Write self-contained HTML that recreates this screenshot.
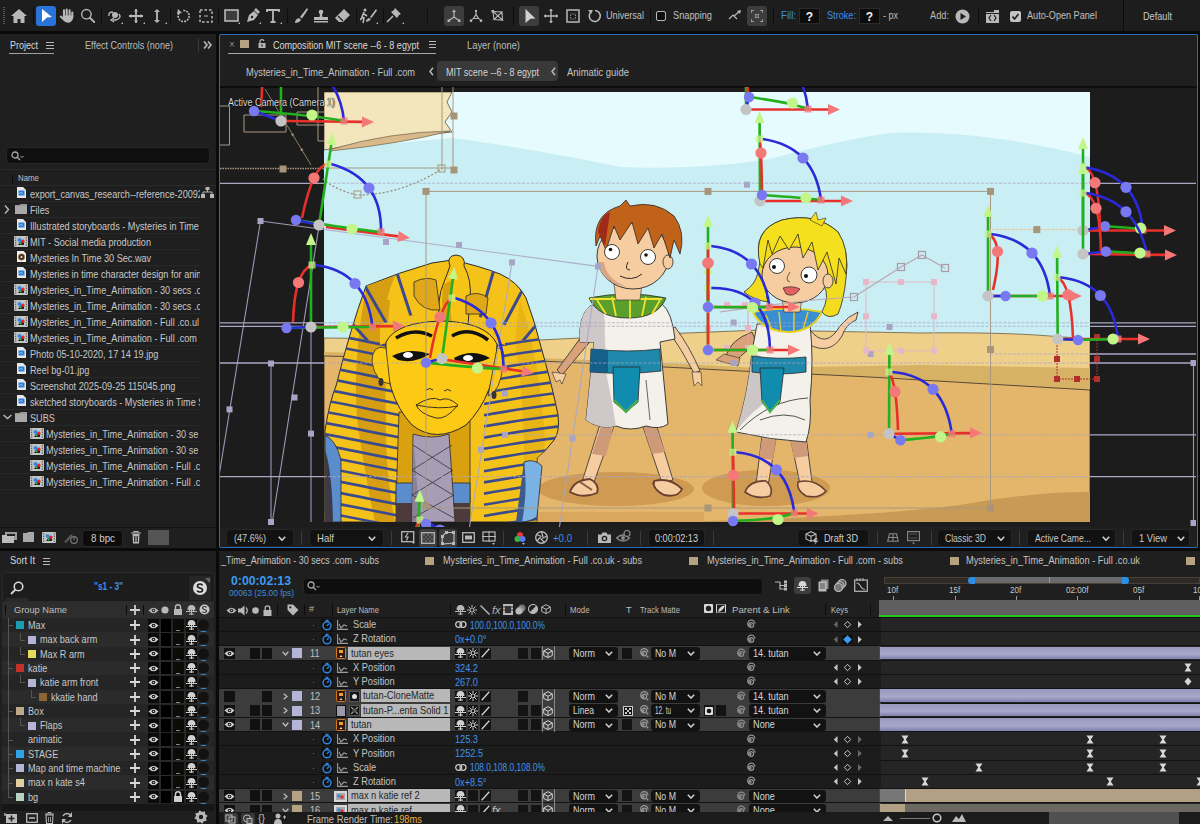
<!DOCTYPE html>
<html><head><meta charset="utf-8"><style>
html,body{margin:0;padding:0;width:1200px;height:824px;overflow:hidden;background:#0a0a0a;position:relative;font-family:"Liberation Sans",sans-serif;}
body div,body span,body svg{position:absolute;}
span{white-space:pre;display:block;}
</style></head><body>
<div style="left:0px;top:0px;width:1200px;height:31px;background:#1d1d1d;"></div>
<svg style="left:2px;top:7px;" width="4" height="17" viewBox="0 0 4 17"><rect x="1" y="0" width="2" height="1" fill="#555"/><rect x="1" y="2" width="2" height="1" fill="#555"/><rect x="1" y="4" width="2" height="1" fill="#555"/><rect x="1" y="6" width="2" height="1" fill="#555"/><rect x="1" y="8" width="2" height="1" fill="#555"/><rect x="1" y="10" width="2" height="1" fill="#555"/><rect x="1" y="12" width="2" height="1" fill="#555"/><rect x="1" y="14" width="2" height="1" fill="#555"/><rect x="1" y="16" width="2" height="1" fill="#555"/></svg>
<svg style="left:11px;top:9px;" width="16" height="14" viewBox="0 0 16 14"><path d="M8 0 L16 7 H13.5 V14 H9.5 V10 H6.5 V14 H2.5 V7 H0 Z" fill="#b8b8b8"/></svg>
<div style="left:33px;top:7px;width:1px;height:17px;background:#0e0e0e;"></div>
<div style="left:101px;top:7px;width:1px;height:17px;background:#0e0e0e;"></div>
<div style="left:170px;top:7px;width:1px;height:17px;background:#0e0e0e;"></div>
<div style="left:218px;top:7px;width:1px;height:17px;background:#0e0e0e;"></div>
<div style="left:287px;top:7px;width:1px;height:17px;background:#0e0e0e;"></div>
<div style="left:356px;top:7px;width:1px;height:17px;background:#0e0e0e;"></div>
<div style="left:383px;top:7px;width:1px;height:17px;background:#0e0e0e;"></div>
<div style="left:427px;top:7px;width:1px;height:17px;background:#0e0e0e;"></div>
<div style="left:513px;top:7px;width:1px;height:17px;background:#0e0e0e;"></div>
<div style="left:650px;top:7px;width:1px;height:17px;background:#0e0e0e;"></div>
<div style="left:773px;top:7px;width:1px;height:17px;background:#0e0e0e;"></div>
<div style="left:978px;top:7px;width:1px;height:17px;background:#0e0e0e;"></div>
<div style="left:36px;top:6px;width:20px;height:20px;background:#2a73d9;border-radius:3px;"></div>
<svg style="left:41px;top:9px;" width="12" height="14" viewBox="0 0 12 14"><path d="M1 0 L11 8 L6 8.5 L1 13 Z" fill="#fff"/></svg>
<svg style="left:58px;top:7px;" width="17" height="17" viewBox="0 0 17 17"><g stroke="#b8b8b8" stroke-width="2.1" stroke-linecap="round"><path d="M6 9 V3.2 M8.7 9 V2.5 M11.6 9 V3.4 M14.3 10 V5.6 M6.5 13 L2.8 9.6"/></g><path d="M4.8 8.5 H15.3 L15 11.5 Q13.5 15.8 10 15.8 Q6.8 15.8 5.2 13 Z" fill="#b8b8b8"/></svg>
<svg style="left:80px;top:7px;" width="17" height="17" viewBox="0 0 17 17"><circle cx="6.4" cy="7.2" r="4.7" stroke="#b8b8b8" stroke-width="1.4" fill="none"/><path d="M9.8 10.6 L14.2 15" stroke="#b8b8b8" stroke-width="1.8" stroke-linecap="round"/></svg>
<svg style="left:107px;top:9px;" width="17" height="15" viewBox="0 0 17 15"><circle cx="8" cy="6" r="3" fill="#b8b8b8"/><path d="M2 7 Q1 3 6 3 M12 5 Q15 9 9 11 L6 11" stroke="#b8b8b8" stroke-width="1.4" fill="none"/><path d="M7 9 L4 11 L7 13" stroke="#b8b8b8" stroke-width="1.4" fill="none"/><path d="M16 13 L16 15 L14 15 Z" fill="#b8b8b8"/></svg>
<svg style="left:129px;top:9px;" width="17" height="15" viewBox="0 0 17 15"><path d="M7 0 L7 14 M0 7 L14 7" stroke="#b8b8b8" stroke-width="1.8"/><path d="M7 0 L5 2.5 H9 Z M7 14 L5 11.5 H9 Z M0 7 L2.5 5 V9 Z M14 7 L11.5 5 V9 Z" fill="#b8b8b8"/><path d="M16 13 L16 15 L14 15 Z" fill="#b8b8b8"/></svg>
<svg style="left:151px;top:9px;" width="17" height="15" viewBox="0 0 17 15"><path d="M6 1 L6 13" stroke="#b8b8b8" stroke-width="1.8"/><path d="M6 0 L3 3 H9 Z M6 14 L3 11 H9 Z" fill="#b8b8b8"/><path d="M16 13 L16 15 L14 15 Z" fill="#b8b8b8"/></svg>
<svg style="left:176px;top:9px;" width="15" height="14" viewBox="0 0 15 14"><path d="M3 4 A5.5 5.5 0 1 0 7 1.5" stroke="#b8b8b8" stroke-width="1.6" fill="none" stroke-dasharray="2 1"/><path d="M2 0 L6 4 L1 5 Z" fill="#b8b8b8"/></svg>
<svg style="left:199px;top:9px;" width="14" height="14" viewBox="0 0 14 14"><rect x="1" y="1" width="12" height="12" stroke="#b8b8b8" stroke-width="1.5" fill="none" stroke-dasharray="2.5 2"/><path d="M5 7 H9" stroke="#b8b8b8"/></svg>
<svg style="left:224px;top:9px;" width="17" height="15" viewBox="0 0 17 15"><rect x="1" y="1" width="13" height="11" stroke="#b8b8b8" stroke-width="1.6" fill="#3c3c3c"/><path d="M16 13 L16 15 L14 15 Z" fill="#b8b8b8"/></svg>
<svg style="left:245px;top:8px;" width="17" height="16" viewBox="0 0 17 16"><path d="M2 14 L4 7 L9 3 L13 7 L9 12 Z" fill="#b8b8b8"/><path d="M9 2 L11 0 L15 4 L13 6 Z" fill="#b8b8b8"/><circle cx="7" cy="9" r="1.2" fill="#1d1d1d"/><path d="M16 14 L16 16 L14 16 Z" fill="#b8b8b8"/></svg>
<svg style="left:266px;top:9px;" width="17" height="15" viewBox="0 0 17 15"><path d="M1 3 V1 H13 V3 M7 1 V13 M4.5 13 H9.5" stroke="#b8b8b8" stroke-width="1.8" fill="none"/><path d="M16 13 L16 15 L14 15 Z" fill="#b8b8b8"/></svg>
<svg style="left:294px;top:8px;" width="14" height="16" viewBox="0 0 14 16"><path d="M13 0 L6 9 L8 10.5 L14 1.5 Z" fill="#b8b8b8"/><path d="M5 10 Q1 11 1 15 Q5 15 7 12 Z" fill="#b8b8b8"/></svg>
<svg style="left:313px;top:9px;" width="16" height="14" viewBox="0 0 16 14"><circle cx="8" cy="3" r="2.3" fill="#b8b8b8"/><path d="M7 5 H9 L9.5 8 H15 V11 H1 V8 H6.5 Z" fill="#b8b8b8"/><rect x="1" y="12" width="14" height="1.5" fill="#b8b8b8"/></svg>
<svg style="left:334px;top:9px;" width="17" height="14" viewBox="0 0 17 14"><path d="M10 0 L16 6 L9 13 L5 13 L1 9 Z" fill="#b8b8b8"/><path d="M4 7 L9 12" stroke="#1d1d1d" stroke-width="1.2"/></svg>
<svg style="left:360px;top:8px;" width="19" height="16" viewBox="0 0 19 16"><circle cx="5" cy="2" r="1.5" fill="#b8b8b8"/><path d="M4 4 L2 9 L4 10 L3 15 M4 6 L7 8 M3 9 L0 12" stroke="#b8b8b8" stroke-width="1.6" fill="none"/><path d="M16 1 L10 9 L11.5 10 L17 2.5 Z M9 10 Q6 11 6 14 Q9 14 11 11 Z" fill="#b8b8b8"/><path d="M18 14 L18 16 L16 16 Z" fill="#b8b8b8"/></svg>
<svg style="left:386px;top:8px;" width="19" height="16" viewBox="0 0 19 16"><path d="M9 0 L15 6 L13 7 L11 10 L5 4 L8 2 Z" fill="#b8b8b8"/><path d="M7 8 L1 14" stroke="#b8b8b8" stroke-width="1.6"/><path d="M18 14 L18 16 L16 16 Z" fill="#b8b8b8"/></svg>
<div style="left:444px;top:6px;width:20px;height:20px;background:#3d3d3d;border-radius:3px;"></div>
<svg style="left:446px;top:8px;" width="16" height="16" viewBox="0 0 16 16"><path d="M8 9 V3.5 M8 9 L3 12.5 M8 9 L13 12.5" stroke="#b8b8b8" stroke-width="1.2"/><path d="M8 1.5 L6 4 H10 Z" fill="#b8b8b8"/><rect x="1.5" y="11.5" width="2.5" height="2.5" fill="#b8b8b8"/><rect x="12" y="11.5" width="2.5" height="2.5" fill="#b8b8b8"/></svg>
<svg style="left:468px;top:8px;" width="16" height="16" viewBox="0 0 16 16"><path d="M8 6.5 L5.5 10.5 H10.5 Z" stroke="#b8b8b8" stroke-width="1.2" fill="none"/><path d="M8 3 V6.5 M5.5 10.5 L3 12.5 M10.5 10.5 L13 12.5" stroke="#b8b8b8" stroke-width="1"/><circle cx="8" cy="3" r="1.2" fill="#b8b8b8"/><rect x="1.8" y="11.5" width="2.4" height="2.4" fill="#b8b8b8"/><rect x="11.8" y="11.5" width="2.4" height="2.4" fill="#b8b8b8"/></svg>
<svg style="left:490px;top:8px;" width="15" height="14" viewBox="0 0 15 14"><path d="M3 3.5 L12 4 L4 11.5 L12.5 12 Z M3 3.5 L4 11.5 M12 4 L12.5 12" stroke="#b8b8b8" stroke-width="1.1" fill="none"/><rect x="1.5" y="2" width="2.5" height="2.5" fill="#b8b8b8"/></svg>
<div style="left:519px;top:6px;width:20px;height:20px;background:#3d3d3d;border-radius:3px;"></div>
<svg style="left:524px;top:8px;" width="13" height="16" viewBox="0 0 13 16"><path d="M1.5 1 L11.5 10.5 L6.5 10.8 L1.5 15 Z" fill="#d0d0d0"/></svg>
<svg style="left:544px;top:9px;" width="14" height="14" viewBox="0 0 14 14"><path d="M7 0 V14 M0 7 H14" stroke="#b8b8b8" stroke-width="1.3"/><path d="M7 0 L5 2 H9 Z M7 14 L5 12 H9 Z M0 7 L2 5 V9 Z M14 7 L12 5 V9 Z" fill="#b8b8b8"/></svg>
<svg style="left:566px;top:9px;" width="14" height="14" viewBox="0 0 14 14"><rect x="1" y="1" width="12" height="12" stroke="#b8b8b8" stroke-width="1.5" fill="none"/><rect x="4.5" y="5" width="5" height="5" stroke="#b8b8b8" stroke-width="0.8" stroke-dasharray="1 1" fill="none"/></svg>
<svg style="left:587px;top:9px;" width="15" height="14" viewBox="0 0 15 14"><path d="M4 3 A5.5 5.5 0 1 0 8 1.5" stroke="#b8b8b8" stroke-width="1.6" fill="none"/><path d="M1 1 L6 1 L4 5 Z" fill="#b8b8b8"/></svg>
<span style="left:606.00px;top:11.20px;font-size:10.4px;line-height:10.4px;color:#c0c0c0;transform:scaleX(0.8766);transform-origin:0 0;">Universal</span>
<div style="left:656px;top:11px;width:10px;height:10px;background:#0f0f0f;border:1.5px solid #b8b8b8;border-radius:2px;box-sizing:border-box;"></div>
<span style="left:673.00px;top:11.20px;font-size:10.4px;line-height:10.4px;color:#c0c0c0;transform:scaleX(0.8873);transform-origin:0 0;">Snapping</span>
<svg style="left:728px;top:10px;" width="14" height="12" viewBox="0 0 14 12"><path d="M1 9 L5 5 L9 9 M6 6 L12 1" stroke="#b8b8b8" stroke-width="1.2" fill="none"/><path d="M13 0 L9 1 L12 4 Z" fill="#b8b8b8"/></svg>
<div style="left:747px;top:6px;width:20px;height:20px;background:#3d3d3d;border-radius:3px;"></div>
<svg style="left:751px;top:10px;" width="12" height="12" viewBox="0 0 12 12"><path d="M0 3 V0 H3 M9 0 H12 V3 M12 9 V12 H9 M3 12 H0 V9" stroke="#b8b8b8" stroke-width="1.3" fill="none"/><rect x="4" y="4" width="1.5" height="1.5" fill="#b8b8b8"/><rect x="6.5" y="4" width="1.5" height="1.5" fill="#b8b8b8"/><rect x="4" y="6.5" width="1.5" height="1.5" fill="#b8b8b8"/><rect x="6.5" y="6.5" width="1.5" height="1.5" fill="#b8b8b8"/></svg>
<span style="left:781.00px;top:11.20px;font-size:10.4px;line-height:10.4px;color:#3b8ee8;transform:scaleX(0.9274);transform-origin:0 0;">Fill:</span>
<div style="left:799px;top:8px;width:21px;height:16px;background:#0c0c0c;border:1px solid #2a2a2a;box-sizing:border-box;"></div>
<span style="left:805.83px;top:10.84px;font-size:12px;line-height:12px;color:#f0f0f0;font-weight:bold;">?</span>
<span style="left:827.00px;top:11.20px;font-size:10.4px;line-height:10.4px;color:#3b8ee8;transform:scaleX(0.8802);transform-origin:0 0;">Stroke:</span>
<div style="left:859px;top:8px;width:21px;height:16px;background:#0c0c0c;border:1px solid #2a2a2a;box-sizing:border-box;"></div>
<span style="left:865.83px;top:10.84px;font-size:12px;line-height:12px;color:#f0f0f0;font-weight:bold;">?</span>
<span style="left:883.00px;top:11.20px;font-size:10.4px;line-height:10.4px;color:#b8b8b8;transform:scaleX(0.8652);transform-origin:0 0;">- px</span>
<span style="left:930.00px;top:11.20px;font-size:10.4px;line-height:10.4px;color:#b8b8b8;transform:scaleX(0.8881);transform-origin:0 0;">Add:</span>
<svg style="left:955px;top:9px;" width="15" height="15" viewBox="0 0 15 15"><circle cx="7.5" cy="7.5" r="7" fill="#b8b8b8"/><path d="M5.5 4 L11 7.5 L5.5 11 Z" fill="#1d1d1d"/></svg>
<svg style="left:986px;top:10px;" width="13" height="13" viewBox="0 0 13 13"><rect x="0" y="2" width="13" height="11" fill="#b8b8b8"/><rect x="8" y="0" width="5" height="3" fill="#b8b8b8"/><path d="M5 5 L3 8 L5 11 M8 5 L10 8 L8 11" stroke="#1d1d1d" stroke-width="1.2" fill="none"/><rect x="0" y="3" width="13" height="1" fill="#1d1d1d"/></svg>
<div style="left:1010px;top:11px;width:11px;height:11px;background:#c4c4c4;border-radius:2px;"></div>
<svg style="left:1010px;top:11px;" width="11" height="11" viewBox="0 0 11 11"><path d="M2.5 5.5 L4.5 8 L8.5 3" stroke="#1d1d1d" stroke-width="1.6" fill="none"/></svg>
<span style="left:1027.00px;top:11.20px;font-size:10.4px;line-height:10.4px;color:#c0c0c0;transform:scaleX(0.8773);transform-origin:0 0;">Auto-Open Panel</span>
<div style="left:1123px;top:0px;width:1px;height:31px;background:#0c0c0c;"></div>
<span style="left:1143.00px;top:11.70px;font-size:10.4px;line-height:10.4px;color:#c8c8c8;transform:scaleX(0.8801);transform-origin:0 0;">Default</span>
<div style="left:0px;top:34px;width:216px;height:514px;background:#1f1f1f;"></div>
<span style="left:10.00px;top:39.86px;font-size:10.8px;line-height:10.8px;color:#d8d8d8;transform:scaleX(0.8330);transform-origin:0 0;">Project</span>
<div style="left:9px;top:52.5px;width:45px;height:1.5px;background:#a0a0a0;"></div>
<svg style="left:46px;top:42px;" width="9" height="7" viewBox="0 0 9 7"><path d="M0 0.5 H8 M0 3.5 H8 M0 6.5 H8" stroke="#b8b8b8" stroke-width="1"/></svg>
<span style="left:85.00px;top:39.86px;font-size:10.8px;line-height:10.8px;color:#bdbdbd;transform:scaleX(0.8393);transform-origin:0 0;">Effect Controls (none)</span>
<div style="left:198px;top:38px;width:1px;height:14px;background:#3a3a3a;"></div>
<svg style="left:203px;top:41px;" width="10" height="8" viewBox="0 0 10 8"><path d="M1 0.5 L4 4 L1 7.5 M5 0.5 L8 4 L5 7.5" stroke="#b8b8b8" stroke-width="1.6" fill="none"/></svg>
<div style="left:6px;top:147px;width:204px;height:17px;background:#0f0f0f;border:1px solid #262626;border-radius:4px;box-sizing:border-box;"></div>
<svg style="left:11px;top:151px;" width="15" height="10" viewBox="0 0 15 10"><circle cx="4" cy="4" r="3" stroke="#a8a8a8" stroke-width="1.3" fill="none"/><path d="M6.3 6.3 L9 9" stroke="#a8a8a8" stroke-width="1.3"/><path d="M9.5 5 L11 6.5 L12.5 5" stroke="#a8a8a8" stroke-width="1" fill="none"/></svg>
<div style="left:0px;top:169px;width:216px;height:1px;background:#2a2a2a;"></div>
<div style="left:12px;top:175px;width:1px;height:9px;background:#0a0a0a;"></div>
<span style="left:18.00px;top:173.46px;font-size:9.5px;line-height:9.5px;color:#c0c0c0;transform:scaleX(0.8287);transform-origin:0 0;">Name</span>
<div style="left:0px;top:185px;width:216px;height:1px;background:#2a2a2a;"></div>
<div style="left:0px;top:201px;width:200px;height:1px;background:#292929;"></div>
<svg style="left:17px;top:187px;" width="9" height="11" viewBox="0 0 9 11"><path d="M0 0 H6 L9 3 V11 H0 Z" fill="#e8e8e8"/><rect x="1.5" y="3.5" width="6" height="5" fill="#2f7fd8"/><path d="M2 7 L4 5 L6 7" stroke="#9cc8f5" stroke-width="0.8" fill="none"/></svg>
<div style="left:30px;top:185px;width:170px;height:16px;overflow:hidden">
<span style="left:0;top:3.86px;font-size:10.8px;line-height:10.8px;color:#c8c8c8;transform:scaleX(0.845);transform-origin:0 0">export_canvas_research--reference-20092</span></div>
<div style="left:0px;top:217px;width:200px;height:1px;background:#292929;"></div>
<svg style="left:15px;top:204px;" width="12" height="10" viewBox="0 0 12 10"><path d="M0 1 H4.5 L5.5 0 H12 V10 H0 Z" fill="#9a9a9a"/><rect x="0" y="2" width="12" height="8" fill="#a8a8a8"/></svg>
<div style="left:30px;top:201px;width:170px;height:16px;overflow:hidden">
<span style="left:0;top:3.86px;font-size:10.8px;line-height:10.8px;color:#c8c8c8;transform:scaleX(0.845);transform-origin:0 0">Files</span></div>
<svg style="left:4px;top:205px;" width="6" height="9" viewBox="0 0 6 9"><path d="M1 0.5 L4.5 4.5 L1 8.5" stroke="#b8b8b8" stroke-width="1.4" fill="none"/></svg>
<div style="left:0px;top:233px;width:200px;height:1px;background:#292929;"></div>
<svg style="left:17px;top:219px;" width="9" height="11" viewBox="0 0 9 11"><path d="M0 0 H6 L9 3 V11 H0 Z" fill="#e8e8e8"/><rect x="1.5" y="3.5" width="6" height="5" fill="#2f7fd8"/><path d="M2 7 L4 5 L6 7" stroke="#9cc8f5" stroke-width="0.8" fill="none"/></svg>
<div style="left:30px;top:217px;width:170px;height:16px;overflow:hidden">
<span style="left:0;top:3.86px;font-size:10.8px;line-height:10.8px;color:#c8c8c8;transform:scaleX(0.845);transform-origin:0 0">Illustrated storyboards - Mysteries in Time</span></div>
<div style="left:0px;top:249px;width:200px;height:1px;background:#292929;"></div>
<svg style="left:14px;top:235.5px;" width="14" height="11" viewBox="0 0 14 11"><rect x="0" y="0" width="14" height="11" rx="1" fill="#c4c4c4"/><rect x="1" y="1.3" width="1.2" height="1.2" fill="#555"/><rect x="11.8" y="1.3" width="1.2" height="1.2" fill="#555"/><rect x="1" y="3.7" width="1.2" height="1.2" fill="#555"/><rect x="11.8" y="3.7" width="1.2" height="1.2" fill="#555"/><rect x="1" y="6.1" width="1.2" height="1.2" fill="#555"/><rect x="11.8" y="6.1" width="1.2" height="1.2" fill="#555"/><rect x="1" y="8.5" width="1.2" height="1.2" fill="#555"/><rect x="11.8" y="8.5" width="1.2" height="1.2" fill="#555"/><path d="M4 9 L10 9 L10 4 L6 6 Z" fill="#222"/><circle cx="5.5" cy="4" r="2" fill="#2a8ee0"/><circle cx="8.8" cy="5.2" r="1.8" fill="#e02828"/><circle cx="6.6" cy="7.4" r="1.1" fill="#30b060"/></svg>
<div style="left:30px;top:233px;width:170px;height:16px;overflow:hidden">
<span style="left:0;top:3.86px;font-size:10.8px;line-height:10.8px;color:#c8c8c8;transform:scaleX(0.845);transform-origin:0 0">MIT - Social media production</span></div>
<div style="left:0px;top:265px;width:200px;height:1px;background:#292929;"></div>
<svg style="left:17px;top:251px;" width="9" height="11" viewBox="0 0 9 11"><path d="M0 0 H6.5 L9 2.5 V11 H0 Z" fill="#f0f0f0"/><circle cx="4.5" cy="6" r="3.2" fill="#2a2a2a" stroke="#d08030" stroke-width="0.7"/><path d="M3.6 4.4 L6.2 6 L3.6 7.6 Z" fill="#e8e8e8"/></svg>
<div style="left:30px;top:249px;width:170px;height:16px;overflow:hidden">
<span style="left:0;top:3.86px;font-size:10.8px;line-height:10.8px;color:#c8c8c8;transform:scaleX(0.845);transform-origin:0 0">Mysteries In Time 30 Sec.wav</span></div>
<div style="left:0px;top:281px;width:200px;height:1px;background:#292929;"></div>
<svg style="left:17px;top:267px;" width="9" height="11" viewBox="0 0 9 11"><path d="M0 0 H6 L9 3 V11 H0 Z" fill="#e8e8e8"/><rect x="1.5" y="3.5" width="6" height="5" fill="#2f7fd8"/><path d="M2 7 L4 5 L6 7" stroke="#9cc8f5" stroke-width="0.8" fill="none"/></svg>
<div style="left:30px;top:265px;width:170px;height:16px;overflow:hidden">
<span style="left:0;top:3.86px;font-size:10.8px;line-height:10.8px;color:#c8c8c8;transform:scaleX(0.845);transform-origin:0 0">Mysteries in time character design for anin</span></div>
<div style="left:0px;top:297px;width:200px;height:1px;background:#292929;"></div>
<svg style="left:14px;top:283.5px;" width="14" height="11" viewBox="0 0 14 11"><rect x="0" y="0" width="14" height="11" rx="1" fill="#c4c4c4"/><rect x="1" y="1.3" width="1.2" height="1.2" fill="#555"/><rect x="11.8" y="1.3" width="1.2" height="1.2" fill="#555"/><rect x="1" y="3.7" width="1.2" height="1.2" fill="#555"/><rect x="11.8" y="3.7" width="1.2" height="1.2" fill="#555"/><rect x="1" y="6.1" width="1.2" height="1.2" fill="#555"/><rect x="11.8" y="6.1" width="1.2" height="1.2" fill="#555"/><rect x="1" y="8.5" width="1.2" height="1.2" fill="#555"/><rect x="11.8" y="8.5" width="1.2" height="1.2" fill="#555"/><path d="M4 9 L10 9 L10 4 L6 6 Z" fill="#222"/><circle cx="5.5" cy="4" r="2" fill="#2a8ee0"/><circle cx="8.8" cy="5.2" r="1.8" fill="#e02828"/><circle cx="6.6" cy="7.4" r="1.1" fill="#30b060"/></svg>
<div style="left:30px;top:281px;width:170px;height:16px;overflow:hidden">
<span style="left:0;top:3.86px;font-size:10.8px;line-height:10.8px;color:#c8c8c8;transform:scaleX(0.845);transform-origin:0 0">Mysteries_in_Time_Animation - 30 secs .c</span></div>
<div style="left:0px;top:313px;width:200px;height:1px;background:#292929;"></div>
<svg style="left:14px;top:299.5px;" width="14" height="11" viewBox="0 0 14 11"><rect x="0" y="0" width="14" height="11" rx="1" fill="#c4c4c4"/><rect x="1" y="1.3" width="1.2" height="1.2" fill="#555"/><rect x="11.8" y="1.3" width="1.2" height="1.2" fill="#555"/><rect x="1" y="3.7" width="1.2" height="1.2" fill="#555"/><rect x="11.8" y="3.7" width="1.2" height="1.2" fill="#555"/><rect x="1" y="6.1" width="1.2" height="1.2" fill="#555"/><rect x="11.8" y="6.1" width="1.2" height="1.2" fill="#555"/><rect x="1" y="8.5" width="1.2" height="1.2" fill="#555"/><rect x="11.8" y="8.5" width="1.2" height="1.2" fill="#555"/><path d="M4 9 L10 9 L10 4 L6 6 Z" fill="#222"/><circle cx="5.5" cy="4" r="2" fill="#2a8ee0"/><circle cx="8.8" cy="5.2" r="1.8" fill="#e02828"/><circle cx="6.6" cy="7.4" r="1.1" fill="#30b060"/></svg>
<div style="left:30px;top:297px;width:170px;height:16px;overflow:hidden">
<span style="left:0;top:3.86px;font-size:10.8px;line-height:10.8px;color:#c8c8c8;transform:scaleX(0.845);transform-origin:0 0">Mysteries_in_Time_Animation - 30 secs .c</span></div>
<div style="left:0px;top:329px;width:200px;height:1px;background:#292929;"></div>
<svg style="left:14px;top:315.5px;" width="14" height="11" viewBox="0 0 14 11"><rect x="0" y="0" width="14" height="11" rx="1" fill="#c4c4c4"/><rect x="1" y="1.3" width="1.2" height="1.2" fill="#555"/><rect x="11.8" y="1.3" width="1.2" height="1.2" fill="#555"/><rect x="1" y="3.7" width="1.2" height="1.2" fill="#555"/><rect x="11.8" y="3.7" width="1.2" height="1.2" fill="#555"/><rect x="1" y="6.1" width="1.2" height="1.2" fill="#555"/><rect x="11.8" y="6.1" width="1.2" height="1.2" fill="#555"/><rect x="1" y="8.5" width="1.2" height="1.2" fill="#555"/><rect x="11.8" y="8.5" width="1.2" height="1.2" fill="#555"/><path d="M4 9 L10 9 L10 4 L6 6 Z" fill="#222"/><circle cx="5.5" cy="4" r="2" fill="#2a8ee0"/><circle cx="8.8" cy="5.2" r="1.8" fill="#e02828"/><circle cx="6.6" cy="7.4" r="1.1" fill="#30b060"/></svg>
<div style="left:30px;top:313px;width:170px;height:16px;overflow:hidden">
<span style="left:0;top:3.86px;font-size:10.8px;line-height:10.8px;color:#c8c8c8;transform:scaleX(0.845);transform-origin:0 0">Mysteries_in_Time_Animation - Full .co.ul</span></div>
<div style="left:0px;top:345px;width:200px;height:1px;background:#292929;"></div>
<svg style="left:14px;top:331.5px;" width="14" height="11" viewBox="0 0 14 11"><rect x="0" y="0" width="14" height="11" rx="1" fill="#c4c4c4"/><rect x="1" y="1.3" width="1.2" height="1.2" fill="#555"/><rect x="11.8" y="1.3" width="1.2" height="1.2" fill="#555"/><rect x="1" y="3.7" width="1.2" height="1.2" fill="#555"/><rect x="11.8" y="3.7" width="1.2" height="1.2" fill="#555"/><rect x="1" y="6.1" width="1.2" height="1.2" fill="#555"/><rect x="11.8" y="6.1" width="1.2" height="1.2" fill="#555"/><rect x="1" y="8.5" width="1.2" height="1.2" fill="#555"/><rect x="11.8" y="8.5" width="1.2" height="1.2" fill="#555"/><path d="M4 9 L10 9 L10 4 L6 6 Z" fill="#222"/><circle cx="5.5" cy="4" r="2" fill="#2a8ee0"/><circle cx="8.8" cy="5.2" r="1.8" fill="#e02828"/><circle cx="6.6" cy="7.4" r="1.1" fill="#30b060"/></svg>
<div style="left:30px;top:329px;width:170px;height:16px;overflow:hidden">
<span style="left:0;top:3.86px;font-size:10.8px;line-height:10.8px;color:#c8c8c8;transform:scaleX(0.845);transform-origin:0 0">Mysteries_in_Time_Animation - Full .com</span></div>
<div style="left:0px;top:361px;width:200px;height:1px;background:#292929;"></div>
<svg style="left:17px;top:347px;" width="9" height="11" viewBox="0 0 9 11"><path d="M0 0 H6 L9 3 V11 H0 Z" fill="#e8e8e8"/><rect x="1.5" y="3.5" width="6" height="5" fill="#2f7fd8"/><path d="M2 7 L4 5 L6 7" stroke="#9cc8f5" stroke-width="0.8" fill="none"/></svg>
<div style="left:30px;top:345px;width:170px;height:16px;overflow:hidden">
<span style="left:0;top:3.86px;font-size:10.8px;line-height:10.8px;color:#c8c8c8;transform:scaleX(0.845);transform-origin:0 0">Photo 05-10-2020, 17 14 19.jpg</span></div>
<div style="left:0px;top:377px;width:200px;height:1px;background:#292929;"></div>
<svg style="left:17px;top:363px;" width="9" height="11" viewBox="0 0 9 11"><path d="M0 0 H6 L9 3 V11 H0 Z" fill="#e8e8e8"/><rect x="1.5" y="3.5" width="6" height="5" fill="#2f7fd8"/><path d="M2 7 L4 5 L6 7" stroke="#9cc8f5" stroke-width="0.8" fill="none"/></svg>
<div style="left:30px;top:361px;width:170px;height:16px;overflow:hidden">
<span style="left:0;top:3.86px;font-size:10.8px;line-height:10.8px;color:#c8c8c8;transform:scaleX(0.845);transform-origin:0 0">Reel bg-01.jpg</span></div>
<div style="left:0px;top:393px;width:200px;height:1px;background:#292929;"></div>
<svg style="left:17px;top:379px;" width="9" height="11" viewBox="0 0 9 11"><path d="M0 0 H6 L9 3 V11 H0 Z" fill="#e8e8e8"/><rect x="1.5" y="3.5" width="6" height="5" fill="#2f7fd8"/><path d="M2 7 L4 5 L6 7" stroke="#9cc8f5" stroke-width="0.8" fill="none"/></svg>
<div style="left:30px;top:377px;width:170px;height:16px;overflow:hidden">
<span style="left:0;top:3.86px;font-size:10.8px;line-height:10.8px;color:#c8c8c8;transform:scaleX(0.845);transform-origin:0 0">Screenshot 2025-09-25 115045.png</span></div>
<div style="left:0px;top:409px;width:200px;height:1px;background:#292929;"></div>
<svg style="left:17px;top:395px;" width="9" height="11" viewBox="0 0 9 11"><path d="M0 0 H6 L9 3 V11 H0 Z" fill="#e8e8e8"/><rect x="1.5" y="3.5" width="6" height="5" fill="#2f7fd8"/><path d="M2 7 L4 5 L6 7" stroke="#9cc8f5" stroke-width="0.8" fill="none"/></svg>
<div style="left:30px;top:393px;width:170px;height:16px;overflow:hidden">
<span style="left:0;top:3.86px;font-size:10.8px;line-height:10.8px;color:#c8c8c8;transform:scaleX(0.845);transform-origin:0 0">sketched storyboards - Mysteries in Time S</span></div>
<div style="left:0px;top:425px;width:200px;height:1px;background:#292929;"></div>
<svg style="left:15px;top:412px;" width="12" height="10" viewBox="0 0 12 10"><path d="M0 1 H4.5 L5.5 0 H12 V10 H0 Z" fill="#9a9a9a"/><rect x="0" y="2" width="12" height="8" fill="#a8a8a8"/></svg>
<div style="left:30px;top:409px;width:170px;height:16px;overflow:hidden">
<span style="left:0;top:3.86px;font-size:10.8px;line-height:10.8px;color:#c8c8c8;transform:scaleX(0.845);transform-origin:0 0">SUBS</span></div>
<svg style="left:3px;top:414px;" width="9" height="6" viewBox="0 0 9 6"><path d="M0.5 1 L4.5 4.5 L8.5 1" stroke="#b8b8b8" stroke-width="1.4" fill="none"/></svg>
<div style="left:0px;top:441px;width:200px;height:1px;background:#292929;"></div>
<svg style="left:30px;top:427.5px;" width="14" height="11" viewBox="0 0 14 11"><rect x="0" y="0" width="14" height="11" rx="1" fill="#c4c4c4"/><rect x="1" y="1.3" width="1.2" height="1.2" fill="#555"/><rect x="11.8" y="1.3" width="1.2" height="1.2" fill="#555"/><rect x="1" y="3.7" width="1.2" height="1.2" fill="#555"/><rect x="11.8" y="3.7" width="1.2" height="1.2" fill="#555"/><rect x="1" y="6.1" width="1.2" height="1.2" fill="#555"/><rect x="11.8" y="6.1" width="1.2" height="1.2" fill="#555"/><rect x="1" y="8.5" width="1.2" height="1.2" fill="#555"/><rect x="11.8" y="8.5" width="1.2" height="1.2" fill="#555"/><path d="M4 9 L10 9 L10 4 L6 6 Z" fill="#222"/><circle cx="5.5" cy="4" r="2" fill="#2a8ee0"/><circle cx="8.8" cy="5.2" r="1.8" fill="#e02828"/><circle cx="6.6" cy="7.4" r="1.1" fill="#30b060"/></svg>
<div style="left:46px;top:425px;width:154px;height:16px;overflow:hidden">
<span style="left:0;top:3.86px;font-size:10.8px;line-height:10.8px;color:#c8c8c8;transform:scaleX(0.845);transform-origin:0 0">Mysteries_in_Time_Animation - 30 se</span></div>
<div style="left:0px;top:457px;width:200px;height:1px;background:#292929;"></div>
<svg style="left:30px;top:443.5px;" width="14" height="11" viewBox="0 0 14 11"><rect x="0" y="0" width="14" height="11" rx="1" fill="#c4c4c4"/><rect x="1" y="1.3" width="1.2" height="1.2" fill="#555"/><rect x="11.8" y="1.3" width="1.2" height="1.2" fill="#555"/><rect x="1" y="3.7" width="1.2" height="1.2" fill="#555"/><rect x="11.8" y="3.7" width="1.2" height="1.2" fill="#555"/><rect x="1" y="6.1" width="1.2" height="1.2" fill="#555"/><rect x="11.8" y="6.1" width="1.2" height="1.2" fill="#555"/><rect x="1" y="8.5" width="1.2" height="1.2" fill="#555"/><rect x="11.8" y="8.5" width="1.2" height="1.2" fill="#555"/><path d="M4 9 L10 9 L10 4 L6 6 Z" fill="#222"/><circle cx="5.5" cy="4" r="2" fill="#2a8ee0"/><circle cx="8.8" cy="5.2" r="1.8" fill="#e02828"/><circle cx="6.6" cy="7.4" r="1.1" fill="#30b060"/></svg>
<div style="left:46px;top:441px;width:154px;height:16px;overflow:hidden">
<span style="left:0;top:3.86px;font-size:10.8px;line-height:10.8px;color:#c8c8c8;transform:scaleX(0.845);transform-origin:0 0">Mysteries_in_Time_Animation - 30 se</span></div>
<div style="left:0px;top:473px;width:200px;height:1px;background:#292929;"></div>
<svg style="left:30px;top:459.5px;" width="14" height="11" viewBox="0 0 14 11"><rect x="0" y="0" width="14" height="11" rx="1" fill="#c4c4c4"/><rect x="1" y="1.3" width="1.2" height="1.2" fill="#555"/><rect x="11.8" y="1.3" width="1.2" height="1.2" fill="#555"/><rect x="1" y="3.7" width="1.2" height="1.2" fill="#555"/><rect x="11.8" y="3.7" width="1.2" height="1.2" fill="#555"/><rect x="1" y="6.1" width="1.2" height="1.2" fill="#555"/><rect x="11.8" y="6.1" width="1.2" height="1.2" fill="#555"/><rect x="1" y="8.5" width="1.2" height="1.2" fill="#555"/><rect x="11.8" y="8.5" width="1.2" height="1.2" fill="#555"/><path d="M4 9 L10 9 L10 4 L6 6 Z" fill="#222"/><circle cx="5.5" cy="4" r="2" fill="#2a8ee0"/><circle cx="8.8" cy="5.2" r="1.8" fill="#e02828"/><circle cx="6.6" cy="7.4" r="1.1" fill="#30b060"/></svg>
<div style="left:46px;top:457px;width:154px;height:16px;overflow:hidden">
<span style="left:0;top:3.86px;font-size:10.8px;line-height:10.8px;color:#c8c8c8;transform:scaleX(0.845);transform-origin:0 0">Mysteries_in_Time_Animation - Full .c</span></div>
<div style="left:0px;top:489px;width:200px;height:1px;background:#292929;"></div>
<svg style="left:30px;top:475.5px;" width="14" height="11" viewBox="0 0 14 11"><rect x="0" y="0" width="14" height="11" rx="1" fill="#c4c4c4"/><rect x="1" y="1.3" width="1.2" height="1.2" fill="#555"/><rect x="11.8" y="1.3" width="1.2" height="1.2" fill="#555"/><rect x="1" y="3.7" width="1.2" height="1.2" fill="#555"/><rect x="11.8" y="3.7" width="1.2" height="1.2" fill="#555"/><rect x="1" y="6.1" width="1.2" height="1.2" fill="#555"/><rect x="11.8" y="6.1" width="1.2" height="1.2" fill="#555"/><rect x="1" y="8.5" width="1.2" height="1.2" fill="#555"/><rect x="11.8" y="8.5" width="1.2" height="1.2" fill="#555"/><path d="M4 9 L10 9 L10 4 L6 6 Z" fill="#222"/><circle cx="5.5" cy="4" r="2" fill="#2a8ee0"/><circle cx="8.8" cy="5.2" r="1.8" fill="#e02828"/><circle cx="6.6" cy="7.4" r="1.1" fill="#30b060"/></svg>
<div style="left:46px;top:473px;width:154px;height:16px;overflow:hidden">
<span style="left:0;top:3.86px;font-size:10.8px;line-height:10.8px;color:#c8c8c8;transform:scaleX(0.845);transform-origin:0 0">Mysteries_in_Time_Animation - Full .c</span></div>
<svg style="left:201px;top:187px;" width="13" height="11" viewBox="0 0 13 11"><rect x="4.5" y="0" width="4" height="3" fill="#b8b8b8"/><rect x="0" y="7" width="4" height="4" fill="#b8b8b8"/><rect x="9" y="7" width="4" height="4" fill="#b8b8b8"/><path d="M6.5 3 V5 M2 7 V5 H11 V7" stroke="#b8b8b8" fill="none"/></svg>
<div style="left:0px;top:527px;width:216px;height:1px;background:#131313;"></div>
<svg style="left:2px;top:532px;" width="15" height="12" viewBox="0 0 15 12"><rect x="3" y="0" width="12" height="8" fill="#9a9a9a"/><rect x="0" y="3" width="12" height="8" fill="#bcbcbc"/><rect x="5" y="2" width="8" height="2" fill="#1f1f1f"/></svg>
<svg style="left:23px;top:532px;" width="11" height="10" viewBox="0 0 11 10"><path d="M0 1 H4 L5 0 H11 V10 H0 Z" fill="#a8a8a8"/></svg>
<svg style="left:42px;top:532px;" width="14" height="11" viewBox="0 0 14 11"><rect x="0" y="0" width="14" height="11" rx="1" fill="#c4c4c4"/><rect x="1" y="1.3" width="1.2" height="1.2" fill="#555"/><rect x="11.8" y="1.3" width="1.2" height="1.2" fill="#555"/><rect x="1" y="3.7" width="1.2" height="1.2" fill="#555"/><rect x="11.8" y="3.7" width="1.2" height="1.2" fill="#555"/><rect x="1" y="6.1" width="1.2" height="1.2" fill="#555"/><rect x="11.8" y="6.1" width="1.2" height="1.2" fill="#555"/><rect x="1" y="8.5" width="1.2" height="1.2" fill="#555"/><rect x="11.8" y="8.5" width="1.2" height="1.2" fill="#555"/><path d="M4 9 L10 9 L10 4 L6 6 Z" fill="#222"/><circle cx="5.5" cy="4" r="2" fill="#2a8ee0"/><circle cx="8.8" cy="5.2" r="1.8" fill="#e02828"/><circle cx="6.6" cy="7.4" r="1.1" fill="#30b060"/></svg>
<svg style="left:63px;top:532px;" width="15" height="12" viewBox="0 0 15 12"><path d="M1 10 L8 2 L10 4 L3 11 Z" fill="#555"/><circle cx="11" cy="8" r="3.3" stroke="#777" stroke-width="1.2" fill="none"/><path d="M11 4 V8" stroke="#777" stroke-width="1.2"/></svg>
<div style="left:82px;top:530px;width:41px;height:17px;background:#0c0c0c;border:1px solid #262626;border-radius:4px;box-sizing:border-box;"></div>
<span style="left:90.50px;top:532.86px;font-size:10.8px;line-height:10.8px;color:#d0d0d0;transform:scaleX(0.9084);transform-origin:0 0;">8 bpc</span>
<svg style="left:131px;top:531px;" width="10" height="13" viewBox="0 0 10 13"><path d="M0 2 H10 M3 2 V0.5 H7 V2" stroke="#b8b8b8" stroke-width="1.2" fill="none"/><path d="M1.5 3 H8.5 L8 12.5 H2 Z" fill="#b8b8b8"/><path d="M3.5 5 V11 M5 5 V11 M6.5 5 V11" stroke="#1f1f1f" stroke-width="0.8"/></svg>
<div style="left:148px;top:530px;width:21px;height:15px;background:#555555;"></div>
<div style="left:0px;top:551px;width:216px;height:273px;background:#1f1f1f;"></div>
<span style="left:10.00px;top:555.36px;font-size:10.8px;line-height:10.8px;color:#d8d8d8;transform:scaleX(0.8678);transform-origin:0 0;">Sort It</span>
<svg style="left:43px;top:558px;" width="8" height="7" viewBox="0 0 8 7"><path d="M0 0.5 H7 M0 3.5 H7 M0 6.5 H7" stroke="#b8b8b8" stroke-width="1"/></svg>
<div style="left:2px;top:572px;width:213px;height:30px;background:#1c1c1c;border:1px solid #2a2a2a;border-radius:4px;box-sizing:border-box;"></div>
<div style="left:6px;top:598px;width:22px;height:3px;background:#2a2a2a;"></div>
<svg style="left:10px;top:581px;" width="14" height="14" viewBox="0 0 14 14"><circle cx="8.5" cy="5.5" r="4.3" stroke="#d8d8d8" stroke-width="1.6" fill="none"/><path d="M5.5 8.5 L1 13" stroke="#d8d8d8" stroke-width="1.8"/></svg>
<span style="left:93.50px;top:581.36px;font-size:10.8px;line-height:10.8px;color:#3d8ff0;font-weight:bold;transform:scaleX(0.7660);transform-origin:0 0;">"s1 - 3"</span>
<div style="left:189px;top:576px;width:22px;height:24px;background:#262626;"></div>
<svg style="left:193px;top:581px;" width="14" height="14" viewBox="0 0 14 14"><circle cx="7" cy="7" r="7" fill="#dcdcdc"/><path d="M9.5 4.5 Q9 3 7 3 Q4.5 3 4.5 5 Q4.5 6.5 7 7 Q9.5 7.5 9.5 9 Q9.5 11 7 11 Q4.5 11 4.3 9.5" stroke="#1a1a1a" stroke-width="1.6" fill="none"/></svg>
<svg style="left:205px;top:578px;" width="5" height="5" viewBox="0 0 5 5"><path d="M0 0 H5 V5 Z" fill="#666"/></svg>
<div style="left:2px;top:602px;width:212px;height:16px;background:#2d2d2d;"></div>
<div style="left:5px;top:605px;width:1px;height:10px;background:#0c0c0c;"></div>
<span style="left:14.00px;top:605.20px;font-size:9.8px;line-height:9.8px;color:#bdbdbd;transform:scaleX(0.9447);transform-origin:0 0;">Group Name</span>
<div style="left:126px;top:605px;width:1px;height:10px;background:#0c0c0c;"></div>
<div style="left:143px;top:605px;width:1px;height:10px;background:#0c0c0c;"></div>
<svg style="left:130px;top:605px;" width="10" height="10" viewBox="0 0 10 10"><path d="M5 0 V10 M0 5 H10" stroke="#d0d0d0" stroke-width="1.8"/></svg>
<svg style="left:148px;top:606.5px;" width="11" height="7" viewBox="0 0 11 7"><path d="M0.5 3.5 Q5.5 -2 10.5 3.5 Q5.5 9 0.5 3.5 Z" fill="#b8b8b8"/><circle cx="5.5" cy="3.5" r="1.8" fill="#2d2d2d"/><circle cx="5.5" cy="3.5" r="0.8" fill="#b8b8b8"/></svg>
<svg style="left:161px;top:606px;" width="8" height="8" viewBox="0 0 8 8"><circle cx="4" cy="4" r="3.6" fill="#b8b8b8"/></svg>
<svg style="left:173px;top:604px;" width="10" height="11" viewBox="0 0 10 11"><path d="M2.5 5 V3 Q2.5 0.8 5 0.8 Q7.5 0.8 7.5 3 V5" stroke="#b8b8b8" stroke-width="1.4" fill="none"/><rect x="1" y="5" width="8" height="6" fill="#b8b8b8"/></svg>
<svg style="left:185.5px;top:605px;" width="11" height="10" viewBox="0 0 11 10"><path d="M1.5 5 Q1.5 0 5.5 0 Q9.5 0 9.5 5 Z" fill="#b8b8b8"/><path d="M0 6.5 H11 M5.5 3 V10 M3 9 H8" stroke="#b8b8b8" stroke-width="1.2"/><path d="M3.5 5 V7 M7.5 5 V7" stroke="#b8b8b8"/></svg>
<svg style="left:199px;top:604px;" width="11" height="11" viewBox="0 0 11 11"><circle cx="5.5" cy="5.5" r="5" fill="#c8c8c8"/><path d="M7.5 3.5 Q7 2.5 5.5 2.5 Q3.5 2.5 3.5 4 Q3.5 5 5.5 5.5 Q7.5 6 7.5 7 Q7.5 8.5 5.5 8.5 Q3.5 8.5 3.3 7.5" stroke="#2d2d2d" stroke-width="1.2" fill="none"/></svg>
<div style="left:2px;top:617.5px;width:212px;height:1px;background:#111;"></div>
<div style="left:2px;top:618.0px;width:212px;height:14.5px;background:#252525;"></div>
<div style="left:8.0px;top:625.2px;width:5px;height:1px;background:#555;"></div>
<div style="left:16.0px;top:621.4px;width:8px;height:8px;background:#1d9bb2;"></div>
<span style="left:28.00px;top:620.06px;font-size:10.8px;line-height:10.8px;color:#c8c8c8;transform:scaleX(0.8450);transform-origin:0 0;">Max</span>
<svg style="left:130px;top:620.2px;" width="10" height="10" viewBox="0 0 10 10"><path d="M5 0 V10 M0 5 H10" stroke="#d8d8d8" stroke-width="1.8"/></svg>
<div style="left:148px;top:619.0px;width:10.5px;height:12.5px;background:#0b0b0b;"></div>
<svg style="left:148px;top:621.7px;" width="11" height="7" viewBox="0 0 11 7"><path d="M0.5 3.5 Q5.5 -2 10.5 3.5 Q5.5 9 0.5 3.5 Z" fill="#d0d0d0"/><circle cx="5.5" cy="3.5" r="1.8" fill="#0b0b0b"/><circle cx="5.5" cy="3.5" r="0.8" fill="#d0d0d0"/></svg>
<div style="left:160.5px;top:619.0px;width:10.5px;height:12.5px;background:#000;"></div>
<div style="left:172.5px;top:619.0px;width:11px;height:12.5px;background:#0d0b07;"></div>
<div style="left:176px;top:630.0px;width:4px;height:1px;background:#888;"></div>
<div style="left:185.5px;top:619.0px;width:11px;height:12.5px;background:#0d0d0d;"></div>
<svg style="left:185.5px;top:620.2px;" width="11" height="10" viewBox="0 0 11 10"><path d="M1.5 5 Q1.5 0 5.5 0 Q9.5 0 9.5 5 Z" fill="#d0d0d0"/><path d="M0 6.5 H11 M5.5 3 V10 M3 9 H8" stroke="#d0d0d0" stroke-width="1.2"/><path d="M3.5 5 V7 M7.5 5 V7" stroke="#d0d0d0"/></svg>
<svg style="left:197px;top:618.0px;" width="14" height="15" viewBox="0 0 14 15"><circle cx="6.5" cy="7" r="5.5" fill="#121212"/><path d="M3 14 Q6.5 11.5 10 14 Z" fill="#2a8ad8"/></svg>
<div style="left:2px;top:632.3px;width:212px;height:14.5px;background:#2b2b2b;"></div>
<div style="left:19.5px;top:632.5px;width:1px;height:7.5px;background:#555;"></div>
<div style="left:19.5px;top:639.5px;width:5px;height:1px;background:#555;"></div>
<div style="left:27.5px;top:635.7px;width:8px;height:8px;background:#b4b4d6;"></div>
<span style="left:39.50px;top:634.36px;font-size:10.8px;line-height:10.8px;color:#c8c8c8;transform:scaleX(0.8450);transform-origin:0 0;">max back arm</span>
<svg style="left:130px;top:634.5px;" width="10" height="10" viewBox="0 0 10 10"><path d="M5 0 V10 M0 5 H10" stroke="#d8d8d8" stroke-width="1.8"/></svg>
<div style="left:148px;top:633.3px;width:10.5px;height:12.5px;background:#0b0b0b;"></div>
<svg style="left:148px;top:636.0px;" width="11" height="7" viewBox="0 0 11 7"><path d="M0.5 3.5 Q5.5 -2 10.5 3.5 Q5.5 9 0.5 3.5 Z" fill="#d0d0d0"/><circle cx="5.5" cy="3.5" r="1.8" fill="#0b0b0b"/><circle cx="5.5" cy="3.5" r="0.8" fill="#d0d0d0"/></svg>
<div style="left:160.5px;top:633.3px;width:10.5px;height:12.5px;background:#000;"></div>
<div style="left:172.5px;top:633.3px;width:11px;height:12.5px;background:#0d0b07;"></div>
<div style="left:176px;top:644.3px;width:4px;height:1px;background:#888;"></div>
<div style="left:185.5px;top:633.3px;width:11px;height:12.5px;background:#0d0d0d;"></div>
<svg style="left:185.5px;top:634.5px;" width="11" height="10" viewBox="0 0 11 10"><path d="M1.5 5 Q1.5 0 5.5 0 Q9.5 0 9.5 5 Z" fill="#d0d0d0"/><path d="M0 6.5 H11 M5.5 3 V10 M3 9 H8" stroke="#d0d0d0" stroke-width="1.2"/><path d="M3.5 5 V7 M7.5 5 V7" stroke="#d0d0d0"/></svg>
<svg style="left:197px;top:632.3px;" width="14" height="15" viewBox="0 0 14 15"><circle cx="6.5" cy="7" r="5.5" fill="#121212"/><path d="M3 14 Q6.5 11.5 10 14 Z" fill="#2a8ad8"/></svg>
<div style="left:2px;top:646.6px;width:212px;height:14.5px;background:#252525;"></div>
<div style="left:19.5px;top:646.8px;width:1px;height:7.5px;background:#555;"></div>
<div style="left:19.5px;top:653.8px;width:5px;height:1px;background:#555;"></div>
<div style="left:27.5px;top:650.0px;width:8px;height:8px;background:#e2dd5a;"></div>
<span style="left:39.50px;top:648.66px;font-size:10.8px;line-height:10.8px;color:#c8c8c8;transform:scaleX(0.8450);transform-origin:0 0;">Max R arm</span>
<svg style="left:130px;top:648.8px;" width="10" height="10" viewBox="0 0 10 10"><path d="M5 0 V10 M0 5 H10" stroke="#d8d8d8" stroke-width="1.8"/></svg>
<div style="left:148px;top:647.6px;width:10.5px;height:12.5px;background:#0b0b0b;"></div>
<svg style="left:148px;top:650.3px;" width="11" height="7" viewBox="0 0 11 7"><path d="M0.5 3.5 Q5.5 -2 10.5 3.5 Q5.5 9 0.5 3.5 Z" fill="#d0d0d0"/><circle cx="5.5" cy="3.5" r="1.8" fill="#0b0b0b"/><circle cx="5.5" cy="3.5" r="0.8" fill="#d0d0d0"/></svg>
<div style="left:160.5px;top:647.6px;width:10.5px;height:12.5px;background:#000;"></div>
<div style="left:172.5px;top:647.6px;width:11px;height:12.5px;background:#0d0b07;"></div>
<div style="left:176px;top:658.6px;width:4px;height:1px;background:#888;"></div>
<div style="left:185.5px;top:647.6px;width:11px;height:12.5px;background:#0d0d0d;"></div>
<svg style="left:185.5px;top:648.8px;" width="11" height="10" viewBox="0 0 11 10"><path d="M1.5 5 Q1.5 0 5.5 0 Q9.5 0 9.5 5 Z" fill="#d0d0d0"/><path d="M0 6.5 H11 M5.5 3 V10 M3 9 H8" stroke="#d0d0d0" stroke-width="1.2"/><path d="M3.5 5 V7 M7.5 5 V7" stroke="#d0d0d0"/></svg>
<svg style="left:197px;top:646.6px;" width="14" height="15" viewBox="0 0 14 15"><circle cx="6.5" cy="7" r="5.5" fill="#121212"/><path d="M3 14 Q6.5 11.5 10 14 Z" fill="#2a8ad8"/></svg>
<div style="left:2px;top:660.9px;width:212px;height:14.5px;background:#2b2b2b;"></div>
<div style="left:8.0px;top:668.1px;width:5px;height:1px;background:#555;"></div>
<div style="left:16.0px;top:664.3px;width:8px;height:8px;background:#c1322c;"></div>
<span style="left:28.00px;top:662.96px;font-size:10.8px;line-height:10.8px;color:#c8c8c8;transform:scaleX(0.8450);transform-origin:0 0;">katie</span>
<svg style="left:130px;top:663.1px;" width="10" height="10" viewBox="0 0 10 10"><path d="M5 0 V10 M0 5 H10" stroke="#d8d8d8" stroke-width="1.8"/></svg>
<div style="left:148px;top:661.9px;width:10.5px;height:12.5px;background:#0b0b0b;"></div>
<svg style="left:148px;top:664.6px;" width="11" height="7" viewBox="0 0 11 7"><path d="M0.5 3.5 Q5.5 -2 10.5 3.5 Q5.5 9 0.5 3.5 Z" fill="#d0d0d0"/><circle cx="5.5" cy="3.5" r="1.8" fill="#0b0b0b"/><circle cx="5.5" cy="3.5" r="0.8" fill="#d0d0d0"/></svg>
<div style="left:160.5px;top:661.9px;width:10.5px;height:12.5px;background:#000;"></div>
<div style="left:172.5px;top:661.9px;width:11px;height:12.5px;background:#0d0b07;"></div>
<div style="left:176px;top:672.9px;width:4px;height:1px;background:#888;"></div>
<div style="left:185.5px;top:661.9px;width:11px;height:12.5px;background:#0d0d0d;"></div>
<svg style="left:185.5px;top:663.1px;" width="11" height="10" viewBox="0 0 11 10"><path d="M1.5 5 Q1.5 0 5.5 0 Q9.5 0 9.5 5 Z" fill="#d0d0d0"/><path d="M0 6.5 H11 M5.5 3 V10 M3 9 H8" stroke="#d0d0d0" stroke-width="1.2"/><path d="M3.5 5 V7 M7.5 5 V7" stroke="#d0d0d0"/></svg>
<svg style="left:197px;top:660.9px;" width="14" height="15" viewBox="0 0 14 15"><circle cx="6.5" cy="7" r="5.5" fill="#121212"/><path d="M3 14 Q6.5 11.5 10 14 Z" fill="#2a8ad8"/></svg>
<div style="left:2px;top:675.2px;width:212px;height:14.5px;background:#252525;"></div>
<div style="left:19.5px;top:675.4px;width:1px;height:7.5px;background:#555;"></div>
<div style="left:19.5px;top:682.4px;width:5px;height:1px;background:#555;"></div>
<div style="left:27.5px;top:678.6px;width:8px;height:8px;background:#b4b4d6;"></div>
<span style="left:39.50px;top:677.26px;font-size:10.8px;line-height:10.8px;color:#c8c8c8;transform:scaleX(0.8450);transform-origin:0 0;">katie arm front</span>
<svg style="left:130px;top:677.4px;" width="10" height="10" viewBox="0 0 10 10"><path d="M5 0 V10 M0 5 H10" stroke="#d8d8d8" stroke-width="1.8"/></svg>
<div style="left:148px;top:676.2px;width:10.5px;height:12.5px;background:#0b0b0b;"></div>
<svg style="left:148px;top:678.9px;" width="11" height="7" viewBox="0 0 11 7"><path d="M0.5 3.5 Q5.5 -2 10.5 3.5 Q5.5 9 0.5 3.5 Z" fill="#d0d0d0"/><circle cx="5.5" cy="3.5" r="1.8" fill="#0b0b0b"/><circle cx="5.5" cy="3.5" r="0.8" fill="#d0d0d0"/></svg>
<div style="left:160.5px;top:676.2px;width:10.5px;height:12.5px;background:#000;"></div>
<div style="left:172.5px;top:676.2px;width:11px;height:12.5px;background:#0d0b07;"></div>
<div style="left:176px;top:687.2px;width:4px;height:1px;background:#888;"></div>
<div style="left:185.5px;top:676.2px;width:11px;height:12.5px;background:#0d0d0d;"></div>
<svg style="left:185.5px;top:677.4px;" width="11" height="10" viewBox="0 0 11 10"><path d="M1.5 5 Q1.5 0 5.5 0 Q9.5 0 9.5 5 Z" fill="#d0d0d0"/><path d="M0 6.5 H11 M5.5 3 V10 M3 9 H8" stroke="#d0d0d0" stroke-width="1.2"/><path d="M3.5 5 V7 M7.5 5 V7" stroke="#d0d0d0"/></svg>
<svg style="left:197px;top:675.2px;" width="14" height="15" viewBox="0 0 14 15"><circle cx="6.5" cy="7" r="5.5" fill="#121212"/><path d="M3 14 Q6.5 11.5 10 14 Z" fill="#2a8ad8"/></svg>
<div style="left:2px;top:689.5px;width:212px;height:14.5px;background:#2b2b2b;"></div>
<div style="left:31.0px;top:689.7px;width:1px;height:7.5px;background:#555;"></div>
<div style="left:31.0px;top:696.7px;width:5px;height:1px;background:#555;"></div>
<div style="left:39.0px;top:692.9px;width:8px;height:8px;background:#8c6536;"></div>
<span style="left:51.00px;top:691.56px;font-size:10.8px;line-height:10.8px;color:#c8c8c8;transform:scaleX(0.8450);transform-origin:0 0;">kkatie hand</span>
<svg style="left:130px;top:691.7px;" width="10" height="10" viewBox="0 0 10 10"><path d="M5 0 V10 M0 5 H10" stroke="#d8d8d8" stroke-width="1.8"/></svg>
<div style="left:148px;top:690.5px;width:10.5px;height:12.5px;background:#0b0b0b;"></div>
<svg style="left:148px;top:693.2px;" width="11" height="7" viewBox="0 0 11 7"><path d="M0.5 3.5 Q5.5 -2 10.5 3.5 Q5.5 9 0.5 3.5 Z" fill="#d0d0d0"/><circle cx="5.5" cy="3.5" r="1.8" fill="#0b0b0b"/><circle cx="5.5" cy="3.5" r="0.8" fill="#d0d0d0"/></svg>
<div style="left:160.5px;top:690.5px;width:10.5px;height:12.5px;background:#000;"></div>
<div style="left:172.5px;top:690.5px;width:11px;height:12.5px;background:#0d0b07;"></div>
<div style="left:176px;top:701.5px;width:4px;height:1px;background:#888;"></div>
<div style="left:185.5px;top:690.5px;width:11px;height:12.5px;background:#0d0d0d;"></div>
<svg style="left:185.5px;top:691.7px;" width="11" height="10" viewBox="0 0 11 10"><path d="M1.5 5 Q1.5 0 5.5 0 Q9.5 0 9.5 5 Z" fill="#d0d0d0"/><path d="M0 6.5 H11 M5.5 3 V10 M3 9 H8" stroke="#d0d0d0" stroke-width="1.2"/><path d="M3.5 5 V7 M7.5 5 V7" stroke="#d0d0d0"/></svg>
<svg style="left:197px;top:689.5px;" width="14" height="15" viewBox="0 0 14 15"><circle cx="6.5" cy="7" r="5.5" fill="#121212"/><path d="M3 14 Q6.5 11.5 10 14 Z" fill="#2a8ad8"/></svg>
<div style="left:2px;top:703.8px;width:212px;height:14.5px;background:#252525;"></div>
<div style="left:8.0px;top:711.0px;width:5px;height:1px;background:#555;"></div>
<div style="left:16.0px;top:707.2px;width:8px;height:8px;background:#bba98a;"></div>
<span style="left:28.00px;top:705.86px;font-size:10.8px;line-height:10.8px;color:#c8c8c8;transform:scaleX(0.8450);transform-origin:0 0;">Box</span>
<svg style="left:130px;top:706.0px;" width="10" height="10" viewBox="0 0 10 10"><path d="M5 0 V10 M0 5 H10" stroke="#d8d8d8" stroke-width="1.8"/></svg>
<div style="left:148px;top:704.8px;width:10.5px;height:12.5px;background:#0b0b0b;"></div>
<svg style="left:148px;top:707.5px;" width="11" height="7" viewBox="0 0 11 7"><path d="M0.5 3.5 Q5.5 -2 10.5 3.5 Q5.5 9 0.5 3.5 Z" fill="#d0d0d0"/><circle cx="5.5" cy="3.5" r="1.8" fill="#0b0b0b"/><circle cx="5.5" cy="3.5" r="0.8" fill="#d0d0d0"/></svg>
<div style="left:160.5px;top:704.8px;width:10.5px;height:12.5px;background:#000;"></div>
<div style="left:172.5px;top:704.8px;width:11px;height:12.5px;background:#0d0b07;"></div>
<div style="left:176px;top:715.8px;width:4px;height:1px;background:#888;"></div>
<div style="left:185.5px;top:704.8px;width:11px;height:12.5px;background:#0d0d0d;"></div>
<svg style="left:185.5px;top:706.0px;" width="11" height="10" viewBox="0 0 11 10"><path d="M1.5 5 Q1.5 0 5.5 0 Q9.5 0 9.5 5 Z" fill="#d0d0d0"/><path d="M0 6.5 H11 M5.5 3 V10 M3 9 H8" stroke="#d0d0d0" stroke-width="1.2"/><path d="M3.5 5 V7 M7.5 5 V7" stroke="#d0d0d0"/></svg>
<svg style="left:197px;top:703.8px;" width="14" height="15" viewBox="0 0 14 15"><circle cx="6.5" cy="7" r="5.5" fill="#121212"/><path d="M3 14 Q6.5 11.5 10 14 Z" fill="#2a8ad8"/></svg>
<div style="left:2px;top:718.1px;width:212px;height:14.5px;background:#2b2b2b;"></div>
<div style="left:19.5px;top:718.3px;width:1px;height:7.5px;background:#555;"></div>
<div style="left:19.5px;top:725.3px;width:5px;height:1px;background:#555;"></div>
<div style="left:27.5px;top:721.5px;width:8px;height:8px;background:#b4b4d6;"></div>
<span style="left:39.50px;top:720.16px;font-size:10.8px;line-height:10.8px;color:#c8c8c8;transform:scaleX(0.8450);transform-origin:0 0;">Flaps</span>
<svg style="left:130px;top:720.3px;" width="10" height="10" viewBox="0 0 10 10"><path d="M5 0 V10 M0 5 H10" stroke="#d8d8d8" stroke-width="1.8"/></svg>
<div style="left:148px;top:719.1px;width:10.5px;height:12.5px;background:#0b0b0b;"></div>
<svg style="left:148px;top:721.8px;" width="11" height="7" viewBox="0 0 11 7"><path d="M0.5 3.5 Q5.5 -2 10.5 3.5 Q5.5 9 0.5 3.5 Z" fill="#d0d0d0"/><circle cx="5.5" cy="3.5" r="1.8" fill="#0b0b0b"/><circle cx="5.5" cy="3.5" r="0.8" fill="#d0d0d0"/></svg>
<div style="left:160.5px;top:719.1px;width:10.5px;height:12.5px;background:#000;"></div>
<div style="left:172.5px;top:719.1px;width:11px;height:12.5px;background:#0d0b07;"></div>
<div style="left:176px;top:730.1px;width:4px;height:1px;background:#888;"></div>
<div style="left:185.5px;top:719.1px;width:11px;height:12.5px;background:#0d0d0d;"></div>
<svg style="left:185.5px;top:720.3px;" width="11" height="10" viewBox="0 0 11 10"><path d="M1.5 5 Q1.5 0 5.5 0 Q9.5 0 9.5 5 Z" fill="#d0d0d0"/><path d="M0 6.5 H11 M5.5 3 V10 M3 9 H8" stroke="#d0d0d0" stroke-width="1.2"/><path d="M3.5 5 V7 M7.5 5 V7" stroke="#d0d0d0"/></svg>
<svg style="left:197px;top:718.1px;" width="14" height="15" viewBox="0 0 14 15"><circle cx="6.5" cy="7" r="5.5" fill="#121212"/><path d="M3 14 Q6.5 11.5 10 14 Z" fill="#2a8ad8"/></svg>
<div style="left:2px;top:732.4px;width:212px;height:14.5px;background:#252525;"></div>
<div style="left:8.0px;top:739.6px;width:5px;height:1px;background:#555;"></div>
<span style="left:28.00px;top:734.46px;font-size:10.8px;line-height:10.8px;color:#c8c8c8;transform:scaleX(0.8450);transform-origin:0 0;">animatic</span>
<svg style="left:130px;top:734.6px;" width="10" height="10" viewBox="0 0 10 10"><path d="M5 0 V10 M0 5 H10" stroke="#d8d8d8" stroke-width="1.8"/></svg>
<div style="left:148px;top:733.4px;width:10.5px;height:12.5px;background:#0b0b0b;"></div>
<svg style="left:148px;top:736.1px;" width="11" height="7" viewBox="0 0 11 7"><path d="M0.5 3.5 Q5.5 -2 10.5 3.5 Q5.5 9 0.5 3.5 Z" fill="#d0d0d0"/><circle cx="5.5" cy="3.5" r="1.8" fill="#0b0b0b"/><circle cx="5.5" cy="3.5" r="0.8" fill="#d0d0d0"/></svg>
<div style="left:160.5px;top:733.4px;width:10.5px;height:12.5px;background:#000;"></div>
<div style="left:172.5px;top:733.4px;width:11px;height:12.5px;background:#0d0b07;"></div>
<div style="left:176px;top:744.4px;width:4px;height:1px;background:#888;"></div>
<div style="left:185.5px;top:733.4px;width:11px;height:12.5px;background:#0d0d0d;"></div>
<svg style="left:185.5px;top:734.6px;" width="11" height="10" viewBox="0 0 11 10"><path d="M1.5 5 Q1.5 0 5.5 0 Q9.5 0 9.5 5 Z" fill="#d0d0d0"/><path d="M0 6.5 H11 M5.5 3 V10 M3 9 H8" stroke="#d0d0d0" stroke-width="1.2"/><path d="M3.5 5 V7 M7.5 5 V7" stroke="#d0d0d0"/></svg>
<svg style="left:197px;top:732.4px;" width="14" height="15" viewBox="0 0 14 15"><circle cx="6.5" cy="7" r="5.5" fill="#121212"/><path d="M3 14 Q6.5 11.5 10 14 Z" fill="#2a8ad8"/></svg>
<div style="left:2px;top:746.7px;width:212px;height:14.5px;background:#2b2b2b;"></div>
<div style="left:8.0px;top:753.9px;width:5px;height:1px;background:#555;"></div>
<div style="left:16.0px;top:750.1px;width:8px;height:8px;background:#30a3e8;"></div>
<span style="left:28.00px;top:748.76px;font-size:10.8px;line-height:10.8px;color:#c8c8c8;transform:scaleX(0.8450);transform-origin:0 0;">STAGE</span>
<svg style="left:130px;top:748.9px;" width="10" height="10" viewBox="0 0 10 10"><path d="M5 0 V10 M0 5 H10" stroke="#d8d8d8" stroke-width="1.8"/></svg>
<div style="left:148px;top:747.7px;width:10.5px;height:12.5px;background:#0b0b0b;"></div>
<svg style="left:148px;top:750.4px;" width="11" height="7" viewBox="0 0 11 7"><path d="M0.5 3.5 Q5.5 -2 10.5 3.5 Q5.5 9 0.5 3.5 Z" fill="#d0d0d0"/><circle cx="5.5" cy="3.5" r="1.8" fill="#0b0b0b"/><circle cx="5.5" cy="3.5" r="0.8" fill="#d0d0d0"/></svg>
<div style="left:160.5px;top:747.7px;width:10.5px;height:12.5px;background:#000;"></div>
<div style="left:172.5px;top:747.7px;width:11px;height:12.5px;background:#0d0b07;"></div>
<div style="left:176px;top:758.7px;width:4px;height:1px;background:#888;"></div>
<div style="left:185.5px;top:747.7px;width:11px;height:12.5px;background:#0d0d0d;"></div>
<svg style="left:185.5px;top:748.9px;" width="11" height="10" viewBox="0 0 11 10"><path d="M1.5 5 Q1.5 0 5.5 0 Q9.5 0 9.5 5 Z" fill="#d0d0d0"/><path d="M0 6.5 H11 M5.5 3 V10 M3 9 H8" stroke="#d0d0d0" stroke-width="1.2"/><path d="M3.5 5 V7 M7.5 5 V7" stroke="#d0d0d0"/></svg>
<svg style="left:197px;top:746.7px;" width="14" height="15" viewBox="0 0 14 15"><circle cx="6.5" cy="7" r="5.5" fill="#121212"/><path d="M3 14 Q6.5 11.5 10 14 Z" fill="#2a8ad8"/></svg>
<div style="left:2px;top:761.0px;width:212px;height:14.5px;background:#252525;"></div>
<div style="left:8.0px;top:768.2px;width:5px;height:1px;background:#555;"></div>
<div style="left:16.0px;top:764.4px;width:8px;height:8px;background:#b4b4d6;"></div>
<span style="left:28.00px;top:763.06px;font-size:10.8px;line-height:10.8px;color:#c8c8c8;transform:scaleX(0.8450);transform-origin:0 0;">Map and time machine</span>
<svg style="left:130px;top:763.2px;" width="10" height="10" viewBox="0 0 10 10"><path d="M5 0 V10 M0 5 H10" stroke="#d8d8d8" stroke-width="1.8"/></svg>
<div style="left:148px;top:762.0px;width:10.5px;height:12.5px;background:#0b0b0b;"></div>
<svg style="left:148px;top:764.7px;" width="11" height="7" viewBox="0 0 11 7"><path d="M0.5 3.5 Q5.5 -2 10.5 3.5 Q5.5 9 0.5 3.5 Z" fill="#d0d0d0"/><circle cx="5.5" cy="3.5" r="1.8" fill="#0b0b0b"/><circle cx="5.5" cy="3.5" r="0.8" fill="#d0d0d0"/></svg>
<div style="left:160.5px;top:762.0px;width:10.5px;height:12.5px;background:#000;"></div>
<div style="left:172.5px;top:762.0px;width:11px;height:12.5px;background:#0d0b07;"></div>
<div style="left:176px;top:773.0px;width:4px;height:1px;background:#888;"></div>
<div style="left:185.5px;top:762.0px;width:11px;height:12.5px;background:#0d0d0d;"></div>
<svg style="left:185.5px;top:763.2px;" width="11" height="10" viewBox="0 0 11 10"><path d="M1.5 5 Q1.5 0 5.5 0 Q9.5 0 9.5 5 Z" fill="#d0d0d0"/><path d="M0 6.5 H11 M5.5 3 V10 M3 9 H8" stroke="#d0d0d0" stroke-width="1.2"/><path d="M3.5 5 V7 M7.5 5 V7" stroke="#d0d0d0"/></svg>
<svg style="left:197px;top:761.0px;" width="14" height="15" viewBox="0 0 14 15"><circle cx="6.5" cy="7" r="5.5" fill="#121212"/><path d="M3 14 Q6.5 11.5 10 14 Z" fill="#2a8ad8"/></svg>
<div style="left:2px;top:775.3px;width:212px;height:14.5px;background:#2b2b2b;"></div>
<div style="left:8.0px;top:782.5px;width:5px;height:1px;background:#555;"></div>
<div style="left:16.0px;top:778.7px;width:8px;height:8px;background:#e0cfa0;"></div>
<span style="left:28.00px;top:777.36px;font-size:10.8px;line-height:10.8px;color:#c8c8c8;transform:scaleX(0.8450);transform-origin:0 0;">max n kate s4</span>
<svg style="left:130px;top:777.5px;" width="10" height="10" viewBox="0 0 10 10"><path d="M5 0 V10 M0 5 H10" stroke="#d8d8d8" stroke-width="1.8"/></svg>
<div style="left:148px;top:776.3px;width:10.5px;height:12.5px;background:#0b0b0b;"></div>
<svg style="left:148px;top:779.0px;" width="11" height="7" viewBox="0 0 11 7"><path d="M0.5 3.5 Q5.5 -2 10.5 3.5 Q5.5 9 0.5 3.5 Z" fill="#d0d0d0"/><circle cx="5.5" cy="3.5" r="1.8" fill="#0b0b0b"/><circle cx="5.5" cy="3.5" r="0.8" fill="#d0d0d0"/></svg>
<div style="left:160.5px;top:776.3px;width:10.5px;height:12.5px;background:#000;"></div>
<div style="left:172.5px;top:776.3px;width:11px;height:12.5px;background:#0d0b07;"></div>
<div style="left:176px;top:787.3px;width:4px;height:1px;background:#888;"></div>
<div style="left:185.5px;top:776.3px;width:11px;height:12.5px;background:#0d0d0d;"></div>
<svg style="left:185.5px;top:777.5px;" width="11" height="10" viewBox="0 0 11 10"><path d="M1.5 5 Q1.5 0 5.5 0 Q9.5 0 9.5 5 Z" fill="#d0d0d0"/><path d="M0 6.5 H11 M5.5 3 V10 M3 9 H8" stroke="#d0d0d0" stroke-width="1.2"/><path d="M3.5 5 V7 M7.5 5 V7" stroke="#d0d0d0"/></svg>
<svg style="left:197px;top:775.3px;" width="14" height="15" viewBox="0 0 14 15"><circle cx="6.5" cy="7" r="5.5" fill="#121212"/><path d="M3 14 Q6.5 11.5 10 14 Z" fill="#2a8ad8"/></svg>
<div style="left:2px;top:789.6px;width:212px;height:14.5px;background:#252525;"></div>
<div style="left:8.0px;top:796.8px;width:5px;height:1px;background:#555;"></div>
<div style="left:16.0px;top:793.0px;width:8px;height:8px;background:#b8d4c0;"></div>
<span style="left:28.00px;top:791.66px;font-size:10.8px;line-height:10.8px;color:#c8c8c8;transform:scaleX(0.8450);transform-origin:0 0;">bg</span>
<svg style="left:130px;top:791.8px;" width="10" height="10" viewBox="0 0 10 10"><path d="M5 0 V10 M0 5 H10" stroke="#d8d8d8" stroke-width="1.8"/></svg>
<div style="left:148px;top:790.6px;width:10.5px;height:12.5px;background:#0b0b0b;"></div>
<svg style="left:148px;top:793.3px;" width="11" height="7" viewBox="0 0 11 7"><path d="M0.5 3.5 Q5.5 -2 10.5 3.5 Q5.5 9 0.5 3.5 Z" fill="#d0d0d0"/><circle cx="5.5" cy="3.5" r="1.8" fill="#0b0b0b"/><circle cx="5.5" cy="3.5" r="0.8" fill="#d0d0d0"/></svg>
<div style="left:160.5px;top:790.6px;width:10.5px;height:12.5px;background:#000;"></div>
<div style="left:172.5px;top:790.6px;width:11px;height:12.5px;background:#0d0b07;"></div>
<svg style="left:173px;top:791.3px;" width="10" height="11" viewBox="0 0 10 11"><path d="M2.5 5 V3 Q2.5 0.8 5 0.8 Q7.5 0.8 7.5 3 V5" stroke="#d0d0d0" stroke-width="1.4" fill="none"/><rect x="1" y="5" width="8" height="6" fill="#d0d0d0"/></svg>
<div style="left:185.5px;top:790.6px;width:11px;height:12.5px;background:#0d0d0d;"></div>
<svg style="left:185.5px;top:791.8px;" width="11" height="10" viewBox="0 0 11 10"><path d="M1.5 5 Q1.5 0 5.5 0 Q9.5 0 9.5 5 Z" fill="#d0d0d0"/><path d="M0 6.5 H11 M5.5 3 V10 M3 9 H8" stroke="#d0d0d0" stroke-width="1.2"/><path d="M3.5 5 V7 M7.5 5 V7" stroke="#d0d0d0"/></svg>
<svg style="left:197px;top:789.6px;" width="14" height="15" viewBox="0 0 14 15"><circle cx="6.5" cy="7" r="5.5" fill="#121212"/><path d="M3 14 Q6.5 11.5 10 14 Z" fill="#2a8ad8"/></svg>
<div style="left:8px;top:618px;width:1px;height:179.8px;background:#555;"></div>
<div style="left:2px;top:803.5px;width:212px;height:7px;background:#161616;"></div>
<svg style="left:4px;top:813px;" width="13" height="10" viewBox="0 0 13 10"><rect x="2" y="1" width="11" height="9" fill="#bbb"/><path d="M7.5 2.5 V8.5 M4.5 5.5 H10.5" stroke="#1f1f1f" stroke-width="1.6"/><rect x="0" y="0" width="2" height="3" fill="#888"/></svg>
<svg style="left:26px;top:813px;" width="12" height="10" viewBox="0 0 12 10"><rect x="0.7" y="0.7" width="10.6" height="8.6" stroke="#bbb" stroke-width="1.3" fill="none"/><path d="M3 5 H9" stroke="#bbb" stroke-width="1.5"/></svg>
<svg style="left:45px;top:812px;" width="9" height="12" viewBox="0 0 9 12"><path d="M0 2 H9 M3 2 V0.5 H6 V2" stroke="#b8b8b8" stroke-width="1" fill="none"/><path d="M1 3 H8 L7.5 11.5 H1.5 Z" stroke="#b8b8b8" stroke-width="1.1" fill="none"/><path d="M3.5 5 V10 M5.5 5 V10" stroke="#b8b8b8" stroke-width="0.8"/></svg>
<svg style="left:61px;top:812px;" width="12" height="12" viewBox="0 0 12 12"><path d="M10 4 A4.5 4.5 0 0 0 2 4 M2 8 A4.5 4.5 0 0 0 10 8" stroke="#b8b8b8" stroke-width="1.5" fill="none"/><path d="M11 0 V5 H7 Z M1 12 V7 H5 Z" fill="#b8b8b8"/></svg>
<svg style="left:194px;top:810px;" width="14" height="14" viewBox="0 0 14 14"><path d="M13.67 5.67 L11.90 7.98 L12.65 10.78 L9.78 11.16 L8.33 13.67 L6.02 11.90 L3.22 12.65 L2.84 9.78 L0.33 8.33 L2.10 6.02 L1.35 3.22 L4.22 2.84 L5.67 0.33 L7.98 2.10 L10.78 1.35 L11.16 4.22 Z" fill="#b8b8b8"/><circle cx="7" cy="7" r="2.2" fill="#1f1f1f"/></svg>
<div style="left:219px;top:34px;width:979px;height:514px;background:#1f1f1f;"></div>
<span style="left:229.00px;top:40.03px;font-size:10px;line-height:10px;color:#8a8a8a;">×</span>
<div style="left:240px;top:40px;width:9px;height:8px;background:#b5a283;"></div>
<svg style="left:258px;top:39px;" width="8" height="9" viewBox="0 0 8 9"><path d="M2 4 V2.5 Q2 0.7 4 0.7 Q5.8 0.7 5.8 2" stroke="#b8b8b8" stroke-width="1.2" fill="none"/><rect x="0.5" y="4" width="7" height="5" fill="#b8b8b8"/><rect x="3.3" y="5.5" width="1.4" height="2" fill="#1f1f1f"/></svg>
<span style="left:273.00px;top:40.06px;font-size:10.8px;line-height:10.8px;color:#d8d8d8;transform:scaleX(0.8368);transform-origin:0 0;">Composition MIT scene --6 - 8 egypt</span>
<svg style="left:429px;top:41px;" width="7" height="7" viewBox="0 0 7 7"><path d="M0 0.5 H7 M0 3.5 H7 M0 6.5 H7" stroke="#b8b8b8" stroke-width="1"/></svg>
<div style="left:228px;top:52.5px;width:208px;height:1.5px;background:#a8a8a8;"></div>
<span style="left:467.00px;top:40.06px;font-size:10.8px;line-height:10.8px;color:#bdbdbd;transform:scaleX(0.8655);transform-origin:0 0;">Layer (none)</span>
<span style="left:246.00px;top:67.16px;font-size:10.8px;line-height:10.8px;color:#c4c4c4;transform:scaleX(0.8550);transform-origin:0 0;">Mysteries_in_Time_Animation - Full .com</span>
<svg style="left:429px;top:67px;" width="5" height="9" viewBox="0 0 5 9"><path d="M4 0.8 L1 4.5 L4 8.2" stroke="#b8b8b8" stroke-width="1.5" fill="none"/></svg>
<div style="left:437px;top:61px;width:121px;height:20px;background:#393939;border-radius:4px;"></div>
<span style="left:446.00px;top:67.16px;font-size:10.8px;line-height:10.8px;color:#d4d4d4;transform:scaleX(0.8345);transform-origin:0 0;">MIT scene --6 - 8 egypt</span>
<svg style="left:551px;top:67px;" width="5" height="9" viewBox="0 0 5 9"><path d="M4 0.8 L1 4.5 L4 8.2" stroke="#b8b8b8" stroke-width="1.5" fill="none"/></svg>
<span style="left:567.00px;top:67.16px;font-size:10.8px;line-height:10.8px;color:#c4c4c4;transform:scaleX(0.8752);transform-origin:0 0;">Animatic guide</span>
<div style="left:219px;top:86px;width:979px;height:1.5px;background:#0d0d0d;"></div>
<div style="left:220px;top:87.5px;width:976px;height:439px;background:#1c1c1c;"></div>
<div style="left:226px;top:529px;width:68px;height:18px;background:#121212;border:1px solid #262626;border-radius:4px;box-sizing:border-box;"></div>
<span style="left:234.00px;top:532.66px;font-size:10.8px;line-height:10.8px;color:#c8c8c8;transform:scaleX(0.8462);transform-origin:0 0;">(47.6%)</span>
<svg style="left:278px;top:536px;" width="8" height="5" viewBox="0 0 8 5"><path d="M0.8 0.8 L4.0 4.2 L7.2 0.8" stroke="#d0d0d0" stroke-width="1.6" fill="none"/></svg>
<div style="left:301px;top:531px;width:1px;height:14px;background:#3a3a3a;"></div>
<div style="left:309px;top:529px;width:75px;height:18px;background:#121212;border:1px solid #262626;border-radius:4px;box-sizing:border-box;"></div>
<span style="left:317.00px;top:532.66px;font-size:10.8px;line-height:10.8px;color:#c8c8c8;transform:scaleX(0.8851);transform-origin:0 0;">Half</span>
<svg style="left:368px;top:536px;" width="8" height="5" viewBox="0 0 8 5"><path d="M0.8 0.8 L4.0 4.2 L7.2 0.8" stroke="#d0d0d0" stroke-width="1.6" fill="none"/></svg>
<div style="left:391px;top:531px;width:1px;height:14px;background:#3a3a3a;"></div>
<svg style="left:401px;top:531px;" width="15" height="14" viewBox="0 0 15 14"><rect x="0.7" y="0.7" width="12" height="10" stroke="#b8b8b8" stroke-width="1.3" fill="none"/><path d="M7 2 L4.5 6 H7 L5.5 9.5" stroke="#b8b8b8" stroke-width="1.2" fill="none"/><path d="M11 11 L14 11 L12.5 13 Z" fill="#b8b8b8"/></svg>
<div style="left:419px;top:529px;width:18px;height:18px;background:#3d3d3d;border-radius:3px;"></div>
<svg style="left:421px;top:532px;" width="14" height="12" viewBox="0 0 14 12"><rect x="0.7" y="0.7" width="12.6" height="10.6" stroke="#b8b8b8" stroke-width="1.3" fill="none"/><rect x="2.5" y="2.5" width="1" height="1" fill="#b8b8b8"/><rect x="2.5" y="6.5" width="1" height="1" fill="#b8b8b8"/><rect x="4.5" y="4.5" width="1" height="1" fill="#b8b8b8"/><rect x="4.5" y="8.5" width="1" height="1" fill="#b8b8b8"/><rect x="6.5" y="2.5" width="1" height="1" fill="#b8b8b8"/><rect x="6.5" y="6.5" width="1" height="1" fill="#b8b8b8"/><rect x="8.5" y="4.5" width="1" height="1" fill="#b8b8b8"/><rect x="8.5" y="8.5" width="1" height="1" fill="#b8b8b8"/><rect x="10.5" y="2.5" width="1" height="1" fill="#b8b8b8"/><rect x="10.5" y="6.5" width="1" height="1" fill="#b8b8b8"/></svg>
<div style="left:439px;top:529px;width:18px;height:18px;background:#3d3d3d;border-radius:3px;"></div>
<svg style="left:441px;top:531px;" width="14" height="14" viewBox="0 0 14 14"><path d="M1 13 L1.5 5 L5 1.5 L13 1.5 L13 12 Z" stroke="#b8b8b8" stroke-width="1.2" fill="none"/><rect x="0" y="4" width="3" height="3" fill="#b8b8b8"/><rect x="4" y="0" width="3" height="3" fill="#b8b8b8"/><rect x="11" y="0" width="3" height="3" fill="#b8b8b8"/><rect x="0" y="11" width="3" height="3" fill="#b8b8b8"/><rect x="11" y="11" width="3" height="3" fill="#b8b8b8"/></svg>
<svg style="left:462px;top:532px;" width="13" height="11" viewBox="0 0 13 11"><rect x="0.7" y="0.7" width="11.6" height="9.6" stroke="#b8b8b8" stroke-width="1.3" fill="none"/><rect x="3" y="3.5" width="7" height="4" fill="#b8b8b8"/></svg>
<svg style="left:482px;top:531px;" width="14" height="15" viewBox="0 0 14 15"><rect x="1" y="1" width="12" height="9" stroke="#b8b8b8" stroke-width="1.2" fill="none"/><path d="M7 0 V11 M0 5.5 H14" stroke="#b8b8b8" stroke-width="1"/><path d="M10 12 L13 12 L11.5 14 Z" fill="#b8b8b8"/></svg>
<div style="left:503px;top:531px;width:1px;height:14px;background:#3a3a3a;"></div>
<svg style="left:513px;top:531px;" width="14" height="15" viewBox="0 0 14 15"><circle cx="7" cy="4" r="3" fill="#e03a3a"/><circle cx="4.5" cy="8" r="3" fill="#30b840"/><circle cx="9.5" cy="8" r="3" fill="#5a7af0"/><path d="M9 12 L12 12 L10.5 14 Z" fill="#b8b8b8"/></svg>
<svg style="left:535px;top:531px;" width="13" height="13" viewBox="0 0 13 13"><circle cx="6.5" cy="6.5" r="5.8" stroke="#b8b8b8" stroke-width="1.4" fill="none"/><path d="M6.5 0.7 L8 6 M12 5 L7 7.5 M9.5 11.5 L5.5 7.5 M2 10 L5.5 6 M1.5 3.5 L6.5 5.5" stroke="#b8b8b8" stroke-width="1.2"/></svg>
<span style="left:553.00px;top:532.86px;font-size:10.8px;line-height:10.8px;color:#3d8ff0;transform:scaleX(0.8912);transform-origin:0 0;">+0.0</span>
<div style="left:587px;top:531px;width:1px;height:14px;background:#3a3a3a;"></div>
<svg style="left:598px;top:532px;" width="13" height="11" viewBox="0 0 13 11"><path d="M0 2.5 H3.5 L4.5 0.5 H8.5 L9.5 2.5 H13 V11 H0 Z" fill="#b8b8b8"/><circle cx="6.5" cy="6.5" r="2.8" fill="#1f1f1f"/><circle cx="6.5" cy="6.5" r="1.5" fill="#b8b8b8"/></svg>
<svg style="left:616px;top:530px;" width="15" height="14" viewBox="0 0 15 14"><path d="M0.5 8 Q7 2 13.5 8 Q7 14 0.5 8 Z" stroke="#8a8a8a" stroke-width="1.3" fill="none"/><circle cx="7" cy="8" r="2" fill="#8a8a8a"/><circle cx="11" cy="3.5" r="3" stroke="#8a8a8a" stroke-width="1.2" fill="#1f1f1f"/></svg>
<div style="left:640px;top:531px;width:1px;height:14px;background:#3a3a3a;"></div>
<div style="left:648px;top:529px;width:57px;height:18px;background:#121212;border:1px solid #262626;border-radius:4px;box-sizing:border-box;"></div>
<span style="left:655.00px;top:532.86px;font-size:10.8px;line-height:10.8px;color:#d0d0d0;transform:scaleX(0.8423);transform-origin:0 0;">0:00:02:13</span>
<div style="left:713px;top:531px;width:1px;height:14px;background:#3a3a3a;"></div>
<div style="left:797px;top:529px;width:72px;height:18px;background:#121212;border:1px solid #262626;border-radius:4px;box-sizing:border-box;"></div>
<svg style="left:805px;top:531px;" width="14" height="14" viewBox="0 0 14 14"><path d="M1 3 L6 0.7 L11 3 V8 L6 10.5 L1 8 Z M1 3 L6 5.3 L11 3 M6 5.3 V10.5" stroke="#b8b8b8" stroke-width="1.1" fill="none"/><path d="M10 7 L8 11 H10.5 L9 14 L13.5 9.5 H11 L12.5 7 Z" fill="#b8b8b8"/></svg>
<span style="left:824.00px;top:532.86px;font-size:10.8px;line-height:10.8px;color:#d0d0d0;transform:scaleX(0.8455);transform-origin:0 0;">Draft 3D</span>
<div style="left:877px;top:531px;width:1px;height:14px;background:#3a3a3a;"></div>
<svg style="left:887px;top:533px;" width="12" height="9" viewBox="0 0 12 9"><path d="M2.5 0.7 H9.5 L11.3 8.3 H0.7 Z M1.5 4.5 H10.5 M6 0.7 V8.3" stroke="#8a8a8a" stroke-width="1.1" fill="none"/></svg>
<svg style="left:907px;top:531px;" width="13" height="14" viewBox="0 0 13 14"><rect x="0.6" y="0.6" width="11.8" height="9" stroke="#8a8a8a" stroke-width="1.1" fill="none"/><path d="M2.5 3 H10.5 M2.5 7 H10.5" stroke="#8a8a8a" stroke-dasharray="1 1"/><path d="M5 11.5 L8 11.5 L6.5 13.5 Z" fill="#8a8a8a"/></svg>
<div style="left:931px;top:531px;width:1px;height:14px;background:#3a3a3a;"></div>
<div style="left:937px;top:529px;width:75px;height:18px;background:#121212;border:1px solid #262626;border-radius:4px;box-sizing:border-box;"></div>
<span style="left:945.00px;top:532.66px;font-size:10.8px;line-height:10.8px;color:#c8c8c8;transform:scaleX(0.7944);transform-origin:0 0;">Classic 3D</span>
<svg style="left:997px;top:536px;" width="8" height="5" viewBox="0 0 8 5"><path d="M0.8 0.8 L4.0 4.2 L7.2 0.8" stroke="#d0d0d0" stroke-width="1.6" fill="none"/></svg>
<div style="left:1019px;top:531px;width:1px;height:14px;background:#3a3a3a;"></div>
<div style="left:1027px;top:529px;width:89px;height:18px;background:#121212;border:1px solid #262626;border-radius:4px;box-sizing:border-box;"></div>
<span style="left:1035.00px;top:532.66px;font-size:10.8px;line-height:10.8px;color:#c8c8c8;transform:scaleX(0.7975);transform-origin:0 0;">Active Came...</span>
<svg style="left:1102px;top:536px;" width="8" height="5" viewBox="0 0 8 5"><path d="M0.8 0.8 L4.0 4.2 L7.2 0.8" stroke="#d0d0d0" stroke-width="1.6" fill="none"/></svg>
<div style="left:1123px;top:531px;width:1px;height:14px;background:#3a3a3a;"></div>
<div style="left:1131px;top:529px;width:59px;height:18px;background:#121212;border:1px solid #262626;border-radius:4px;box-sizing:border-box;"></div>
<span style="left:1139.00px;top:532.66px;font-size:10.8px;line-height:10.8px;color:#c8c8c8;transform:scaleX(0.8690);transform-origin:0 0;">1 View</span>
<svg style="left:1177px;top:536px;" width="8" height="5" viewBox="0 0 8 5"><path d="M0.8 0.8 L4.0 4.2 L7.2 0.8" stroke="#d0d0d0" stroke-width="1.6" fill="none"/></svg>
<div style="left:219px;top:34px;width:979px;height:514px;background:none;border:1.5px solid #2d6ab8;box-sizing:border-box;border-radius:2px;"></div>
<svg style="left:220px;top:87px;overflow:hidden;" width="976" height="440" viewBox="0 0 976 440"><g transform="translate(-220 -87)"><defs><clipPath id="img"><rect x="324" y="92" width="766" height="430"/></clipPath><clipPath id="nemes"><path d="M325 298 Q 345 278 372 274 Q 420 258 462 262 Q 522 272 548 322 Q 560 362 564 412 Q 566 452 548 472 L542 522 H325 Z"/></clipPath></defs><g clip-path="url(#img)"><rect x="324" y="92" width="766" height="430" fill="#e6fbfd"/><path d="M324 150 L453 138 Q 540 150 620 167 Q 700 170 770 159 Q 840 140 890 133 Q 940 131 1000 139 Q 1050 146 1090 157 V400 H324 Z" fill="#c9eef3"/><path d="M324 338 L540 340 Q 650 334 760 330 L920 333 Q 1000 332 1050 336 L1090 339 V522 H324 Z" fill="#efd08a" stroke="#6b5a40" stroke-width="0.8"/><path d="M324 352 L540 358 Q 650 362 760 368 Q 860 366 920 365 L1090 368 V522 H324 Z" fill="#d8b264"/><path d="M324 356 L540 361 Q 650 366 760 372 Q 860 376 920 380 L1090 390 V522 H324 Z" fill="#e3b66b" stroke="#5a4a35" stroke-width="1"/><path d="M680 522 Q 880 516 960 505 Q 1030 492 1090 492 V522 Z" fill="#c99a55"/><ellipse cx="616" cy="489" rx="78" ry="17" fill="#cf9b52"/><ellipse cx="766" cy="488" rx="64" ry="18" fill="#cf9b52"/><rect x="324" y="512" width="380" height="10" fill="#d9a85c"/><path d="M324 92 H452 L447 102 L452 112 L445 122 L452 132 Q 390 138 324 150 Z" fill="#f3e6bc" stroke="#5a5040" stroke-width="0.8"/><path d="M332 149 Q 390 132 450 131 Q 400 144 330 151 Z" fill="#d9b88a" stroke="#5a5040" stroke-width="0.6"/><path d="M325 440 L325 430 Q 330 400 336 386 Q 350 330 366 286 Q 400 272 432 263 L452 260 Q 480 266 500 274 Q 518 282 526 298 Q 535 322 541 347 Q 552 385 558 415 Q 560 432 554 440 Q 545 452 537 458 L537 522 H325 Z" fill="#f5c21a" stroke="#2a2a2a" stroke-width="1"/><clipPath id="nem2"><path d="M325 440 L325 430 Q 330 400 336 386 Q 350 330 366 286 Q 400 272 432 263 L452 260 Q 480 266 500 274 Q 518 282 526 298 Q 535 322 541 347 Q 552 385 558 415 Q 560 432 554 440 Q 545 452 537 458 L537 522 H325 Z"/></clipPath><g clip-path="url(#nem2)"><path d="M364 300 Q 350 380 360 440 Q 368 490 375 522 H395 Q 385 470 386 420 Q 384 360 390 300 Z" fill="#d69e12"/><path d="M366 286 L395 276 Q 380 310 385 345 L 360 345 Z" fill="#d69e12"/><path d="M520 300 Q 540 360 545 440 L537 522 H520 Q 530 440 515 340 Z" fill="#e0aa14" opacity="0.6"/><path d="M318 332.0 Q 350 338.0 400 348.0" stroke="#3b4a8e" stroke-width="2.6" fill="none"/><path d="M484 348.0 Q 530 340.0 566 336.0" stroke="#3b4a8e" stroke-width="2.6" fill="none"/><path d="M318 343.2 Q 350 349.2 400 359.2" stroke="#3b4a8e" stroke-width="2.6" fill="none"/><path d="M484 359.2 Q 530 351.2 566 347.2" stroke="#3b4a8e" stroke-width="2.6" fill="none"/><path d="M318 354.4 Q 350 360.4 400 370.4" stroke="#3b4a8e" stroke-width="2.6" fill="none"/><path d="M484 370.4 Q 530 362.4 566 358.4" stroke="#3b4a8e" stroke-width="2.6" fill="none"/><path d="M318 365.6 Q 350 371.6 400 381.6" stroke="#3b4a8e" stroke-width="2.6" fill="none"/><path d="M484 381.6 Q 530 373.6 566 369.6" stroke="#3b4a8e" stroke-width="2.6" fill="none"/><path d="M318 376.8 Q 350 382.8 400 392.8" stroke="#3b4a8e" stroke-width="2.6" fill="none"/><path d="M484 392.8 Q 530 384.8 566 380.8" stroke="#3b4a8e" stroke-width="2.6" fill="none"/><path d="M318 388.0 Q 350 394.0 400 404.0" stroke="#3b4a8e" stroke-width="2.6" fill="none"/><path d="M484 404.0 Q 530 396.0 566 392.0" stroke="#3b4a8e" stroke-width="2.6" fill="none"/><path d="M318 399.2 Q 350 405.2 400 415.2" stroke="#3b4a8e" stroke-width="2.6" fill="none"/><path d="M484 415.2 Q 530 407.2 566 403.2" stroke="#3b4a8e" stroke-width="2.6" fill="none"/><path d="M318 410.4 Q 350 416.4 400 426.4" stroke="#3b4a8e" stroke-width="2.6" fill="none"/><path d="M484 426.4 Q 530 418.4 566 414.4" stroke="#3b4a8e" stroke-width="2.6" fill="none"/><path d="M318 421.6 Q 350 427.6 400 437.6" stroke="#3b4a8e" stroke-width="2.6" fill="none"/><path d="M484 437.6 Q 530 429.6 566 425.6" stroke="#3b4a8e" stroke-width="2.6" fill="none"/><path d="M318 432.8 Q 350 438.8 400 448.8" stroke="#3b4a8e" stroke-width="2.6" fill="none"/><path d="M484 448.8 Q 530 440.8 566 436.8" stroke="#3b4a8e" stroke-width="2.6" fill="none"/><path d="M318 444.0 Q 350 450.0 400 460.0" stroke="#3b4a8e" stroke-width="2.6" fill="none"/><path d="M484 460.0 Q 530 452.0 566 448.0" stroke="#3b4a8e" stroke-width="2.6" fill="none"/><path d="M318 455.2 Q 350 461.2 400 471.2" stroke="#3b4a8e" stroke-width="2.6" fill="none"/><path d="M484 471.2 Q 530 463.2 566 459.2" stroke="#3b4a8e" stroke-width="2.6" fill="none"/><path d="M318 466.4 Q 350 472.4 400 482.4" stroke="#3b4a8e" stroke-width="2.6" fill="none"/><path d="M484 482.4 Q 530 474.4 566 470.4" stroke="#3b4a8e" stroke-width="2.6" fill="none"/><path d="M318 477.6 Q 350 483.6 400 493.6" stroke="#3b4a8e" stroke-width="2.6" fill="none"/><path d="M484 493.6 Q 530 485.6 566 481.6" stroke="#3b4a8e" stroke-width="2.6" fill="none"/><path d="M318 488.8 Q 350 494.8 400 504.8" stroke="#3b4a8e" stroke-width="2.6" fill="none"/><path d="M484 504.8 Q 530 496.8 566 492.8" stroke="#3b4a8e" stroke-width="2.6" fill="none"/><path d="M318 500.0 Q 350 506.0 400 516.0" stroke="#3b4a8e" stroke-width="2.6" fill="none"/><path d="M484 516.0 Q 530 508.0 566 504.0" stroke="#3b4a8e" stroke-width="2.6" fill="none"/><path d="M318 511.2 Q 350 517.2 400 527.2" stroke="#3b4a8e" stroke-width="2.6" fill="none"/><path d="M484 527.2 Q 530 519.2 566 515.2" stroke="#3b4a8e" stroke-width="2.6" fill="none"/><path d="M318 522.4 Q 350 528.4 400 538.4" stroke="#3b4a8e" stroke-width="2.6" fill="none"/><path d="M484 538.4 Q 530 530.4 566 526.4" stroke="#3b4a8e" stroke-width="2.6" fill="none"/><path d="M318 533.6 Q 350 539.6 400 549.6" stroke="#3b4a8e" stroke-width="2.6" fill="none"/><path d="M484 549.6 Q 530 541.6 566 537.6" stroke="#3b4a8e" stroke-width="2.6" fill="none"/><path d="M318 544.8 Q 350 550.8 400 560.8" stroke="#3b4a8e" stroke-width="2.6" fill="none"/><path d="M484 560.8 Q 530 552.8 566 548.8" stroke="#3b4a8e" stroke-width="2.6" fill="none"/><clipPath id="nemtop"><rect x="300" y="240" width="300" height="100"/></clipPath><g clip-path="url(#nemtop)"><path d="M389.3 417.5 L232.8 384.3" stroke="#3b4a8e" stroke-width="3"/><path d="M393.2 405.6 L247.0 340.5" stroke="#3b4a8e" stroke-width="3"/><path d="M399.5 394.7 L270.0 300.7" stroke="#3b4a8e" stroke-width="3"/><path d="M407.9 385.4 L300.8 266.5" stroke="#3b4a8e" stroke-width="3"/><path d="M418.0 378.0 L338.0 239.5" stroke="#3b4a8e" stroke-width="3"/><path d="M429.5 372.9 L380.0 220.8" stroke="#3b4a8e" stroke-width="3"/><path d="M464.5 372.3 L508.6 218.5" stroke="#3b4a8e" stroke-width="3"/><path d="M476.2 377.0 L551.3 235.8" stroke="#3b4a8e" stroke-width="3"/><path d="M486.6 384.0 L589.4 261.5" stroke="#3b4a8e" stroke-width="3"/><path d="M495.3 393.1 L621.4 294.6" stroke="#3b4a8e" stroke-width="3"/><path d="M501.9 403.7 L645.7 333.6" stroke="#3b4a8e" stroke-width="3"/><path d="M506.2 415.5 L661.5 376.8" stroke="#3b4a8e" stroke-width="3"/></g></g><path d="M380 325 Q 440 300 505 325 L505 345 Q 440 320 380 345 Z" fill="#f5c21a"/><path d="M440 325 Q 436 300 444 282 Q 448 272 450 266 Q 446 256 456 255 Q 466 256 464 266 Q 472 280 470 300 L468 325 Z" fill="#f6c417" stroke="#2a2a2a" stroke-width="1"/><path d="M444 284 Q 440 300 444 322 L452 322 Q 448 300 452 280 Z" fill="#d8a010"/><path d="M414 282 Q 426 276 436 280 L440 310 Q 422 312 414 296 Z" fill="#e0a818" stroke="#2a2a2a" stroke-width="0.8"/><path d="M466 296 Q 478 290 488 298 L486 314 L466 314 Z" fill="#e0a818" stroke="#2a2a2a" stroke-width="0.8"/><path d="M399 412 L470 412 L470 503 L396 503 Z" fill="#d9a10f" stroke="#2a2a2a" stroke-width="0.8"/><path d="M325 435 Q 336 440 341 460 L341 522 H325 Z" fill="#5b8ccc" stroke="#2a2a2a" stroke-width="0.8"/><path d="M325 450 Q 332 470 333 522 H325 Z" fill="#3d3a48"/><path d="M524 462 Q 534 458 542 466 L537 517 Q 530 522 520 522 Z" fill="#7bb2e4" stroke="#2a2a2a" stroke-width="0.8"/><path d="M524 462 Q 528 490 522 522 H516 Z" fill="#3a5a90"/><path d="M396 483 H470 V522 H396 Z" fill="#5b8ccc" stroke="#2a2a2a" stroke-width="0.8"/><path d="M396 503 H470 V522 H396 Z" fill="#4d3b3b"/><path d="M413 434 Q 432 440 449 434 L455 522 H412 Z" fill="#a79db4" stroke="#2a2a2a" stroke-width="0.8"/><path d="M413 434 L420 522 H412 Z" fill="#8a8098"/><path d="M413 445 L452 470 M412 470 L453 495 M412 495 L454 518 M452 445 L412 470 M453 470 L412 495 M454 495 L413 518" stroke="#333" stroke-width="0.8"/><path d="M386 342 Q 384 395 412 425 Q 436 444 466 425 Q 496 395 497 344 Q 486 322 442 321 Q 396 322 386 342 Z" fill="#fcc915" stroke="#2a2a2a" stroke-width="1"/><path d="M386 348 Q 372 344 372 362 Q 375 382 390 384 Z" fill="#fcc915" stroke="#2a2a2a" stroke-width="0.8"/><path d="M497 348 Q 506 346 503 366 Q 500 392 488 396 Z" fill="#fcc915" stroke="#2a2a2a" stroke-width="0.8"/><path d="M396 338 Q 414 327 432 336" stroke="#111" stroke-width="3.5" fill="none"/><path d="M452 336 Q 470 326 488 340" stroke="#111" stroke-width="3.5" fill="none"/><path d="M392 356 Q 410 347 430 354 Q 414 364 398 360 Z" fill="#111"/><ellipse cx="408" cy="355" rx="5" ry="3" fill="#fff"/><path d="M454 358 Q 472 348 490 358 Q 474 366 456 362 Z" fill="#111"/><ellipse cx="468" cy="358" rx="5" ry="3" fill="#fff"/><path d="M426 390 q4 -3 7 0 M444 391 q4 -3 7 0" stroke="#222" stroke-width="0.9" fill="none"/><path d="M416 405 Q 432 395 440 400 Q 448 396 458 405 Q 446 420 436 418 Q 420 414 416 405 Z M416 405 Q 440 410 458 406" stroke="#222" stroke-width="0.9" fill="none"/><ellipse cx="381" cy="382" rx="2.5" ry="4" fill="#333"/><ellipse cx="494" cy="395" rx="2.5" ry="4" fill="#333"/><path d="M600 424 L582 482 L593 485 L614 426 Z" fill="#f6cda0" stroke="#2a2a2a" stroke-width="0.8"/><path d="M642 424 L662 483 L673 480 L656 424 Z" fill="#f6cda0" stroke="#2a2a2a" stroke-width="0.8"/><path d="M601 426 L592 454 L606 456 L613 428 Z M643 426 L652 454 L665 452 L656 426 Z" fill="#cf9a78"/><path d="M570 492 Q 574 480 590 479 Q 600 484 597 493 Q 583 499 570 492 Z" fill="#f6cda0" stroke="#6a4030" stroke-width="1.8"/><path d="M580 482 L592 490 M652 483 L666 488" stroke="#8a5a40" stroke-width="2"/><path d="M654 481 Q 670 477 682 489 Q 678 498 664 495 Q 652 489 654 481 Z" fill="#f6cda0" stroke="#6a4030" stroke-width="1.8"/><path d="M586 330 Q 572 350 557 370 L562 375 Q 578 356 593 338 Z" fill="#d9a27a" stroke="#2a2a2a" stroke-width="0.8"/><path d="M668 330 Q 682 350 694 373 L700 371 Q 690 347 675 327 Z" fill="#f6cda0" stroke="#2a2a2a" stroke-width="0.8"/><path d="M552 372 L556 382 L560 380 L562 384 L566 374 Z" fill="#f6cda0" stroke="#2a2a2a" stroke-width="0.6"/><path d="M692 372 L694 386 L698 382 L702 386 L701 372 Z" fill="#f6cda0" stroke="#2a2a2a" stroke-width="0.6"/><path d="M590 306 Q 578 316 580 342 L594 342 L592 362 L586 420 Q 600 430 616 426 Q 630 432 646 426 Q 660 430 668 424 L662 362 L660 342 L675 339 Q 672 312 662 304 Z" fill="#f3f1e9" stroke="#2a2a2a" stroke-width="0.9"/><path d="M590 306 Q 578 316 580 342 L594 342 L592 362 L586 420 Q 600 430 616 426 Q 612 400 606 372 L604 306 Z" fill="#cfc8c8"/><path d="M646 380 L650 420" stroke="#2a2a2a" stroke-width="0.7"/><path d="M591 349 Q 628 353 660 349 L661 371 Q 628 375 590 372 Z" fill="#1e89ab" stroke="#2a2a2a" stroke-width="0.8"/><path d="M591 349 L608 350 L608 372 L590 372 Z" fill="#15608a"/><path d="M613 367 L640 367 L638 402 L626 412 L614 402 Z" fill="#0f8cae" stroke="#2a2a2a" stroke-width="0.8"/><path d="M614 400 L626 412 L638 400" stroke="#4ab04a" stroke-width="2.2" fill="none"/><path d="M589 298 Q 628 290 666 298 Q 658 318 628 318 Q 598 318 589 298 Z" fill="#5a9e2c" stroke="#2a2a2a" stroke-width="0.8"/><path d="M597 300 L606 314 M612 297 L616 316 M630 296 L630 318 M646 297 L642 316 M660 300 L652 314 M590 299 L662 299" stroke="#f2e030" stroke-width="1.8"/><path d="M614 284 L616 300 L640 300 L642 284 Z" fill="#f6cda0" stroke="#2a2a2a" stroke-width="0.6"/><ellipse cx="633" cy="256" rx="36" ry="33" fill="#f6cda0" stroke="#2a2a2a" stroke-width="0.9"/><path d="M598 262 Q 600 282 630 288 Q 606 280 604 262 Z" fill="#d9a583"/><ellipse cx="668" cy="262" rx="5" ry="7" fill="#f6cda0" stroke="#2a2a2a" stroke-width="0.8"/><path d="M596 246 Q 592 214 620 206 L626 200 L630 206 Q 656 200 674 216 Q 686 232 680 254 L674 240 L670 258 L662 234 L654 248 L648 228 L638 244 L632 222 L620 240 L614 226 L606 250 L600 236 Z" fill="#c0621a" stroke="#2a2a2a" stroke-width="0.8"/><path d="M598 232 Q 600 216 610 212 L605 246 Z" fill="#a02a1a"/><circle cx="612" cy="252" r="7.5" fill="#fff" stroke="#2a2a2a" stroke-width="0.9"/><circle cx="610.5" cy="249.5" r="1.8" fill="#111"/><circle cx="648" cy="257" r="7.5" fill="#fff" stroke="#2a2a2a" stroke-width="0.9"/><circle cx="646" cy="255" r="1.8" fill="#111"/><path d="M620 276 Q 632 282 642 274 M628 262 Q 624 270 630 270" stroke="#2a2a2a" stroke-width="1" fill="none"/><path d="M762 436 L756 484 L768 486 L776 438 Z" fill="#f6cda0" stroke="#2a2a2a" stroke-width="0.8"/><path d="M790 436 L800 484 L812 482 L806 436 Z" fill="#f6cda0" stroke="#2a2a2a" stroke-width="0.8"/><path d="M762 438 L759 458 L773 460 L776 440 Z M790 438 L794 458 L808 456 L806 438 Z" fill="#cf9a78"/><path d="M745 492 Q 750 480 766 481 Q 774 488 770 496 Q 756 500 745 492 Z" fill="#f6cda0" stroke="#6a4030" stroke-width="1.6"/><path d="M798 482 Q 814 478 826 491 Q 820 499 806 496 Q 796 490 798 482 Z" fill="#f6cda0" stroke="#6a4030" stroke-width="1.6"/><path d="M810 330 Q 826 350 840 326 Q 848 316 858 312 L856 320 Q 846 324 842 336 Q 830 356 808 344 Z" fill="#f6cda0" stroke="#2a2a2a" stroke-width="0.8"/><path d="M752 332 Q 730 340 726 356 L736 362 Q 744 350 758 346 Z" fill="#d9a27a" stroke="#2a2a2a" stroke-width="0.8"/><path d="M724 354 L716 360 L738 366 L740 358 Z" fill="#d9a27a" stroke="#2a2a2a" stroke-width="0.6"/><path d="M757 324 L810 324 Q 814 360 810 400 Q 812 425 806 442 Q 770 440 736 432 Q 748 395 752 352 Z" fill="#f3f1e9" stroke="#2a2a2a" stroke-width="0.9"/><path d="M752 352 Q 748 395 736 432 Q 745 418 762 405 Q 775 385 768 360 Z" fill="#ccc6c6"/><path d="M740 430 Q 770 400 808 398 M760 420 Q 785 410 805 420" stroke="#2a2a2a" stroke-width="0.8" fill="none"/><path d="M752 356 Q 778 360 806 357 L806 372 Q 778 376 752 372 Z" fill="#1e89ab" stroke="#2a2a2a" stroke-width="0.8"/><path d="M760 368 L784 368 L780 402 L770 412 L762 402 Z" fill="#0f8cae" stroke="#2a2a2a" stroke-width="0.8"/><path d="M762 400 L770 412 L780 400" stroke="#4ab04a" stroke-width="2" fill="none"/><path d="M753 312 Q 788 305 822 312 Q 812 332 788 332 Q 762 331 753 312 Z" fill="#3a8ed2" stroke="#e8d020" stroke-width="2"/><path d="M766 315 L772 330 M779 312 L781 332 M794 311 L794 332 M808 312 L803 330" stroke="#e8d020" stroke-width="1.4"/><path d="M782 298 L784 312 L800 312 L802 298 Z" fill="#f6cda0" stroke="#2a2a2a" stroke-width="0.6"/><path d="M760 262 Q 752 230 782 220 Q 816 212 838 232 Q 850 252 846 278 Q 844 300 838 314 Q 828 320 822 312 Q 830 296 824 286 L 772 286 Q 764 292 768 302 Q 754 300 744 292 Q 756 284 758 272 Z" fill="#f3dc1e" stroke="#2a2a2a" stroke-width="0.8"/><ellipse cx="795" cy="275" rx="33" ry="28" fill="#f6cda0" stroke="#2a2a2a" stroke-width="0.9"/><ellipse cx="828" cy="281" rx="5" ry="7" fill="#f6cda0" stroke="#2a2a2a" stroke-width="0.8"/><path d="M760 264 Q 752 230 782 220 Q 816 212 838 232 Q 849 248 846 274 L 839 258 L 836 284 L 827 252 L 818 270 L 812 242 L 803 258 L 798 234 L 789 250 L 780 236 L 772 254 L 768 240 L 763 268 Z" fill="#f5e01e" stroke="#2a2a2a" stroke-width="0.8"/><path d="M810 220 L816 212 L818 220 L826 218 L822 226 Z" fill="#f5e01e" stroke="#2a2a2a" stroke-width="0.6"/><circle cx="777" cy="266" r="7.5" fill="#fff" stroke="#2a2a2a" stroke-width="0.9"/><circle cx="774" cy="267" r="2" fill="#111"/><circle cx="809" cy="275" r="8" fill="#fff" stroke="#2a2a2a" stroke-width="0.9"/><circle cx="806" cy="276" r="2" fill="#111"/><path d="M783 288 Q 792 285 800 289 Q 794 298 786 294 Z" fill="#e26060" stroke="#2a2a2a" stroke-width="0.7"/><path d="M790 272 Q 784 281 790 282" stroke="#2a2a2a" stroke-width="0.7" fill="none"/></g><path d="M442 87 V170 M453 87 V170 M324 168 H453" stroke="#a89880" stroke-width="1" fill="none"/><path d="M220 168.5 H324" stroke="#a89880" stroke-width="1.3" stroke-dasharray="1.5 1" fill="none"/><path d="M218 106 H229.5 V145 H218 M244 115 H286 V132 H244 Z M318 87 V141 H324 M297 112 H324 M297 112 V125 H324" stroke="#a89880" stroke-width="1" fill="none"/><path d="M265 89 L311 165" stroke="#8a7a62" stroke-width="1" fill="none"/><circle cx="274.2" cy="104.2" r="1.2" fill="#a89880"/><circle cx="283.4" cy="119.4" r="1.2" fill="#a89880"/><circle cx="292.6" cy="134.6" r="1.2" fill="#a89880"/><circle cx="301.8" cy="149.8" r="1.2" fill="#a89880"/><path d="M440 170 Q 400 195 357 195 Q 335 190 322 178" stroke="#998870" stroke-width="1.2" fill="none" stroke-dasharray="2 2"/><rect x="354" y="191" width="7" height="7" stroke="#a89880" fill="none"/><rect x="438" y="165" width="7" height="7" stroke="#a89880" fill="none"/><path d="M426 191.4 H990.5 V508 H426 Z" stroke="#a89880" stroke-width="1" fill="none"/><path d="M988 229.6 H1083" stroke="#e0c8a0" stroke-width="1" stroke-dasharray="3 1" fill="none"/><path d="M220 183.3 H324 M1090 183.3 H1196" stroke="#aaa6c6" stroke-width="1.3" fill="none"/><path d="M324 183.3 H1090" stroke="#aaa6c6" stroke-width="1.1" stroke-dasharray="3 1.5" fill="none" opacity="0.75"/><path d="M220 322.8 H324 M1090 322.8 H1196" stroke="#aaa6c6" stroke-width="1.3" fill="none"/><path d="M324 322.8 H1090" stroke="#aaa6c6" stroke-width="1.1" stroke-dasharray="3 1.5" fill="none" opacity="0.75"/><path d="M220 326.3 H324 M1090 326.3 H1196" stroke="#aaa6c6" stroke-width="1.3" fill="none"/><path d="M324 326.3 H1090" stroke="#aaa6c6" stroke-width="1.1" stroke-dasharray="3 1.5" fill="none" opacity="0.75"/><path d="M220 363 H324 M1090 363 H1196" stroke="#aaa6c6" stroke-width="1.3" fill="none"/><path d="M324 363 H1090" stroke="#aaa6c6" stroke-width="1.1" stroke-dasharray="3 1.5" fill="none" opacity="0.75"/><path d="M220 476.6 H324 M1090 476.6 H1196" stroke="#aaa6c6" stroke-width="1.3" fill="none"/><path d="M324 476.6 H1090" stroke="#aaa6c6" stroke-width="1.1" stroke-dasharray="3 1.5" fill="none" opacity="0.75"/><path d="M1090 434.8 H1196" stroke="#aaa6c6" stroke-width="1.3" fill="none"/><path d="M505 434.8 H1090" stroke="#aaa6c6" stroke-width="1.1" stroke-dasharray="3 1.5" fill="none" opacity="0.75"/><path d="M1090 354 H1196" stroke="#aaa6c6" stroke-width="1.3" fill="none"/><path d="M990 354 H1090" stroke="#aaa6c6" stroke-width="1.1" stroke-dasharray="3 1.5" fill="none" opacity="0.75"/><path d="M260.5 221 L598 266.4 M260.5 221 L219 476 M319 226 L272 524 M271 363.5 V524 M311 327 V522 M512 262.4 L469 530 M598 266.4 L559 530 M1193.5 363 V523" stroke="#aaa6c6" stroke-width="1.1" fill="none" opacity="0.9"/><rect x="257.5" y="218.0" width="6" height="6" fill="#a8a4c6"/><rect x="226.5" y="406.4" width="6" height="6" fill="#a8a4c6"/><rect x="291.5" y="394.5" width="6" height="6" fill="#a8a4c6"/><rect x="268.0" y="360.5" width="6" height="6" fill="#a8a4c6"/><rect x="308.0" y="430.6" width="6" height="6" fill="#a8a4c6"/><rect x="268.0" y="519.0" width="6" height="6" fill="#a8a4c6"/><rect x="383.0" y="239.0" width="6" height="6" fill="#a8a4c6"/><rect x="456.0" y="242.0" width="6" height="6" fill="#a8a4c6"/><rect x="509.0" y="259.4" width="6" height="6" fill="#a8a4c6"/><rect x="595.0" y="263.4" width="6" height="6" fill="#a8a4c6"/><rect x="502.0" y="390.5" width="6" height="6" fill="#a8a4c6"/><rect x="502.0" y="431.8" width="6" height="6" fill="#a8a4c6"/><rect x="478.0" y="446.6" width="6" height="6" fill="#a8a4c6"/><rect x="569.5" y="435.4" width="6" height="6" fill="#a8a4c6"/><rect x="744.0" y="181.7" width="6" height="6" fill="#a8a4c6"/><rect x="730.7" y="319.5" width="6" height="6" fill="#a8a4c6"/><rect x="886.5" y="324.0" width="6" height="6" fill="#a8a4c6"/><rect x="867.6" y="351.0" width="6" height="6" fill="#a8a4c6"/><rect x="867.6" y="431.8" width="6" height="6" fill="#a8a4c6"/><rect x="730.7" y="360.0" width="6" height="6" fill="#a8a4c6"/><rect x="1190.5" y="360.0" width="6" height="6" fill="#a8a4c6"/><rect x="1190.5" y="520.0" width="6" height="6" fill="#a8a4c6"/><rect x="450.5" y="112.5" width="7" height="7" fill="#a89478"/><rect x="450.5" y="166.5" width="7" height="7" fill="#a89478"/><rect x="422.5" y="187.9" width="7" height="7" fill="#a89478"/><rect x="704.5" y="187.9" width="7" height="7" fill="#a89478"/><rect x="987.0" y="187.9" width="7" height="7" fill="#a89478"/><rect x="987.0" y="346.0" width="7" height="7" fill="#a89478"/><rect x="987.0" y="504.5" width="7" height="7" fill="#a89478"/><rect x="704.5" y="504.5" width="7" height="7" fill="#a89478"/><rect x="422.5" y="502.3" width="7" height="7" fill="#a89478"/><rect x="1033.3" y="226.1" width="7" height="7" fill="#a89478"/><rect x="279.5" y="165.5" width="7" height="7" fill="#a89478"/><rect x="1054.0" y="356.0" width="6" height="6" fill="#b03030"/><rect x="1094.0" y="356.0" width="6" height="6" fill="#b03030"/><rect x="1054.0" y="376.0" width="6" height="6" fill="#b03030"/><rect x="1074.0" y="376.0" width="6" height="6" fill="#b03030"/><rect x="1094.0" y="376.0" width="6" height="6" fill="#b03030"/><rect x="1094.0" y="334.0" width="6" height="6" fill="#b03030"/><path d="M1057 339 V379 H1097 V337" stroke="#b03030" stroke-width="1" stroke-dasharray="2 1" fill="none"/><path d="M866 282 H934 V350.8 H866 Z" stroke="#e0b8c4" stroke-width="1" fill="none"/><rect x="863.0" y="279.0" width="6" height="6" fill="#e8b8c8"/><rect x="898.0" y="279.0" width="6" height="6" fill="#e8b8c8"/><rect x="931.0" y="279.0" width="6" height="6" fill="#e8b8c8"/><rect x="863.0" y="313.3" width="6" height="6" fill="#e8b8c8"/><rect x="931.0" y="313.3" width="6" height="6" fill="#e8b8c8"/><rect x="863.0" y="347.8" width="6" height="6" fill="#e8b8c8"/><rect x="898.0" y="347.8" width="6" height="6" fill="#e8b8c8"/><rect x="931.0" y="347.8" width="6" height="6" fill="#e8b8c8"/><rect x="705.0" y="325.0" width="6" height="6" fill="#e8b8c8"/><rect x="745.0" y="325.0" width="6" height="6" fill="#e8b8c8"/><rect x="724.0" y="302.0" width="6" height="6" fill="#e8b8c8"/><rect x="742.0" y="302.0" width="6" height="6" fill="#e8b8c8"/><rect x="745.0" y="345.0" width="6" height="6" fill="#e8b8c8"/><rect x="724.0" y="345.0" width="6" height="6" fill="#e8b8c8"/><path d="M708 305 V350 M748 305 V350" stroke="#e8a0b0" stroke-width="1" fill="none"/><path d="M854 297 L901 267 L922 255 L945 268 M720 312 Q 800 300 854 297" stroke="#b8a8b0" stroke-width="1.2" fill="none"/><rect x="850.5" y="293.5" width="7" height="7" stroke="#a89ca8" stroke-width="1.2" fill="none"/><rect x="897.5" y="263.5" width="7" height="7" stroke="#a89ca8" stroke-width="1.2" fill="none"/><rect x="918.5" y="251.5" width="7" height="7" stroke="#a89ca8" stroke-width="1.2" fill="none"/><rect x="941.5" y="264.5" width="7" height="7" stroke="#a89ca8" stroke-width="1.2" fill="none"/><path d="M281.0 121.0 L281.0 42.0" stroke="#22b01e" stroke-width="2.6"/><path d="M281.0 30.0 L286.0 42.0 L276.0 42.0 Z" fill="#c2f58a"/><path d="M264.0 40.0 Q263.5 66.5 261.0 107.0" stroke="#e8302a" stroke-width="2.6" fill="none"/><path d="M267.0 40.0 Q338.5 63.5 344.0 121.0" stroke="#2a2ad8" stroke-width="2.6" fill="none"/><path d="M286.0 121.0 L362.0 121.9" stroke="#e8302a" stroke-width="2.6"/><path d="M374.0 122.0 L361.9 127.4 L362.1 116.4 Z" fill="#f47878"/><path d="M254.0 111.0 Q312.0 115.0 344.0 121.0" stroke="#22b01e" stroke-width="2.6" fill="none"/><path d="M254.0 111.0 L281.0 121.0" stroke="#2a2ad8" stroke-width="2.6"/><rect x="260.5" y="36.5" width="7" height="7" fill="#c2f58a" opacity="0.75"/><rect x="340.5" y="117.5" width="7" height="7" fill="#f47878" opacity="0.8"/><circle cx="281.0" cy="121.0" r="5.6" fill="#c4c4c4"/><circle cx="263.0" cy="70.0" r="5.6" fill="#f47878"/><circle cx="322.0" cy="72.0" r="5.6" fill="#7878f0"/><circle cx="312.0" cy="115.0" r="5.6" fill="#c2f58a"/><circle cx="254.0" cy="111.0" r="5.2" fill="#7878f0"/><path d="M319.0 225.0 L331.2 144.9" stroke="#22b01e" stroke-width="2.6"/><path d="M333.0 133.0 L336.1 145.6 L326.3 144.1 Z" fill="#c2f58a"/><path d="M328.0 164.0 Q313.0 165.0 302.0 218.0" stroke="#e8302a" stroke-width="2.6" fill="none"/><path d="M331.0 164.0 Q382.0 178.0 381.0 232.0" stroke="#2a2ad8" stroke-width="2.6" fill="none"/><path d="M326.0 227.0 L398.1 236.4" stroke="#e8302a" stroke-width="2.6"/><path d="M410.0 238.0 L397.4 241.9 L398.8 231.0 Z" fill="#f47878"/><path d="M296.0 220.0 Q352.0 229.0 381.0 232.0" stroke="#22b01e" stroke-width="2.6" fill="none"/><path d="M296.0 220.0 L319.0 225.0" stroke="#2a2ad8" stroke-width="2.6"/><rect x="324.5" y="160.5" width="7" height="7" fill="#c2f58a" opacity="0.75"/><rect x="377.5" y="228.5" width="7" height="7" fill="#f47878" opacity="0.8"/><circle cx="319.0" cy="225.0" r="5.6" fill="#c4c4c4"/><circle cx="314.0" cy="178.0" r="5.6" fill="#f47878"/><circle cx="369.0" cy="188.0" r="5.6" fill="#7878f0"/><circle cx="352.0" cy="229.0" r="5.6" fill="#c2f58a"/><circle cx="296.0" cy="220.0" r="5.2" fill="#7878f0"/><path d="M311.0 327.0 L311.0 245.0" stroke="#22b01e" stroke-width="2.6"/><path d="M311.0 233.0 L316.0 245.0 L306.0 245.0 Z" fill="#c2f58a"/><path d="M312.0 265.0 Q294.5 271.5 293.0 322.0" stroke="#e8302a" stroke-width="2.6" fill="none"/><path d="M315.0 265.0 Q366.2 271.0 372.5 327.0" stroke="#2a2ad8" stroke-width="2.6" fill="none"/><path d="M316.0 327.0 L393.0 326.1" stroke="#e8302a" stroke-width="2.6"/><path d="M405.0 326.0 L393.1 331.6 L392.9 320.6 Z" fill="#f47878"/><path d="M286.5 328.0 Q343.0 327.0 372.5 327.0" stroke="#22b01e" stroke-width="2.6" fill="none"/><path d="M286.5 328.0 L311.0 327.0" stroke="#2a2ad8" stroke-width="2.6"/><rect x="308.5" y="261.5" width="7" height="7" fill="#c2f58a" opacity="0.75"/><rect x="369.0" y="323.5" width="7" height="7" fill="#f47878" opacity="0.8"/><circle cx="311.0" cy="327.0" r="5.6" fill="#c4c4c4"/><circle cx="298.5" cy="282.5" r="5.6" fill="#f47878"/><circle cx="355.0" cy="283.5" r="5.6" fill="#7878f0"/><circle cx="343.0" cy="327.0" r="5.6" fill="#c2f58a"/><circle cx="286.5" cy="328.0" r="5.2" fill="#7878f0"/><path d="M442.0 358.6 L452.9 278.9" stroke="#22b01e" stroke-width="2.6"/><path d="M454.5 267.0 L457.8 279.6 L447.9 278.2 Z" fill="#c2f58a"/><path d="M452.0 298.0 Q439.0 306.0 430.0 358.0" stroke="#e8302a" stroke-width="2.6" fill="none"/><path d="M455.0 298.0 Q502.7 312.5 503.6 369.0" stroke="#2a2ad8" stroke-width="2.6" fill="none"/><path d="M447.0 360.0 L522.1 371.2" stroke="#e8302a" stroke-width="2.6"/><path d="M534.0 373.0 L521.3 376.7 L522.9 365.8 Z" fill="#f47878"/><path d="M426.0 362.6 Q477.4 368.0 503.6 369.0" stroke="#22b01e" stroke-width="2.6" fill="none"/><path d="M426.0 362.6 L442.0 358.6" stroke="#2a2ad8" stroke-width="2.6"/><rect x="448.5" y="294.5" width="7" height="7" fill="#c2f58a" opacity="0.75"/><rect x="500.1" y="365.5" width="7" height="7" fill="#f47878" opacity="0.8"/><circle cx="442.0" cy="358.6" r="5.6" fill="#c4c4c4"/><circle cx="440.0" cy="317.0" r="5.6" fill="#f47878"/><circle cx="491.0" cy="323.0" r="5.6" fill="#7878f0"/><circle cx="477.4" cy="368.0" r="5.6" fill="#c2f58a"/><circle cx="426.0" cy="362.6" r="5.2" fill="#7878f0"/><path d="M746.0 109.5 L746.0 32.0" stroke="#22b01e" stroke-width="2.6"/><path d="M746.0 20.0 L751.0 32.0 L741.0 32.0 Z" fill="#c2f58a"/><path d="M746.0 48.0 Q747.0 50.0 748.0 100.0" stroke="#e8302a" stroke-width="2.6" fill="none"/><path d="M749.0 48.0 Q801.5 51.5 808.0 109.0" stroke="#2a2ad8" stroke-width="2.6" fill="none"/><path d="M751.0 109.5 L828.0 109.5" stroke="#e8302a" stroke-width="2.6"/><path d="M840.0 109.5 L828.0 115.0 L828.0 104.0 Z" fill="#f47878"/><path d="M749.0 97.0 Q792.5 103.0 808.0 109.0" stroke="#22b01e" stroke-width="2.6" fill="none"/><path d="M749.0 97.0 L746.0 109.5" stroke="#2a2ad8" stroke-width="2.6"/><rect x="742.5" y="44.5" width="7" height="7" fill="#c2f58a" opacity="0.75"/><rect x="804.5" y="105.5" width="7" height="7" fill="#f47878" opacity="0.8"/><circle cx="746.0" cy="109.5" r="5.6" fill="#c4c4c4"/><circle cx="747.0" cy="62.0" r="5.6" fill="#f47878"/><circle cx="790.0" cy="65.0" r="5.6" fill="#7878f0"/><circle cx="792.5" cy="103.0" r="5.6" fill="#c2f58a"/><circle cx="749.0" cy="97.0" r="5.2" fill="#7878f0"/><path d="M760.0 201.0 L759.6 123.0" stroke="#22b01e" stroke-width="2.6"/><path d="M759.5 111.0 L764.6 123.0 L754.6 123.0 Z" fill="#c2f58a"/><path d="M759.5 139.0 Q761.2 140.5 762.0 192.0" stroke="#e8302a" stroke-width="2.6" fill="none"/><path d="M762.5 139.0 Q814.2 146.5 821.0 200.0" stroke="#2a2ad8" stroke-width="2.6" fill="none"/><path d="M765.0 201.0 L841.0 201.0" stroke="#e8302a" stroke-width="2.6"/><path d="M853.0 201.0 L841.0 206.5 L841.0 195.5 Z" fill="#f47878"/><path d="M762.0 195.0 Q806.0 198.0 821.0 200.0" stroke="#22b01e" stroke-width="2.6" fill="none"/><path d="M762.0 195.0 L760.0 201.0" stroke="#2a2ad8" stroke-width="2.6"/><rect x="756.0" y="135.5" width="7" height="7" fill="#c2f58a" opacity="0.75"/><rect x="817.5" y="196.5" width="7" height="7" fill="#f47878" opacity="0.8"/><circle cx="760.0" cy="201.0" r="5.6" fill="#c4c4c4"/><circle cx="761.0" cy="153.0" r="5.6" fill="#f47878"/><circle cx="803.0" cy="158.0" r="5.6" fill="#7878f0"/><circle cx="806.0" cy="198.0" r="5.6" fill="#c2f58a"/><circle cx="762.0" cy="195.0" r="5.2" fill="#7878f0"/><path d="M708.0 350.0 L708.0 274.0" stroke="#22b01e" stroke-width="2.6"/><path d="M708.0 262.0 L713.0 274.0 L703.0 274.0 Z" fill="#c2f58a"/><path d="M708.0 288.0 Q708.0 209.5 708.0 345.0" stroke="#e8302a" stroke-width="2.6" fill="none"/><path d="M711.0 288.0 Q769.5 287.0 770.0 350.0" stroke="#2a2ad8" stroke-width="2.6" fill="none"/><path d="M713.0 350.0 L788.0 350.0" stroke="#e8302a" stroke-width="2.6"/><path d="M800.0 350.0 L788.0 355.5 L788.0 344.5 Z" fill="#f47878"/><path d="M708.0 350.0 Q752.5 350.0 770.0 350.0" stroke="#22b01e" stroke-width="2.6" fill="none"/><path d="M708.0 350.0 L708.0 350.0" stroke="#2a2ad8" stroke-width="2.6"/><rect x="704.5" y="284.5" width="7" height="7" fill="#c2f58a" opacity="0.75"/><rect x="766.5" y="346.5" width="7" height="7" fill="#f47878" opacity="0.8"/><circle cx="708.0" cy="350.0" r="5.6" fill="#c4c4c4"/><circle cx="708.0" cy="263.0" r="5.6" fill="#f47878"/><circle cx="755.0" cy="303.0" r="5.6" fill="#7878f0"/><circle cx="752.5" cy="350.0" r="5.6" fill="#c2f58a"/><circle cx="708.0" cy="350.0" r="5.2" fill="#7878f0"/><path d="M708.0 307.0 L708.0 227.0" stroke="#22b01e" stroke-width="2.6"/><path d="M708.0 215.0 L713.0 227.0 L703.0 227.0 Z" fill="#c2f58a"/><path d="M708.0 246.0 Q708.0 253.0 708.0 300.0" stroke="#e8302a" stroke-width="2.6" fill="none"/><path d="M711.0 246.0 Q762.8 251.5 769.5 307.0" stroke="#2a2ad8" stroke-width="2.6" fill="none"/><path d="M713.0 307.0 L788.0 307.0" stroke="#e8302a" stroke-width="2.6"/><path d="M800.0 307.0 L788.0 312.5 L788.0 301.5 Z" fill="#f47878"/><path d="M708.0 307.0 Q752.5 307.5 769.5 307.0" stroke="#22b01e" stroke-width="2.6" fill="none"/><path d="M708.0 307.0 L708.0 307.0" stroke="#2a2ad8" stroke-width="2.6"/><rect x="704.5" y="242.5" width="7" height="7" fill="#c2f58a" opacity="0.75"/><rect x="766.0" y="303.5" width="7" height="7" fill="#f47878" opacity="0.8"/><circle cx="708.0" cy="307.0" r="5.6" fill="#c4c4c4"/><circle cx="708.0" cy="263.0" r="5.6" fill="#f47878"/><circle cx="751.5" cy="264.0" r="5.6" fill="#7878f0"/><circle cx="752.5" cy="307.5" r="5.6" fill="#c2f58a"/><circle cx="708.0" cy="307.0" r="5.2" fill="#7878f0"/><path d="M988.0 296.0 L988.0 217.0" stroke="#22b01e" stroke-width="2.6"/><path d="M988.0 205.0 L993.0 217.0 L983.0 217.0 Z" fill="#c2f58a"/><path d="M988.0 234.0 Q1004.5 241.0 993.0 290.0" stroke="#e8302a" stroke-width="2.6" fill="none"/><path d="M991.0 234.0 Q1043.5 241.0 1050.0 296.0" stroke="#2a2ad8" stroke-width="2.6" fill="none"/><path d="M993.0 296.0 L1070.0 296.0" stroke="#e8302a" stroke-width="2.6"/><path d="M1082.0 296.0 L1070.0 301.5 L1070.0 290.5 Z" fill="#f47878"/><path d="M1005.5 296.0 Q1042.5 296.0 1050.0 296.0" stroke="#22b01e" stroke-width="2.6" fill="none"/><path d="M1005.5 296.0 L988.0 296.0" stroke="#2a2ad8" stroke-width="2.6"/><rect x="984.5" y="230.5" width="7" height="7" fill="#c2f58a" opacity="0.75"/><rect x="1046.5" y="292.5" width="7" height="7" fill="#f47878" opacity="0.8"/><circle cx="988.0" cy="296.0" r="5.6" fill="#c4c4c4"/><circle cx="997.5" cy="251.5" r="5.6" fill="#f47878"/><circle cx="1032.0" cy="253.0" r="5.6" fill="#7878f0"/><circle cx="1042.5" cy="296.0" r="5.6" fill="#c2f58a"/><circle cx="1005.5" cy="296.0" r="5.2" fill="#7878f0"/><path d="M1083.0 230.5 L1083.0 149.0" stroke="#22b01e" stroke-width="2.6"/><path d="M1083.0 137.0 L1088.0 149.0 L1078.0 149.0 Z" fill="#c2f58a"/><path d="M1083.0 167.5 Q1098.5 167.6 1100.0 228.0" stroke="#e8302a" stroke-width="2.6" fill="none"/><path d="M1086.0 167.5 Q1137.5 175.9 1143.0 230.0" stroke="#2a2ad8" stroke-width="2.6" fill="none"/><path d="M1088.0 230.5 L1164.0 230.5" stroke="#e8302a" stroke-width="2.6"/><path d="M1176.0 230.5 L1164.0 236.0 L1164.0 225.0 Z" fill="#f47878"/><path d="M1105.0 226.3 Q1140.5 228.2 1143.0 230.0" stroke="#22b01e" stroke-width="2.6" fill="none"/><path d="M1105.0 226.3 L1083.0 230.5" stroke="#2a2ad8" stroke-width="2.6"/><rect x="1079.5" y="164.0" width="7" height="7" fill="#c2f58a" opacity="0.75"/><rect x="1139.5" y="226.5" width="7" height="7" fill="#f47878" opacity="0.8"/><circle cx="1083.0" cy="230.5" r="5.6" fill="#c4c4c4"/><circle cx="1095.0" cy="182.7" r="5.6" fill="#f47878"/><circle cx="1126.0" cy="187.3" r="5.6" fill="#7878f0"/><circle cx="1140.5" cy="228.2" r="5.6" fill="#c2f58a"/><circle cx="1105.0" cy="226.3" r="5.2" fill="#7878f0"/><path d="M1083.0 254.0 L1083.0 174.0" stroke="#22b01e" stroke-width="2.6"/><path d="M1083.0 162.0 L1088.0 174.0 L1078.0 174.0 Z" fill="#c2f58a"/><path d="M1083.0 193.0 Q1100.0 194.1 1101.0 252.0" stroke="#e8302a" stroke-width="2.6" fill="none"/><path d="M1086.0 193.0 Q1135.5 200.1 1147.0 254.0" stroke="#2a2ad8" stroke-width="2.6" fill="none"/><path d="M1088.0 254.0 L1165.0 254.9" stroke="#e8302a" stroke-width="2.6"/><path d="M1177.0 255.0 L1164.9 260.4 L1165.1 249.4 Z" fill="#f47878"/><path d="M1106.0 251.5 Q1140.0 253.0 1147.0 254.0" stroke="#22b01e" stroke-width="2.6" fill="none"/><path d="M1106.0 251.5 L1083.0 254.0" stroke="#2a2ad8" stroke-width="2.6"/><rect x="1079.5" y="189.5" width="7" height="7" fill="#c2f58a" opacity="0.75"/><rect x="1143.5" y="250.5" width="7" height="7" fill="#f47878" opacity="0.8"/><circle cx="1083.0" cy="254.0" r="5.6" fill="#c4c4c4"/><circle cx="1096.0" cy="208.3" r="5.6" fill="#f47878"/><circle cx="1126.0" cy="211.8" r="5.6" fill="#7878f0"/><circle cx="1140.0" cy="253.0" r="5.6" fill="#c2f58a"/><circle cx="1106.0" cy="251.5" r="5.2" fill="#7878f0"/><path d="M1057.7 339.0 L1057.1 257.8" stroke="#22b01e" stroke-width="2.6"/><path d="M1057.0 245.8 L1062.1 257.8 L1052.1 257.8 Z" fill="#c2f58a"/><path d="M1057.0 277.3 Q1071.0 282.0 1073.0 338.0" stroke="#e8302a" stroke-width="2.6" fill="none"/><path d="M1060.0 277.3 Q1111.8 282.9 1118.0 339.0" stroke="#2a2ad8" stroke-width="2.6" fill="none"/><path d="M1062.7 339.0 L1138.0 339.0" stroke="#e8302a" stroke-width="2.6"/><path d="M1150.0 339.0 L1138.0 344.5 L1138.0 333.5 Z" fill="#f47878"/><path d="M1078.0 340.0 Q1113.0 339.0 1118.0 339.0" stroke="#22b01e" stroke-width="2.6" fill="none"/><path d="M1078.0 340.0 L1057.7 339.0" stroke="#2a2ad8" stroke-width="2.6"/><rect x="1053.5" y="273.8" width="7" height="7" fill="#c2f58a" opacity="0.75"/><rect x="1114.5" y="335.5" width="7" height="7" fill="#f47878" opacity="0.8"/><circle cx="1057.7" cy="339.0" r="5.6" fill="#c4c4c4"/><circle cx="1068.0" cy="294.8" r="5.6" fill="#f47878"/><circle cx="1100.4" cy="295.5" r="5.6" fill="#7878f0"/><circle cx="1113.0" cy="339.0" r="5.6" fill="#c2f58a"/><circle cx="1078.0" cy="340.0" r="5.2" fill="#7878f0"/><path d="M889.0 433.7 L889.4 354.8" stroke="#22b01e" stroke-width="2.6"/><path d="M889.5 342.8 L894.4 354.8 L884.4 354.8 Z" fill="#c2f58a"/><path d="M889.0 372.0 Q896.5 382.4 898.0 430.0" stroke="#e8302a" stroke-width="2.6" fill="none"/><path d="M892.0 372.0 Q944.1 375.8 951.8 433.7" stroke="#2a2ad8" stroke-width="2.6" fill="none"/><path d="M894.0 433.7 L970.0 433.1" stroke="#e8302a" stroke-width="2.6"/><path d="M982.0 433.0 L970.0 438.6 L970.0 427.6 Z" fill="#f47878"/><path d="M900.5 440.2 Q940.6 436.7 951.8 433.7" stroke="#22b01e" stroke-width="2.6" fill="none"/><path d="M900.5 440.2 L889.0 433.7" stroke="#2a2ad8" stroke-width="2.6"/><rect x="885.5" y="368.5" width="7" height="7" fill="#c2f58a" opacity="0.75"/><rect x="948.3" y="430.2" width="7" height="7" fill="#f47878" opacity="0.8"/><circle cx="889.0" cy="433.7" r="5.6" fill="#c4c4c4"/><circle cx="895.0" cy="391.7" r="5.6" fill="#f47878"/><circle cx="933.0" cy="389.3" r="5.6" fill="#7878f0"/><circle cx="940.6" cy="436.7" r="5.6" fill="#c2f58a"/><circle cx="900.5" cy="440.2" r="5.2" fill="#7878f0"/><path d="M733.0 513.5 L732.6 432.8" stroke="#22b01e" stroke-width="2.6"/><path d="M732.5 420.8 L737.6 432.8 L727.6 432.8 Z" fill="#c2f58a"/><path d="M733.0 452.3 Q733.5 469.2 734.0 510.0" stroke="#e8302a" stroke-width="2.6" fill="none"/><path d="M736.0 452.3 Q787.6 457.0 794.3 513.0" stroke="#2a2ad8" stroke-width="2.6" fill="none"/><path d="M738.0 513.5 L806.8 513.5" stroke="#e8302a" stroke-width="2.6"/><path d="M818.8 513.5 L806.8 519.0 L806.8 508.0 Z" fill="#f47878"/><path d="M733.0 521.0 Q778.0 519.5 794.3 513.0" stroke="#22b01e" stroke-width="2.6" fill="none"/><path d="M733.0 521.0 L733.0 513.5" stroke="#2a2ad8" stroke-width="2.6"/><rect x="729.5" y="448.8" width="7" height="7" fill="#c2f58a" opacity="0.75"/><rect x="790.8" y="509.5" width="7" height="7" fill="#f47878" opacity="0.8"/><circle cx="733.0" cy="513.5" r="5.6" fill="#c4c4c4"/><circle cx="733.5" cy="475.2" r="5.6" fill="#f47878"/><circle cx="776.4" cy="469.8" r="5.6" fill="#7878f0"/><circle cx="778.0" cy="519.5" r="5.6" fill="#c2f58a"/><circle cx="733.0" cy="521.0" r="5.2" fill="#7878f0"/><path d="M418.0 540.0 L419.5 501.7" stroke="#22b01e" stroke-width="2.6"/><path d="M420.0 489.7 L424.5 501.9 L414.5 501.5 Z" fill="#c2f58a"/><path d="M420.0 520.0 Q409.0 540.0 410.0 540.0" stroke="#e8302a" stroke-width="2.6" fill="none"/><path d="M423.0 520.0 Q443.5 530.0 450.0 540.0" stroke="#2a2ad8" stroke-width="2.6" fill="none"/><path d="M423.0 540.0 L458.0 540.0" stroke="#e8302a" stroke-width="2.6"/><path d="M470.0 540.0 L458.0 545.5 L458.0 534.5 Z" fill="#f47878"/><path d="M426.0 524.0 Q440.0 535.0 450.0 540.0" stroke="#22b01e" stroke-width="2.6" fill="none"/><path d="M426.0 524.0 L418.0 540.0" stroke="#2a2ad8" stroke-width="2.6"/><rect x="416.5" y="516.5" width="7" height="7" fill="#c2f58a" opacity="0.75"/><rect x="446.5" y="536.5" width="7" height="7" fill="#f47878" opacity="0.8"/><circle cx="418.0" cy="540.0" r="5.6" fill="#c4c4c4"/><circle cx="412.0" cy="535.0" r="5.6" fill="#f47878"/><circle cx="440.0" cy="530.0" r="5.6" fill="#7878f0"/><circle cx="440.0" cy="535.0" r="5.6" fill="#c2f58a"/><circle cx="426.0" cy="524.0" r="5.2" fill="#7878f0"/></g></svg>
<span style="left:228.00px;top:97.36px;font-size:10.8px;line-height:10.8px;color:#d8d8d8;transform:scaleX(0.8331);transform-origin:0 0;text-shadow:0 0 1px #000,0 0 1px #000;">Active Camera (Camera 1)</span>
<div style="left:219px;top:551px;width:981px;height:273px;background:#1f1f1f;"></div>
<span style="left:221.00px;top:555.36px;font-size:10.8px;line-height:10.8px;color:#c4c4c4;transform:scaleX(0.8348);transform-origin:0 0;">_Time_Animation - 30 secs .com - subs</span>
<div style="left:425px;top:557px;width:9px;height:8px;background:#b5a283;"></div>
<span style="left:443.00px;top:555.36px;font-size:10.8px;line-height:10.8px;color:#c4c4c4;transform:scaleX(0.8451);transform-origin:0 0;">Mysteries_in_Time_Animation - Full .co.uk - subs</span>
<div style="left:689px;top:557px;width:9px;height:8px;background:#b5a283;"></div>
<span style="left:707.00px;top:555.36px;font-size:10.8px;line-height:10.8px;color:#c4c4c4;transform:scaleX(0.8519);transform-origin:0 0;">Mysteries_in_Time_Animation - Full .com - subs</span>
<div style="left:950px;top:557px;width:9px;height:8px;background:#b5a283;"></div>
<span style="left:966.00px;top:555.36px;font-size:10.8px;line-height:10.8px;color:#c4c4c4;transform:scaleX(0.8568);transform-origin:0 0;">Mysteries_in_Time_Animation - Full .co.uk</span>
<div style="left:1186px;top:557px;width:9px;height:8px;background:#b5a283;"></div>
<span style="left:231.00px;top:575.03px;font-size:12.6px;line-height:12.6px;color:#3d9af0;font-weight:bold;transform:scaleX(0.9733);transform-origin:0 0;">0:00:02:13</span>
<span style="left:229.00px;top:589.12px;font-size:8.6px;line-height:8.6px;color:#3d8ad8;transform:scaleX(0.9642);transform-origin:0 0;">00063 (25.00 fps)</span>
<div style="left:303px;top:577.5px;width:460px;height:17px;background:#0e0e0e;border:1px solid #232323;border-radius:4px;box-sizing:border-box;"></div>
<svg style="left:307px;top:581px;" width="15" height="10" viewBox="0 0 15 10"><circle cx="4" cy="4" r="3" stroke="#a8a8a8" stroke-width="1.3" fill="none"/><path d="M6.3 6.3 L9 9" stroke="#a8a8a8" stroke-width="1.3"/><path d="M9.5 5 L11 6.5 L12.5 5" stroke="#a8a8a8" stroke-width="1" fill="none"/></svg>
<svg style="left:775px;top:579px;" width="14" height="13" viewBox="0 0 14 13"><path d="M0 3 H5 M5 3 V10 H9 M5 6.5 H9" stroke="#b8b8b8" stroke-width="1.2" fill="none"/><rect x="9" y="1.5" width="3" height="3" fill="#b8b8b8"/><rect x="9" y="5" width="3" height="3" fill="#b8b8b8"/><rect x="9" y="8.5" width="3" height="3" fill="#b8b8b8"/></svg>
<div style="left:794px;top:577px;width:17px;height:17px;background:#3d3d3d;border-radius:3px;"></div>
<svg style="left:797px;top:580.5px;" width="11" height="10" viewBox="0 0 11 10"><path d="M1.5 5 Q1.5 0 5.5 0 Q9.5 0 9.5 5 Z" fill="#d8d8d8"/><path d="M0 6.5 H11 M5.5 3 V10 M3 9 H8" stroke="#d8d8d8" stroke-width="1.2"/><path d="M3.5 5 V7 M7.5 5 V7" stroke="#d8d8d8"/></svg>
<svg style="left:818px;top:579px;" width="11" height="13" viewBox="0 0 11 13"><rect x="3" y="0.5" width="7.5" height="9.5" fill="#888"/><rect x="0.5" y="2.5" width="8" height="10" fill="#b8b8b8"/><path d="M2 5 H7 M2 7 H7 M2 9 H7" stroke="#333" stroke-width="0.8"/></svg>
<svg style="left:834px;top:579px;" width="13" height="13" viewBox="0 0 13 13"><circle cx="8" cy="4.5" r="4" stroke="#b8b8b8" stroke-width="1.2" fill="#555"/><circle cx="6" cy="6.5" r="4" stroke="#b8b8b8" stroke-width="1.2" fill="#666"/><circle cx="4.5" cy="8.5" r="4" stroke="#b8b8b8" stroke-width="1.2" fill="#777"/></svg>
<svg style="left:854px;top:578px;" width="14" height="14" viewBox="0 0 14 14"><rect x="0.7" y="2" width="12.6" height="11.3" stroke="#b8b8b8" stroke-width="1.2" fill="none"/><path d="M2.5 5 Q5 5 7 9 Q8 11 11 11.5" stroke="#b8b8b8" stroke-width="1.2" fill="none"/><path d="M3 0 V3 M6 0 V3 M9 0 V3" stroke="#b8b8b8"/></svg>
<div style="left:878px;top:571px;width:322px;height:29px;background:#1f1f1f;"></div>
<div style="left:884px;top:576.5px;width:316px;height:7px;background:#2e2a25;border:1px solid #4a4033;box-sizing:border-box;"></div>
<div style="left:974px;top:577px;width:148px;height:6px;background:#6a6a6e;"></div>
<svg style="left:968px;top:576.5px;" width="7" height="7" viewBox="0 0 7 7"><path d="M7 0 V7 H3.5 A3.5 3.5 0 0 1 3.5 0 Z" fill="#2b8ee8"/></svg>
<svg style="left:1122px;top:576.5px;" width="7" height="7" viewBox="0 0 7 7"><path d="M0 0 V7 H3.5 A3.5 3.5 0 0 0 3.5 0 Z" fill="#2b8ee8"/></svg>
<div style="left:1048.5px;top:577px;width:1.2px;height:6px;background:#56a8f0;"></div>
<span style="left:887.39px;top:585.46px;font-size:9.5px;line-height:9.5px;color:#c8c8c8;transform:scaleX(0.8500);transform-origin:0 0;">10f</span>
<div style="left:893px;top:596px;width:1px;height:3.5px;background:#9a9a9a;"></div>
<span style="left:949.39px;top:585.46px;font-size:9.5px;line-height:9.5px;color:#c8c8c8;transform:scaleX(0.8500);transform-origin:0 0;">15f</span>
<div style="left:955px;top:596px;width:1px;height:3.5px;background:#9a9a9a;"></div>
<span style="left:1010.39px;top:585.46px;font-size:9.5px;line-height:9.5px;color:#c8c8c8;transform:scaleX(0.8500);transform-origin:0 0;">20f</span>
<div style="left:1016px;top:596px;width:1px;height:3.5px;background:#9a9a9a;"></div>
<span style="left:1065.77px;top:585.46px;font-size:9.5px;line-height:9.5px;color:#c8c8c8;transform:scaleX(0.8500);transform-origin:0 0;">02:00f</span>
<div style="left:1077px;top:596px;width:1px;height:3.5px;background:#9a9a9a;"></div>
<span style="left:1133.39px;top:585.46px;font-size:9.5px;line-height:9.5px;color:#c8c8c8;transform:scaleX(0.8500);transform-origin:0 0;">05f</span>
<div style="left:1139px;top:596px;width:1px;height:3.5px;background:#9a9a9a;"></div>
<span style="left:1193.39px;top:585.46px;font-size:9.5px;line-height:9.5px;color:#c8c8c8;transform:scaleX(0.8500);transform-origin:0 0;">10f</span>
<div style="left:1199px;top:596px;width:1px;height:3.5px;background:#9a9a9a;"></div>
<div style="left:219px;top:600px;width:659px;height:17.5px;background:#1f1f1f;"></div>
<div style="left:219px;top:617px;width:981px;height:1px;background:#111;"></div>
<svg style="left:226px;top:607px;" width="11" height="7" viewBox="0 0 11 7"><path d="M0.5 3.5 Q5.5 -2 10.5 3.5 Q5.5 9 0.5 3.5 Z" fill="#b8b8b8"/><circle cx="5.5" cy="3.5" r="1.8" fill="#1f1f1f"/><circle cx="5.5" cy="3.5" r="0.8" fill="#b8b8b8"/></svg>
<svg style="left:238px;top:605px;" width="11" height="11" viewBox="0 0 11 11"><path d="M0 3.5 H3 L6.5 0.5 V10.5 L3 7.5 H0 Z" fill="#b8b8b8"/><path d="M8 2.5 Q10.5 5.5 8 8.5" stroke="#b8b8b8" stroke-width="1.2" fill="none"/></svg>
<svg style="left:252px;top:606.5px;" width="7" height="7" viewBox="0 0 7 7"><circle cx="3.5" cy="3.5" r="3.3" fill="#b8b8b8"/></svg>
<svg style="left:263px;top:604.5px;" width="9" height="11" viewBox="0 0 9 11"><path d="M2.2 5 V3 Q2.2 0.8 4.5 0.8 Q6.8 0.8 6.8 3 V5" stroke="#b8b8b8" stroke-width="1.3" fill="none"/><rect x="0.5" y="5" width="8" height="6" fill="#b8b8b8"/></svg>
<div style="left:277px;top:604px;width:1px;height:11px;background:#0c0c0c;"></div>
<svg style="left:287px;top:604px;" width="12" height="12" viewBox="0 0 12 12"><path d="M0.5 0.5 H6 L11.5 6 L6 11.5 L0.5 6 Z" fill="#b8b8b8"/><circle cx="3.3" cy="3.3" r="1.1" fill="#1f1f1f"/></svg>
<div style="left:304px;top:604px;width:1px;height:11px;background:#0c0c0c;"></div>
<span style="left:309.00px;top:605.38px;font-size:9px;line-height:9px;color:#b0b0b0;">#</span>
<div style="left:332px;top:604px;width:1px;height:11px;background:#0c0c0c;"></div>
<span style="left:337.00px;top:605.71px;font-size:9.2px;line-height:9.2px;color:#bdbdbd;transform:scaleX(0.8381);transform-origin:0 0;">Layer Name</span>
<div style="left:450px;top:604px;width:1px;height:11px;background:#0c0c0c;"></div>
<svg style="left:455px;top:605px;" width="11" height="10" viewBox="0 0 11 10"><path d="M1.5 5 Q1.5 0 5.5 0 Q9.5 0 9.5 5 Z" fill="#b8b8b8"/><path d="M0 6.5 H11 M5.5 3 V10 M3 9 H8" stroke="#b8b8b8" stroke-width="1.2"/><path d="M3.5 5 V7 M7.5 5 V7" stroke="#b8b8b8"/></svg>
<svg style="left:467px;top:605px;" width="10" height="10" viewBox="0 0 10 10"><circle cx="5" cy="5" r="2" stroke="#b8b8b8" stroke-width="1.2" fill="none"/><path d="M5 0 V2 M5 8 V10 M0 5 H2 M8 5 H10 M1.5 1.5 L3 3 M7 7 L8.5 8.5 M8.5 1.5 L7 3 M3 7 L1.5 8.5" stroke="#b8b8b8"/></svg>
<svg style="left:480px;top:605px;" width="10" height="10" viewBox="0 0 10 10"><path d="M0.5 0.5 L9.5 9.5" stroke="#b8b8b8" stroke-width="1.4"/></svg>
<span style="left:492.00px;top:604.69px;font-size:11px;line-height:11px;color:#b0b0b0;font-style:italic;">fx</span>
<svg style="left:503px;top:604px;" width="10" height="11" viewBox="0 0 10 11"><rect x="0" y="0" width="10" height="11" fill="#b8b8b8"/><rect x="2" y="2" width="6" height="7" fill="#333"/><path d="M0 3 H2 M0 6 H2 M8 3 H10 M8 6 H10" stroke="#333"/></svg>
<svg style="left:515px;top:604px;" width="11" height="11" viewBox="0 0 11 11"><circle cx="7" cy="4" r="3.5" fill="#777"/><circle cx="5" cy="6" r="3.5" fill="#999"/><circle cx="3.8" cy="7.3" r="3.3" fill="#b8b8b8"/></svg>
<svg style="left:528px;top:604px;" width="10" height="10" viewBox="0 0 10 10"><circle cx="5" cy="5" r="4.5" stroke="#b8b8b8" stroke-width="1.1" fill="none"/><path d="M8.2 1.8 A4.5 4.5 0 0 1 1.8 8.2 Z" fill="#b8b8b8"/></svg>
<svg style="left:541px;top:604px;" width="10" height="10" viewBox="0 0 10 10"><path d="M5 0.7 L9.3 3 V7.5 L5 9.5 L0.7 7.5 V3 Z M0.7 3 L5 5.3 L9.3 3 M5 5.3 V9.5" stroke="#b8b8b8" stroke-width="1" fill="none"/></svg>
<div style="left:565px;top:604px;width:1px;height:11px;background:#0c0c0c;"></div>
<span style="left:570.00px;top:605.71px;font-size:9.2px;line-height:9.2px;color:#bdbdbd;transform:scaleX(0.8473);transform-origin:0 0;">Mode</span>
<span style="left:626.00px;top:605.71px;font-size:9.2px;line-height:9.2px;color:#bdbdbd;">T</span>
<span style="left:640.00px;top:605.71px;font-size:9.2px;line-height:9.2px;color:#bdbdbd;transform:scaleX(0.8295);transform-origin:0 0;">Track Matte</span>
<svg style="left:704px;top:604px;" width="9" height="9" viewBox="0 0 9 9"><rect x="0" y="0" width="9" height="9" rx="1" fill="#d8d8d8"/><circle cx="4.5" cy="4.5" r="2.7" fill="#1f1f1f"/></svg>
<svg style="left:716px;top:604px;" width="11" height="9" viewBox="0 0 11 9"><rect x="0.5" y="0" width="9" height="9" rx="1" fill="none" stroke="#d8d8d8"/><path d="M2 8 Q3 2 9 1.5 Q7 7 2 8 Z" fill="#d8d8d8"/></svg>
<span style="left:732.00px;top:605.71px;font-size:9.2px;line-height:9.2px;color:#bdbdbd;transform:scaleX(1.0501);transform-origin:0 0;">Parent &amp; Link</span>
<div style="left:825px;top:604px;width:1px;height:11px;background:#0c0c0c;"></div>
<span style="left:831.00px;top:605.71px;font-size:9.2px;line-height:9.2px;color:#bdbdbd;transform:scaleX(0.8312);transform-origin:0 0;">Keys</span>
<div style="left:870px;top:604px;width:1px;height:11px;background:#0c0c0c;"></div>
<div style="left:879px;top:600px;width:321px;height:17px;background:#5f5f5f;"></div>
<div style="left:879px;top:615px;width:321px;height:2px;background:#1fc81f;"></div>
<div style="left:219px;top:617.7px;width:660px;height:14.27px;background:#1c1c1c;"></div>
<div style="left:219px;top:631.1px;width:981px;height:0.9px;background:#111;"></div>
<div style="left:313px;top:624.8px;width:1px;height:1px;background:#666;"></div>
<svg style="left:321px;top:618.8px;" width="12" height="12" viewBox="0 0 12 12"><rect x="0" y="0" width="12" height="12" rx="2" fill="#111"/><circle cx="6" cy="6.8" r="4" stroke="#2f86e0" stroke-width="1.5" fill="none"/><path d="M6 6.8 L8 4.8 M4.5 1.5 H7.5" stroke="#2f86e0" stroke-width="1.3"/></svg>
<svg style="left:337px;top:619.8px;" width="11" height="10" viewBox="0 0 11 10"><path d="M0.6 0 V9.4 H11" stroke="#9a9a9a" stroke-width="1.1" fill="none"/><path d="M2 4 L4 8 L7 5 L10 6" stroke="#9a9a9a" stroke-width="1.1" fill="none"/></svg>
<span style="left:353.00px;top:620.11px;font-size:10.3px;line-height:10.3px;color:#c4c4c4;transform:scaleX(0.9017);transform-origin:0 0;">Scale</span>
<svg style="left:455px;top:621.3px;" width="12" height="7" viewBox="0 0 12 7"><rect x="0.7" y="0.7" width="6" height="5.6" rx="2.8" stroke="#c8c8c8" stroke-width="1.3" fill="none"/><rect x="5" y="0.7" width="6" height="5.6" rx="2.8" stroke="#c8c8c8" stroke-width="1.3" fill="none"/></svg>
<span style="left:470.00px;top:619.69px;font-size:10.8px;line-height:10.8px;color:#3d93ee;transform:scaleX(0.7757);transform-origin:0 0;">100.0,100.0,100.0%</span>
<svg style="left:745px;top:619.3px;" width="11" height="11" viewBox="0 0 11 11"><path d="M5.5 5.5 m0 -1 a1 1 0 1 1 -1 1 a2.3 2.3 0 1 1 2.3 2.3 a3.6 3.6 0 1 1 3.6 -3.6" stroke="#8e8e8e" stroke-width="1.3" fill="none" transform="translate(-0.5 0.5)"/></svg>
<svg style="left:833px;top:620.3px;" width="30" height="10" viewBox="0 0 30 10"><path d="M4.5 1 V8 L0.8 4.5 Z" fill="#6a6a6a"/><path d="M14.5 1.3 L17.7 4.5 L14.5 7.7 L11.3 4.5 Z" stroke="#c8c8c8" stroke-width="1" fill="none"/><path d="M25 1 V8 L28.7 4.5 Z" fill="#c8c8c8"/></svg>
<div style="left:219px;top:632.0px;width:660px;height:14.27px;background:#1c1c1c;"></div>
<div style="left:219px;top:645.4px;width:981px;height:0.9px;background:#111;"></div>
<div style="left:313px;top:639.1px;width:1px;height:1px;background:#666;"></div>
<svg style="left:321px;top:633.1px;" width="12" height="12" viewBox="0 0 12 12"><rect x="0" y="0" width="12" height="12" rx="2" fill="#111"/><circle cx="6" cy="6.8" r="4" stroke="#2f86e0" stroke-width="1.5" fill="none"/><path d="M6 6.8 L8 4.8 M4.5 1.5 H7.5" stroke="#2f86e0" stroke-width="1.3"/></svg>
<svg style="left:337px;top:634.1px;" width="11" height="10" viewBox="0 0 11 10"><path d="M0.6 0 V9.4 H11" stroke="#9a9a9a" stroke-width="1.1" fill="none"/><path d="M2 4 L4 8 L7 5 L10 6" stroke="#9a9a9a" stroke-width="1.1" fill="none"/></svg>
<span style="left:353.00px;top:634.38px;font-size:10.3px;line-height:10.3px;color:#c4c4c4;transform:scaleX(0.9017);transform-origin:0 0;">Z Rotation</span>
<span style="left:455.00px;top:633.96px;font-size:10.8px;line-height:10.8px;color:#3d93ee;transform:scaleX(0.8500);transform-origin:0 0;">0x+0.0°</span>
<svg style="left:745px;top:633.6px;" width="11" height="11" viewBox="0 0 11 11"><path d="M5.5 5.5 m0 -1 a1 1 0 1 1 -1 1 a2.3 2.3 0 1 1 2.3 2.3 a3.6 3.6 0 1 1 3.6 -3.6" stroke="#8e8e8e" stroke-width="1.3" fill="none" transform="translate(-0.5 0.5)"/></svg>
<svg style="left:833px;top:634.6px;" width="30" height="10" viewBox="0 0 30 10"><path d="M4.5 1 V8 L0.8 4.5 Z" fill="#6a6a6a"/><rect x="9.5" y="-1" width="10" height="10" rx="2" fill="#0e0e0e"/><path d="M14.5 0.8 L18.3 4.5 L14.5 8.2 L10.7 4.5 Z" fill="#3a9cf0" stroke="#3a9cf0"/><path d="M25 1 V8 L28.7 4.5 Z" fill="#c8c8c8"/></svg>
<div style="left:219px;top:646.2px;width:981px;height:14.27px;background:#3c3c3c;"></div>
<div style="left:219px;top:659.6px;width:981px;height:0.9px;background:#131313;"></div>
<div style="left:224px;top:647.7px;width:10.5px;height:11px;background:#111;"></div>
<svg style="left:224px;top:649.9px;" width="11" height="7" viewBox="0 0 11 7"><path d="M0.5 3.5 Q5.5 -2 10.5 3.5 Q5.5 9 0.5 3.5 Z" fill="#d0d0d0"/><circle cx="5.5" cy="3.5" r="1.8" fill="#111"/><circle cx="5.5" cy="3.5" r="0.8" fill="#d0d0d0"/></svg>
<div style="left:249.5px;top:647.7px;width:10px;height:11px;background:#111;"></div>
<div style="left:262px;top:647.7px;width:10px;height:11px;background:#111;"></div>
<svg style="left:282px;top:650.9px;" width="7" height="5" viewBox="0 0 7 5"><path d="M0.7 0.7 L3.5 4 L6.3 0.7" stroke="#b8b8b8" stroke-width="1.4" fill="none"/></svg>
<div style="left:292px;top:648.4px;width:10px;height:10px;background:#b4b4d6;"></div>
<span style="left:310.00px;top:648.23px;font-size:10.8px;line-height:10.8px;color:#c0c0c0;transform:scaleX(0.8500);transform-origin:0 0;">11</span>
<svg style="left:336px;top:647.4px;" width="10" height="12" viewBox="0 0 10 12"><rect x="0.5" y="0.5" width="9" height="11" rx="1" fill="#2a1a10" stroke="#d8761a"/><path d="M3 3 H7 V6 H3 Z" fill="#f0a030"/><path d="M5 8 L3.5 10 H6.5 Z" fill="#f0e0d0"/></svg>
<div style="left:348px;top:646.5px;width:102px;height:13px;background:#b8b8b8;"></div>
<span style="left:351.00px;top:648.57px;font-size:10.4px;line-height:10.4px;color:#262626;transform:scaleX(0.8931);transform-origin:0 0;">tutan eyes</span>
<div style="left:455px;top:647.7px;width:10.5px;height:11px;background:#141414;"></div>
<div style="left:467.5px;top:647.7px;width:10.5px;height:11px;background:#141414;"></div>
<div style="left:480px;top:647.7px;width:10.5px;height:11px;background:#141414;"></div>
<svg style="left:455px;top:648.4px;" width="11" height="10" viewBox="0 0 11 10"><path d="M1.5 5 Q1.5 0 5.5 0 Q9.5 0 9.5 5 Z" fill="#d0d0d0"/><path d="M0 6.5 H11 M5.5 3 V10 M3 9 H8" stroke="#d0d0d0" stroke-width="1.2"/><path d="M3.5 5 V7 M7.5 5 V7" stroke="#d0d0d0"/></svg>
<svg style="left:468px;top:648.4px;" width="10" height="10" viewBox="0 0 10 10"><circle cx="5" cy="5" r="2" stroke="#d0d0d0" stroke-width="1.2" fill="none"/><path d="M5 0 V2 M5 8 V10 M0 5 H2 M8 5 H10 M1.5 1.5 L3 3 M7 7 L8.5 8.5 M8.5 1.5 L7 3 M3 7 L1.5 8.5" stroke="#d0d0d0"/></svg>
<svg style="left:481px;top:648.4px;" width="9" height="10" viewBox="0 0 9 10"><path d="M0.7 9.3 L8.3 0.7" stroke="#d0d0d0" stroke-width="1.3"/></svg>
<div style="left:518px;top:647.7px;width:10px;height:11px;background:#141414;"></div>
<div style="left:530.5px;top:647.7px;width:10px;height:11px;background:#141414;"></div>
<div style="left:542px;top:646.2px;width:1px;height:14px;background:#8a8a8a;"></div>
<div style="left:553.5px;top:646.2px;width:1px;height:14px;background:#8a8a8a;"></div>
<svg style="left:543px;top:648.4px;" width="10" height="10" viewBox="0 0 10 10"><path d="M5 0.7 L9.3 3 V7.5 L5 9.5 L0.7 7.5 V3 Z M0.7 3 L5 5.3 L9.3 3 M5 5.3 V9.5" stroke="#d0d0d0" stroke-width="1" fill="none"/></svg>
<div style="left:569px;top:647.2px;width:49px;height:12.5px;background:#121212;border-radius:3px;"></div>
<span style="left:573.00px;top:648.06px;font-size:10.8px;line-height:10.8px;color:#d4d4d4;transform:scaleX(0.8333);transform-origin:0 0;">Norm</span>
<svg style="left:605px;top:651.2px;" width="8" height="5" viewBox="0 0 8 5"><path d="M0.8 0.8 L4 4 L7.2 0.8" stroke="#d4d4d4" stroke-width="1.5" fill="none"/></svg>
<div style="left:622px;top:647.7px;width:10px;height:11px;background:#141414;"></div>
<svg style="left:637px;top:647.9px;" width="12" height="11" viewBox="0 0 12 11"><path d="M6 5.5 m0 -1 a1 1 0 1 1 -1 1 a2.3 2.3 0 1 1 2.3 2.3 a3.6 3.6 0 1 1 3.6 -3.6" stroke="#9a9a9a" stroke-width="1.2" fill="none"/><circle cx="10.5" cy="8.5" r="1" fill="#9a9a9a"/></svg>
<div style="left:651px;top:647.2px;width:49px;height:12.5px;background:#121212;border-radius:3px;"></div>
<span style="left:655.00px;top:648.06px;font-size:10.8px;line-height:10.8px;color:#d4d4d4;transform:scaleX(0.8138);transform-origin:0 0;">No M</span>
<svg style="left:687px;top:651.2px;" width="8" height="5" viewBox="0 0 8 5"><path d="M0.8 0.8 L4 4 L7.2 0.8" stroke="#d4d4d4" stroke-width="1.5" fill="none"/></svg>
<svg style="left:735px;top:647.9px;" width="11" height="11" viewBox="0 0 11 11"><path d="M5.5 5.5 m0 -1 a1 1 0 1 1 -1 1 a2.3 2.3 0 1 1 2.3 2.3 a3.6 3.6 0 1 1 3.6 -3.6" stroke="#8a8a8a" stroke-width="1.3" fill="none" transform="translate(-0.5 0.5)"/></svg>
<div style="left:749px;top:647.2px;width:77px;height:12.5px;background:#121212;border-radius:3px;"></div>
<span style="left:753.00px;top:648.06px;font-size:10.8px;line-height:10.8px;color:#d4d4d4;transform:scaleX(0.8500);transform-origin:0 0;">14. tutan</span>
<svg style="left:813px;top:651.2px;" width="8" height="5" viewBox="0 0 8 5"><path d="M0.8 0.8 L4 4 L7.2 0.8" stroke="#d4d4d4" stroke-width="1.5" fill="none"/></svg>
<div style="left:879px;top:646.2px;width:321px;height:13.4px;background:#5f5f5f;"></div>
<div style="left:219px;top:660.5px;width:660px;height:14.27px;background:#1c1c1c;"></div>
<div style="left:219px;top:673.9px;width:981px;height:0.9px;background:#111;"></div>
<div style="left:313px;top:667.6px;width:1px;height:1px;background:#666;"></div>
<svg style="left:321px;top:661.6px;" width="12" height="12" viewBox="0 0 12 12"><rect x="0" y="0" width="12" height="12" rx="2" fill="#111"/><circle cx="6" cy="6.8" r="4" stroke="#2f86e0" stroke-width="1.5" fill="none"/><path d="M6 6.8 L8 4.8 M4.5 1.5 H7.5" stroke="#2f86e0" stroke-width="1.3"/></svg>
<svg style="left:337px;top:662.6px;" width="11" height="10" viewBox="0 0 11 10"><path d="M0.6 0 V9.4 H11" stroke="#9a9a9a" stroke-width="1.1" fill="none"/><path d="M2 4 L4 8 L7 5 L10 6" stroke="#9a9a9a" stroke-width="1.1" fill="none"/></svg>
<span style="left:353.00px;top:662.92px;font-size:10.3px;line-height:10.3px;color:#c4c4c4;transform:scaleX(0.9017);transform-origin:0 0;">X Position</span>
<span style="left:455.00px;top:662.50px;font-size:10.8px;line-height:10.8px;color:#3d93ee;transform:scaleX(0.8500);transform-origin:0 0;">324.2</span>
<svg style="left:745px;top:662.1px;" width="11" height="11" viewBox="0 0 11 11"><path d="M5.5 5.5 m0 -1 a1 1 0 1 1 -1 1 a2.3 2.3 0 1 1 2.3 2.3 a3.6 3.6 0 1 1 3.6 -3.6" stroke="#8e8e8e" stroke-width="1.3" fill="none" transform="translate(-0.5 0.5)"/></svg>
<svg style="left:833px;top:663.1px;" width="30" height="10" viewBox="0 0 30 10"><path d="M4.5 1 V8 L0.8 4.5 Z" fill="#c8c8c8"/><path d="M14.5 1.3 L17.7 4.5 L14.5 7.7 L11.3 4.5 Z" stroke="#c8c8c8" stroke-width="1" fill="none"/><path d="M25 1 V8 L28.7 4.5 Z" fill="#c8c8c8"/></svg>
<div style="left:219px;top:674.8px;width:660px;height:14.27px;background:#1c1c1c;"></div>
<div style="left:219px;top:688.2px;width:981px;height:0.9px;background:#111;"></div>
<div style="left:313px;top:681.9px;width:1px;height:1px;background:#666;"></div>
<svg style="left:321px;top:675.9px;" width="12" height="12" viewBox="0 0 12 12"><rect x="0" y="0" width="12" height="12" rx="2" fill="#111"/><circle cx="6" cy="6.8" r="4" stroke="#2f86e0" stroke-width="1.5" fill="none"/><path d="M6 6.8 L8 4.8 M4.5 1.5 H7.5" stroke="#2f86e0" stroke-width="1.3"/></svg>
<svg style="left:337px;top:676.9px;" width="11" height="10" viewBox="0 0 11 10"><path d="M0.6 0 V9.4 H11" stroke="#9a9a9a" stroke-width="1.1" fill="none"/><path d="M2 4 L4 8 L7 5 L10 6" stroke="#9a9a9a" stroke-width="1.1" fill="none"/></svg>
<span style="left:353.00px;top:677.19px;font-size:10.3px;line-height:10.3px;color:#c4c4c4;transform:scaleX(0.9017);transform-origin:0 0;">Y Position</span>
<span style="left:455.00px;top:676.77px;font-size:10.8px;line-height:10.8px;color:#3d93ee;transform:scaleX(0.8500);transform-origin:0 0;">267.0</span>
<svg style="left:745px;top:676.4px;" width="11" height="11" viewBox="0 0 11 11"><path d="M5.5 5.5 m0 -1 a1 1 0 1 1 -1 1 a2.3 2.3 0 1 1 2.3 2.3 a3.6 3.6 0 1 1 3.6 -3.6" stroke="#8e8e8e" stroke-width="1.3" fill="none" transform="translate(-0.5 0.5)"/></svg>
<svg style="left:833px;top:677.4px;" width="30" height="10" viewBox="0 0 30 10"><path d="M4.5 1 V8 L0.8 4.5 Z" fill="#c8c8c8"/><path d="M14.5 1.3 L17.7 4.5 L14.5 7.7 L11.3 4.5 Z" stroke="#c8c8c8" stroke-width="1" fill="none"/><path d="M25 1 V8 L28.7 4.5 Z" fill="#c8c8c8"/></svg>
<div style="left:219px;top:689.1px;width:981px;height:14.27px;background:#3c3c3c;"></div>
<div style="left:219px;top:702.5px;width:981px;height:0.9px;background:#131313;"></div>
<div style="left:224px;top:690.6px;width:10.5px;height:11px;background:#111;"></div>
<div style="left:262px;top:690.6px;width:10px;height:11px;background:#111;"></div>
<svg style="left:283px;top:692.7px;" width="5" height="7" viewBox="0 0 5 7"><path d="M0.7 0.7 L4 3.5 L0.7 6.3" stroke="#b8b8b8" stroke-width="1.4" fill="none"/></svg>
<div style="left:292px;top:691.2px;width:10px;height:10px;background:#b4b4d6;"></div>
<span style="left:310.00px;top:691.04px;font-size:10.8px;line-height:10.8px;color:#c0c0c0;transform:scaleX(0.8500);transform-origin:0 0;">12</span>
<svg style="left:336px;top:690.2px;" width="10" height="12" viewBox="0 0 10 12"><rect x="0.5" y="0.5" width="9" height="11" rx="1" fill="#2a1a10" stroke="#d8761a"/><path d="M3 3 H7 V6 H3 Z" fill="#f0a030"/><path d="M5 8 L3.5 10 H6.5 Z" fill="#f0e0d0"/></svg>
<div style="left:349px;top:690.7px;width:11px;height:11px;background:#161616;border:1px solid #555;box-sizing:border-box;"></div>
<svg style="left:351px;top:692.7px;" width="7" height="7" viewBox="0 0 7 7"><circle cx="3.5" cy="3.5" r="2.5" fill="#e0e0e0"/></svg>
<div style="left:361px;top:689.4px;width:89px;height:13px;background:#b8b8b8;"></div>
<span style="left:363.00px;top:691.38px;font-size:10.4px;line-height:10.4px;color:#262626;transform:scaleX(0.8931);transform-origin:0 0;">tutan-CloneMatte</span>
<div style="left:455px;top:690.6px;width:10.5px;height:11px;background:#141414;"></div>
<div style="left:467.5px;top:690.6px;width:10.5px;height:11px;background:#141414;"></div>
<div style="left:480px;top:690.6px;width:10.5px;height:11px;background:#141414;"></div>
<svg style="left:455px;top:691.2px;" width="11" height="10" viewBox="0 0 11 10"><path d="M1.5 5 Q1.5 0 5.5 0 Q9.5 0 9.5 5 Z" fill="#d0d0d0"/><path d="M0 6.5 H11 M5.5 3 V10 M3 9 H8" stroke="#d0d0d0" stroke-width="1.2"/><path d="M3.5 5 V7 M7.5 5 V7" stroke="#d0d0d0"/></svg>
<svg style="left:468px;top:691.2px;" width="10" height="10" viewBox="0 0 10 10"><circle cx="5" cy="5" r="2" stroke="#d0d0d0" stroke-width="1.2" fill="none"/><path d="M5 0 V2 M5 8 V10 M0 5 H2 M8 5 H10 M1.5 1.5 L3 3 M7 7 L8.5 8.5 M8.5 1.5 L7 3 M3 7 L1.5 8.5" stroke="#d0d0d0"/></svg>
<svg style="left:481px;top:691.2px;" width="9" height="10" viewBox="0 0 9 10"><path d="M0.7 9.3 L8.3 0.7" stroke="#d0d0d0" stroke-width="1.3"/></svg>
<div style="left:518px;top:690.6px;width:10px;height:11px;background:#141414;"></div>
<div style="left:542px;top:689.1px;width:1px;height:14px;background:#8a8a8a;"></div>
<div style="left:553.5px;top:689.1px;width:1px;height:14px;background:#8a8a8a;"></div>
<svg style="left:543px;top:691.2px;" width="10" height="10" viewBox="0 0 10 10"><path d="M5 0.7 L9.3 3 V7.5 L5 9.5 L0.7 7.5 V3 Z M0.7 3 L5 5.3 L9.3 3 M5 5.3 V9.5" stroke="#d0d0d0" stroke-width="1" fill="none"/></svg>
<div style="left:569px;top:690.0px;width:49px;height:12.5px;background:#121212;border-radius:3px;"></div>
<span style="left:573.00px;top:690.86px;font-size:10.8px;line-height:10.8px;color:#d4d4d4;transform:scaleX(0.8333);transform-origin:0 0;">Norm</span>
<svg style="left:605px;top:694.0px;" width="8" height="5" viewBox="0 0 8 5"><path d="M0.8 0.8 L4 4 L7.2 0.8" stroke="#d4d4d4" stroke-width="1.5" fill="none"/></svg>
<svg style="left:637px;top:690.7px;" width="12" height="11" viewBox="0 0 12 11"><path d="M6 5.5 m0 -1 a1 1 0 1 1 -1 1 a2.3 2.3 0 1 1 2.3 2.3 a3.6 3.6 0 1 1 3.6 -3.6" stroke="#9a9a9a" stroke-width="1.2" fill="none"/><circle cx="10.5" cy="8.5" r="1" fill="#9a9a9a"/></svg>
<div style="left:651px;top:690.0px;width:49px;height:12.5px;background:#121212;border-radius:3px;"></div>
<span style="left:655.00px;top:690.86px;font-size:10.8px;line-height:10.8px;color:#d4d4d4;transform:scaleX(0.8138);transform-origin:0 0;">No M</span>
<svg style="left:687px;top:694.0px;" width="8" height="5" viewBox="0 0 8 5"><path d="M0.8 0.8 L4 4 L7.2 0.8" stroke="#d4d4d4" stroke-width="1.5" fill="none"/></svg>
<svg style="left:735px;top:690.7px;" width="11" height="11" viewBox="0 0 11 11"><path d="M5.5 5.5 m0 -1 a1 1 0 1 1 -1 1 a2.3 2.3 0 1 1 2.3 2.3 a3.6 3.6 0 1 1 3.6 -3.6" stroke="#8a8a8a" stroke-width="1.3" fill="none" transform="translate(-0.5 0.5)"/></svg>
<div style="left:749px;top:690.0px;width:77px;height:12.5px;background:#121212;border-radius:3px;"></div>
<span style="left:753.00px;top:690.86px;font-size:10.8px;line-height:10.8px;color:#d4d4d4;transform:scaleX(0.8500);transform-origin:0 0;">14. tutan</span>
<svg style="left:813px;top:694.0px;" width="8" height="5" viewBox="0 0 8 5"><path d="M0.8 0.8 L4 4 L7.2 0.8" stroke="#d4d4d4" stroke-width="1.5" fill="none"/></svg>
<div style="left:879px;top:689.1px;width:321px;height:13.4px;background:#5f5f5f;"></div>
<div style="left:219px;top:703.3px;width:981px;height:14.27px;background:#3c3c3c;"></div>
<div style="left:219px;top:716.7px;width:981px;height:0.9px;background:#131313;"></div>
<div style="left:224px;top:704.8px;width:10.5px;height:11px;background:#111;"></div>
<svg style="left:224px;top:707.0px;" width="11" height="7" viewBox="0 0 11 7"><path d="M0.5 3.5 Q5.5 -2 10.5 3.5 Q5.5 9 0.5 3.5 Z" fill="#d0d0d0"/><circle cx="5.5" cy="3.5" r="1.8" fill="#111"/><circle cx="5.5" cy="3.5" r="0.8" fill="#d0d0d0"/></svg>
<div style="left:249.5px;top:704.8px;width:10px;height:11px;background:#111;"></div>
<div style="left:262px;top:704.8px;width:10px;height:11px;background:#111;"></div>
<svg style="left:283px;top:707.0px;" width="5" height="7" viewBox="0 0 5 7"><path d="M0.7 0.7 L4 3.5 L0.7 6.3" stroke="#b8b8b8" stroke-width="1.4" fill="none"/></svg>
<div style="left:292px;top:705.5px;width:10px;height:10px;background:#b4b4d6;"></div>
<span style="left:310.00px;top:705.31px;font-size:10.8px;line-height:10.8px;color:#c0c0c0;transform:scaleX(0.8500);transform-origin:0 0;">13</span>
<div style="left:336px;top:704.5px;width:10px;height:12px;background:#9a98a8;border:1px solid #111;box-sizing:border-box;"></div>
<div style="left:349px;top:705.0px;width:11px;height:11px;background:#161616;border:1px solid #555;box-sizing:border-box;"></div>
<svg style="left:351px;top:707.0px;" width="7" height="7" viewBox="0 0 7 7"><path d="M0 0 L7 7 M7 0 L0 7" stroke="#aaa" stroke-width="1.2"/><circle cx="3.5" cy="3.5" r="2" fill="#555"/></svg>
<div style="left:361px;top:703.5999999999999px;width:89px;height:13px;background:#b8b8b8;"></div>
<span style="left:363.00px;top:705.65px;font-size:10.4px;line-height:10.4px;color:#262626;transform:scaleX(0.8931);transform-origin:0 0;">tutan-P...enta Solid 1</span>
<div style="left:455px;top:704.8px;width:10.5px;height:11px;background:#141414;"></div>
<div style="left:467.5px;top:704.8px;width:10.5px;height:11px;background:#141414;"></div>
<div style="left:480px;top:704.8px;width:10.5px;height:11px;background:#141414;"></div>
<svg style="left:455px;top:705.5px;" width="11" height="10" viewBox="0 0 11 10"><path d="M1.5 5 Q1.5 0 5.5 0 Q9.5 0 9.5 5 Z" fill="#d0d0d0"/><path d="M0 6.5 H11 M5.5 3 V10 M3 9 H8" stroke="#d0d0d0" stroke-width="1.2"/><path d="M3.5 5 V7 M7.5 5 V7" stroke="#d0d0d0"/></svg>
<svg style="left:468px;top:705.5px;" width="10" height="10" viewBox="0 0 10 10"><circle cx="5" cy="5" r="2" stroke="#d0d0d0" stroke-width="1.2" fill="none"/><path d="M5 0 V2 M5 8 V10 M0 5 H2 M8 5 H10 M1.5 1.5 L3 3 M7 7 L8.5 8.5 M8.5 1.5 L7 3 M3 7 L1.5 8.5" stroke="#d0d0d0"/></svg>
<svg style="left:481px;top:705.5px;" width="9" height="10" viewBox="0 0 9 10"><path d="M0.7 9.3 L8.3 0.7" stroke="#d0d0d0" stroke-width="1.3"/></svg>
<div style="left:518px;top:704.8px;width:10px;height:11px;background:#141414;"></div>
<div style="left:530.5px;top:704.8px;width:10px;height:11px;background:#141414;"></div>
<div style="left:542px;top:703.3px;width:1px;height:14px;background:#8a8a8a;"></div>
<div style="left:553.5px;top:703.3px;width:1px;height:14px;background:#8a8a8a;"></div>
<svg style="left:543px;top:705.5px;" width="10" height="10" viewBox="0 0 10 10"><path d="M5 0.7 L9.3 3 V7.5 L5 9.5 L0.7 7.5 V3 Z M0.7 3 L5 5.3 L9.3 3 M5 5.3 V9.5" stroke="#d0d0d0" stroke-width="1" fill="none"/></svg>
<div style="left:569px;top:704.2px;width:49px;height:12.5px;background:#121212;border-radius:3px;"></div>
<span style="left:573.00px;top:705.06px;font-size:10.8px;line-height:10.8px;color:#d4d4d4;transform:scaleX(0.7947);transform-origin:0 0;">Linea</span>
<svg style="left:605px;top:708.2px;" width="8" height="5" viewBox="0 0 8 5"><path d="M0.8 0.8 L4 4 L7.2 0.8" stroke="#d4d4d4" stroke-width="1.5" fill="none"/></svg>
<svg style="left:623px;top:705.5px;" width="10" height="10" viewBox="0 0 10 10"><rect x="0.5" y="0.5" width="9" height="9" fill="#111" stroke="#ccc"/><rect x="2" y="2" width="2" height="2" fill="#ccc"/><rect x="6" y="2" width="2" height="2" fill="#ccc"/><rect x="4" y="4" width="2" height="2" fill="#ccc"/><rect x="2" y="6" width="2" height="2" fill="#ccc"/><rect x="6" y="6" width="2" height="2" fill="#ccc"/></svg>
<svg style="left:637px;top:705.0px;" width="12" height="11" viewBox="0 0 12 11"><path d="M6 5.5 m0 -1 a1 1 0 1 1 -1 1 a2.3 2.3 0 1 1 2.3 2.3 a3.6 3.6 0 1 1 3.6 -3.6" stroke="#9a9a9a" stroke-width="1.2" fill="none"/><circle cx="10.5" cy="8.5" r="1" fill="#9a9a9a"/></svg>
<div style="left:651px;top:704.2px;width:49px;height:12.5px;background:#121212;border-radius:3px;"></div>
<span style="left:655.00px;top:705.06px;font-size:10.8px;line-height:10.8px;color:#d4d4d4;transform:scaleX(0.5921);transform-origin:0 0;">12. tu</span>
<svg style="left:687px;top:708.2px;" width="8" height="5" viewBox="0 0 8 5"><path d="M0.8 0.8 L4 4 L7.2 0.8" stroke="#d4d4d4" stroke-width="1.5" fill="none"/></svg>
<div style="left:704px;top:704.8px;width:10px;height:11px;background:#141414;"></div>
<svg style="left:705px;top:706.5px;" width="8" height="8" viewBox="0 0 8 8"><rect x="0" y="0" width="8" height="8" rx="1" fill="#e0e0e0"/><circle cx="4" cy="4" r="2.3" fill="#141414"/></svg>
<div style="left:716px;top:704.8px;width:10px;height:11px;background:#141414;"></div>
<svg style="left:735px;top:705.0px;" width="11" height="11" viewBox="0 0 11 11"><path d="M5.5 5.5 m0 -1 a1 1 0 1 1 -1 1 a2.3 2.3 0 1 1 2.3 2.3 a3.6 3.6 0 1 1 3.6 -3.6" stroke="#8a8a8a" stroke-width="1.3" fill="none" transform="translate(-0.5 0.5)"/></svg>
<div style="left:749px;top:704.2px;width:77px;height:12.5px;background:#121212;border-radius:3px;"></div>
<span style="left:753.00px;top:705.06px;font-size:10.8px;line-height:10.8px;color:#d4d4d4;transform:scaleX(0.8500);transform-origin:0 0;">14. tutan</span>
<svg style="left:813px;top:708.2px;" width="8" height="5" viewBox="0 0 8 5"><path d="M0.8 0.8 L4 4 L7.2 0.8" stroke="#d4d4d4" stroke-width="1.5" fill="none"/></svg>
<div style="left:879px;top:703.3px;width:321px;height:13.4px;background:#5f5f5f;"></div>
<div style="left:219px;top:717.6px;width:981px;height:14.27px;background:#3c3c3c;"></div>
<div style="left:219px;top:731.0px;width:981px;height:0.9px;background:#131313;"></div>
<div style="left:224px;top:719.1px;width:10.5px;height:11px;background:#111;"></div>
<svg style="left:224px;top:721.2px;" width="11" height="7" viewBox="0 0 11 7"><path d="M0.5 3.5 Q5.5 -2 10.5 3.5 Q5.5 9 0.5 3.5 Z" fill="#d0d0d0"/><circle cx="5.5" cy="3.5" r="1.8" fill="#111"/><circle cx="5.5" cy="3.5" r="0.8" fill="#d0d0d0"/></svg>
<div style="left:249.5px;top:719.1px;width:10px;height:11px;background:#111;"></div>
<div style="left:262px;top:719.1px;width:10px;height:11px;background:#111;"></div>
<svg style="left:282px;top:722.2px;" width="7" height="5" viewBox="0 0 7 5"><path d="M0.7 0.7 L3.5 4 L6.3 0.7" stroke="#b8b8b8" stroke-width="1.4" fill="none"/></svg>
<div style="left:292px;top:719.7px;width:10px;height:10px;background:#b4b4d6;"></div>
<span style="left:310.00px;top:719.58px;font-size:10.8px;line-height:10.8px;color:#c0c0c0;transform:scaleX(0.8500);transform-origin:0 0;">14</span>
<svg style="left:336px;top:718.7px;" width="10" height="12" viewBox="0 0 10 12"><rect x="0.5" y="0.5" width="9" height="11" rx="1" fill="#2a1a10" stroke="#d8761a"/><path d="M3 3 H7 V6 H3 Z" fill="#f0a030"/><path d="M5 8 L3.5 10 H6.5 Z" fill="#f0e0d0"/></svg>
<div style="left:348px;top:717.9px;width:102px;height:13px;background:#b8b8b8;"></div>
<span style="left:351.00px;top:719.92px;font-size:10.4px;line-height:10.4px;color:#262626;transform:scaleX(0.8931);transform-origin:0 0;">tutan</span>
<div style="left:455px;top:719.1px;width:10.5px;height:11px;background:#141414;"></div>
<div style="left:467.5px;top:719.1px;width:10.5px;height:11px;background:#141414;"></div>
<div style="left:480px;top:719.1px;width:10.5px;height:11px;background:#141414;"></div>
<svg style="left:455px;top:719.7px;" width="11" height="10" viewBox="0 0 11 10"><path d="M1.5 5 Q1.5 0 5.5 0 Q9.5 0 9.5 5 Z" fill="#d0d0d0"/><path d="M0 6.5 H11 M5.5 3 V10 M3 9 H8" stroke="#d0d0d0" stroke-width="1.2"/><path d="M3.5 5 V7 M7.5 5 V7" stroke="#d0d0d0"/></svg>
<svg style="left:468px;top:719.7px;" width="10" height="10" viewBox="0 0 10 10"><circle cx="5" cy="5" r="2" stroke="#d0d0d0" stroke-width="1.2" fill="none"/><path d="M5 0 V2 M5 8 V10 M0 5 H2 M8 5 H10 M1.5 1.5 L3 3 M7 7 L8.5 8.5 M8.5 1.5 L7 3 M3 7 L1.5 8.5" stroke="#d0d0d0"/></svg>
<svg style="left:481px;top:719.7px;" width="9" height="10" viewBox="0 0 9 10"><path d="M0.7 9.3 L8.3 0.7" stroke="#d0d0d0" stroke-width="1.3"/></svg>
<div style="left:518px;top:719.1px;width:10px;height:11px;background:#141414;"></div>
<div style="left:530.5px;top:719.1px;width:10px;height:11px;background:#141414;"></div>
<div style="left:542px;top:717.6px;width:1px;height:14px;background:#8a8a8a;"></div>
<div style="left:553.5px;top:717.6px;width:1px;height:14px;background:#8a8a8a;"></div>
<svg style="left:543px;top:719.7px;" width="10" height="10" viewBox="0 0 10 10"><path d="M5 0.7 L9.3 3 V7.5 L5 9.5 L0.7 7.5 V3 Z M0.7 3 L5 5.3 L9.3 3 M5 5.3 V9.5" stroke="#d0d0d0" stroke-width="1" fill="none"/></svg>
<div style="left:569px;top:718.5px;width:49px;height:12.5px;background:#121212;border-radius:3px;"></div>
<span style="left:573.00px;top:719.36px;font-size:10.8px;line-height:10.8px;color:#d4d4d4;transform:scaleX(0.8333);transform-origin:0 0;">Norm</span>
<svg style="left:605px;top:722.5px;" width="8" height="5" viewBox="0 0 8 5"><path d="M0.8 0.8 L4 4 L7.2 0.8" stroke="#d4d4d4" stroke-width="1.5" fill="none"/></svg>
<div style="left:622px;top:719.1px;width:10px;height:11px;background:#141414;"></div>
<svg style="left:637px;top:719.2px;" width="12" height="11" viewBox="0 0 12 11"><path d="M6 5.5 m0 -1 a1 1 0 1 1 -1 1 a2.3 2.3 0 1 1 2.3 2.3 a3.6 3.6 0 1 1 3.6 -3.6" stroke="#9a9a9a" stroke-width="1.2" fill="none"/><circle cx="10.5" cy="8.5" r="1" fill="#9a9a9a"/></svg>
<div style="left:651px;top:718.5px;width:49px;height:12.5px;background:#121212;border-radius:3px;"></div>
<span style="left:655.00px;top:719.36px;font-size:10.8px;line-height:10.8px;color:#d4d4d4;transform:scaleX(0.8138);transform-origin:0 0;">No M</span>
<svg style="left:687px;top:722.5px;" width="8" height="5" viewBox="0 0 8 5"><path d="M0.8 0.8 L4 4 L7.2 0.8" stroke="#d4d4d4" stroke-width="1.5" fill="none"/></svg>
<svg style="left:735px;top:719.2px;" width="11" height="11" viewBox="0 0 11 11"><path d="M5.5 5.5 m0 -1 a1 1 0 1 1 -1 1 a2.3 2.3 0 1 1 2.3 2.3 a3.6 3.6 0 1 1 3.6 -3.6" stroke="#8a8a8a" stroke-width="1.3" fill="none" transform="translate(-0.5 0.5)"/></svg>
<div style="left:749px;top:718.5px;width:77px;height:12.5px;background:#121212;border-radius:3px;"></div>
<span style="left:753.00px;top:719.36px;font-size:10.8px;line-height:10.8px;color:#d4d4d4;transform:scaleX(0.8500);transform-origin:0 0;">None</span>
<svg style="left:813px;top:722.5px;" width="8" height="5" viewBox="0 0 8 5"><path d="M0.8 0.8 L4 4 L7.2 0.8" stroke="#d4d4d4" stroke-width="1.5" fill="none"/></svg>
<div style="left:879px;top:717.6px;width:321px;height:13.4px;background:#5f5f5f;"></div>
<div style="left:219px;top:731.9px;width:660px;height:14.27px;background:#1c1c1c;"></div>
<div style="left:219px;top:745.3px;width:981px;height:0.9px;background:#111;"></div>
<div style="left:313px;top:739.0px;width:1px;height:1px;background:#666;"></div>
<svg style="left:321px;top:733.0px;" width="12" height="12" viewBox="0 0 12 12"><rect x="0" y="0" width="12" height="12" rx="2" fill="#111"/><circle cx="6" cy="6.8" r="4" stroke="#2f86e0" stroke-width="1.5" fill="none"/><path d="M6 6.8 L8 4.8 M4.5 1.5 H7.5" stroke="#2f86e0" stroke-width="1.3"/></svg>
<svg style="left:337px;top:734.0px;" width="11" height="10" viewBox="0 0 11 10"><path d="M0.6 0 V9.4 H11" stroke="#9a9a9a" stroke-width="1.1" fill="none"/><path d="M2 4 L4 8 L7 5 L10 6" stroke="#9a9a9a" stroke-width="1.1" fill="none"/></svg>
<span style="left:353.00px;top:734.27px;font-size:10.3px;line-height:10.3px;color:#c4c4c4;transform:scaleX(0.9017);transform-origin:0 0;">X Position</span>
<span style="left:455.00px;top:733.85px;font-size:10.8px;line-height:10.8px;color:#3d93ee;transform:scaleX(0.8500);transform-origin:0 0;">125.3</span>
<svg style="left:745px;top:733.5px;" width="11" height="11" viewBox="0 0 11 11"><path d="M5.5 5.5 m0 -1 a1 1 0 1 1 -1 1 a2.3 2.3 0 1 1 2.3 2.3 a3.6 3.6 0 1 1 3.6 -3.6" stroke="#8e8e8e" stroke-width="1.3" fill="none" transform="translate(-0.5 0.5)"/></svg>
<svg style="left:833px;top:734.5px;" width="30" height="10" viewBox="0 0 30 10"><path d="M4.5 1 V8 L0.8 4.5 Z" fill="#c8c8c8"/><path d="M14.5 1.3 L17.7 4.5 L14.5 7.7 L11.3 4.5 Z" stroke="#c8c8c8" stroke-width="1" fill="none"/><path d="M25 1 V8 L28.7 4.5 Z" fill="#6a6a6a"/></svg>
<div style="left:219px;top:746.1px;width:660px;height:14.27px;background:#1c1c1c;"></div>
<div style="left:219px;top:759.5px;width:981px;height:0.9px;background:#111;"></div>
<div style="left:313px;top:753.3px;width:1px;height:1px;background:#666;"></div>
<svg style="left:321px;top:747.3px;" width="12" height="12" viewBox="0 0 12 12"><rect x="0" y="0" width="12" height="12" rx="2" fill="#111"/><circle cx="6" cy="6.8" r="4" stroke="#2f86e0" stroke-width="1.5" fill="none"/><path d="M6 6.8 L8 4.8 M4.5 1.5 H7.5" stroke="#2f86e0" stroke-width="1.3"/></svg>
<svg style="left:337px;top:748.3px;" width="11" height="10" viewBox="0 0 11 10"><path d="M0.6 0 V9.4 H11" stroke="#9a9a9a" stroke-width="1.1" fill="none"/><path d="M2 4 L4 8 L7 5 L10 6" stroke="#9a9a9a" stroke-width="1.1" fill="none"/></svg>
<span style="left:353.00px;top:748.54px;font-size:10.3px;line-height:10.3px;color:#c4c4c4;transform:scaleX(0.9017);transform-origin:0 0;">Y Position</span>
<span style="left:455.00px;top:748.12px;font-size:10.8px;line-height:10.8px;color:#3d93ee;transform:scaleX(0.8500);transform-origin:0 0;">1252.5</span>
<svg style="left:745px;top:747.8px;" width="11" height="11" viewBox="0 0 11 11"><path d="M5.5 5.5 m0 -1 a1 1 0 1 1 -1 1 a2.3 2.3 0 1 1 2.3 2.3 a3.6 3.6 0 1 1 3.6 -3.6" stroke="#8e8e8e" stroke-width="1.3" fill="none" transform="translate(-0.5 0.5)"/></svg>
<svg style="left:833px;top:748.8px;" width="30" height="10" viewBox="0 0 30 10"><path d="M4.5 1 V8 L0.8 4.5 Z" fill="#c8c8c8"/><path d="M14.5 1.3 L17.7 4.5 L14.5 7.7 L11.3 4.5 Z" stroke="#c8c8c8" stroke-width="1" fill="none"/><path d="M25 1 V8 L28.7 4.5 Z" fill="#6a6a6a"/></svg>
<div style="left:219px;top:760.4px;width:660px;height:14.27px;background:#1c1c1c;"></div>
<div style="left:219px;top:773.8px;width:981px;height:0.9px;background:#111;"></div>
<div style="left:313px;top:767.5px;width:1px;height:1px;background:#666;"></div>
<svg style="left:321px;top:761.5px;" width="12" height="12" viewBox="0 0 12 12"><rect x="0" y="0" width="12" height="12" rx="2" fill="#111"/><circle cx="6" cy="6.8" r="4" stroke="#2f86e0" stroke-width="1.5" fill="none"/><path d="M6 6.8 L8 4.8 M4.5 1.5 H7.5" stroke="#2f86e0" stroke-width="1.3"/></svg>
<svg style="left:337px;top:762.5px;" width="11" height="10" viewBox="0 0 11 10"><path d="M0.6 0 V9.4 H11" stroke="#9a9a9a" stroke-width="1.1" fill="none"/><path d="M2 4 L4 8 L7 5 L10 6" stroke="#9a9a9a" stroke-width="1.1" fill="none"/></svg>
<span style="left:353.00px;top:762.81px;font-size:10.3px;line-height:10.3px;color:#c4c4c4;transform:scaleX(0.9017);transform-origin:0 0;">Scale</span>
<svg style="left:455px;top:764.0px;" width="12" height="7" viewBox="0 0 12 7"><rect x="0.7" y="0.7" width="6" height="5.6" rx="2.8" stroke="#c8c8c8" stroke-width="1.3" fill="none"/><rect x="5" y="0.7" width="6" height="5.6" rx="2.8" stroke="#c8c8c8" stroke-width="1.3" fill="none"/></svg>
<span style="left:470.00px;top:762.39px;font-size:10.8px;line-height:10.8px;color:#3d93ee;transform:scaleX(0.7757);transform-origin:0 0;">108.0,108.0,108.0%</span>
<svg style="left:745px;top:762.0px;" width="11" height="11" viewBox="0 0 11 11"><path d="M5.5 5.5 m0 -1 a1 1 0 1 1 -1 1 a2.3 2.3 0 1 1 2.3 2.3 a3.6 3.6 0 1 1 3.6 -3.6" stroke="#8e8e8e" stroke-width="1.3" fill="none" transform="translate(-0.5 0.5)"/></svg>
<svg style="left:833px;top:763.0px;" width="30" height="10" viewBox="0 0 30 10"><path d="M4.5 1 V8 L0.8 4.5 Z" fill="#c8c8c8"/><path d="M14.5 1.3 L17.7 4.5 L14.5 7.7 L11.3 4.5 Z" stroke="#c8c8c8" stroke-width="1" fill="none"/><path d="M25 1 V8 L28.7 4.5 Z" fill="#6a6a6a"/></svg>
<div style="left:219px;top:774.7px;width:660px;height:14.27px;background:#1c1c1c;"></div>
<div style="left:219px;top:788.1px;width:981px;height:0.9px;background:#111;"></div>
<div style="left:313px;top:781.8px;width:1px;height:1px;background:#666;"></div>
<svg style="left:321px;top:775.8px;" width="12" height="12" viewBox="0 0 12 12"><rect x="0" y="0" width="12" height="12" rx="2" fill="#111"/><circle cx="6" cy="6.8" r="4" stroke="#2f86e0" stroke-width="1.5" fill="none"/><path d="M6 6.8 L8 4.8 M4.5 1.5 H7.5" stroke="#2f86e0" stroke-width="1.3"/></svg>
<svg style="left:337px;top:776.8px;" width="11" height="10" viewBox="0 0 11 10"><path d="M0.6 0 V9.4 H11" stroke="#9a9a9a" stroke-width="1.1" fill="none"/><path d="M2 4 L4 8 L7 5 L10 6" stroke="#9a9a9a" stroke-width="1.1" fill="none"/></svg>
<span style="left:353.00px;top:777.08px;font-size:10.3px;line-height:10.3px;color:#c4c4c4;transform:scaleX(0.9017);transform-origin:0 0;">Z Rotation</span>
<span style="left:455.00px;top:776.66px;font-size:10.8px;line-height:10.8px;color:#3d93ee;transform:scaleX(0.8500);transform-origin:0 0;">0x+8.5°</span>
<svg style="left:745px;top:776.3px;" width="11" height="11" viewBox="0 0 11 11"><path d="M5.5 5.5 m0 -1 a1 1 0 1 1 -1 1 a2.3 2.3 0 1 1 2.3 2.3 a3.6 3.6 0 1 1 3.6 -3.6" stroke="#8e8e8e" stroke-width="1.3" fill="none" transform="translate(-0.5 0.5)"/></svg>
<svg style="left:833px;top:777.3px;" width="30" height="10" viewBox="0 0 30 10"><path d="M4.5 1 V8 L0.8 4.5 Z" fill="#c8c8c8"/><path d="M14.5 1.3 L17.7 4.5 L14.5 7.7 L11.3 4.5 Z" stroke="#c8c8c8" stroke-width="1" fill="none"/><path d="M25 1 V8 L28.7 4.5 Z" fill="#c8c8c8"/></svg>
<div style="left:219px;top:788.9px;width:981px;height:14.27px;background:#3c3c3c;"></div>
<div style="left:219px;top:802.3px;width:981px;height:0.9px;background:#131313;"></div>
<div style="left:224px;top:790.4px;width:10.5px;height:11px;background:#111;"></div>
<svg style="left:224px;top:792.6px;" width="11" height="7" viewBox="0 0 11 7"><path d="M0.5 3.5 Q5.5 -2 10.5 3.5 Q5.5 9 0.5 3.5 Z" fill="#d0d0d0"/><circle cx="5.5" cy="3.5" r="1.8" fill="#111"/><circle cx="5.5" cy="3.5" r="0.8" fill="#d0d0d0"/></svg>
<div style="left:249.5px;top:790.4px;width:10px;height:11px;background:#111;"></div>
<div style="left:262px;top:790.4px;width:10px;height:11px;background:#111;"></div>
<svg style="left:283px;top:792.6px;" width="5" height="7" viewBox="0 0 5 7"><path d="M0.7 0.7 L4 3.5 L0.7 6.3" stroke="#b8b8b8" stroke-width="1.4" fill="none"/></svg>
<div style="left:292px;top:791.1px;width:10px;height:10px;background:#b5a283;"></div>
<span style="left:310.00px;top:790.93px;font-size:10.8px;line-height:10.8px;color:#c0c0c0;transform:scaleX(0.8500);transform-origin:0 0;">15</span>
<svg style="left:334px;top:790.6px;" width="13" height="11" viewBox="0 0 13 11"><rect x="0" y="0" width="13" height="11" fill="#d8d8d8"/><rect x="2" y="2" width="9" height="7" fill="#a8a8a8"/><circle cx="5" cy="5" r="1.8" fill="#2f8be0"/><circle cx="8" cy="6" r="1.8" fill="#e03030"/></svg>
<div style="left:348px;top:789.1999999999999px;width:102px;height:13px;background:#b8b8b8;"></div>
<span style="left:351.00px;top:791.27px;font-size:10.4px;line-height:10.4px;color:#262626;transform:scaleX(0.8931);transform-origin:0 0;">max n katie ref 2</span>
<div style="left:455px;top:790.4px;width:10.5px;height:11px;background:#141414;"></div>
<div style="left:467.5px;top:790.4px;width:10.5px;height:11px;background:#141414;"></div>
<div style="left:480px;top:790.4px;width:10.5px;height:11px;background:#141414;"></div>
<svg style="left:455px;top:791.1px;" width="11" height="10" viewBox="0 0 11 10"><path d="M1.5 5 Q1.5 0 5.5 0 Q9.5 0 9.5 5 Z" fill="#d0d0d0"/><path d="M0 6.5 H11 M5.5 3 V10 M3 9 H8" stroke="#d0d0d0" stroke-width="1.2"/><path d="M3.5 5 V7 M7.5 5 V7" stroke="#d0d0d0"/></svg>
<svg style="left:481px;top:791.1px;" width="9" height="10" viewBox="0 0 9 10"><path d="M0.7 9.3 L8.3 0.7" stroke="#d0d0d0" stroke-width="1.3"/></svg>
<div style="left:518px;top:790.4px;width:10px;height:11px;background:#141414;"></div>
<div style="left:530.5px;top:790.4px;width:10px;height:11px;background:#141414;"></div>
<div style="left:542px;top:788.9px;width:1px;height:14px;background:#8a8a8a;"></div>
<div style="left:553.5px;top:788.9px;width:1px;height:14px;background:#8a8a8a;"></div>
<svg style="left:543px;top:791.1px;" width="10" height="10" viewBox="0 0 10 10"><path d="M5 0.7 L9.3 3 V7.5 L5 9.5 L0.7 7.5 V3 Z M0.7 3 L5 5.3 L9.3 3 M5 5.3 V9.5" stroke="#d0d0d0" stroke-width="1" fill="none"/></svg>
<div style="left:569px;top:789.9px;width:49px;height:12.5px;background:#121212;border-radius:3px;"></div>
<span style="left:573.00px;top:790.76px;font-size:10.8px;line-height:10.8px;color:#d4d4d4;transform:scaleX(0.8333);transform-origin:0 0;">Norm</span>
<svg style="left:605px;top:793.9px;" width="8" height="5" viewBox="0 0 8 5"><path d="M0.8 0.8 L4 4 L7.2 0.8" stroke="#d4d4d4" stroke-width="1.5" fill="none"/></svg>
<div style="left:622px;top:790.4px;width:10px;height:11px;background:#141414;"></div>
<svg style="left:637px;top:790.6px;" width="12" height="11" viewBox="0 0 12 11"><path d="M6 5.5 m0 -1 a1 1 0 1 1 -1 1 a2.3 2.3 0 1 1 2.3 2.3 a3.6 3.6 0 1 1 3.6 -3.6" stroke="#9a9a9a" stroke-width="1.2" fill="none"/><circle cx="10.5" cy="8.5" r="1" fill="#9a9a9a"/></svg>
<div style="left:651px;top:789.9px;width:49px;height:12.5px;background:#121212;border-radius:3px;"></div>
<span style="left:655.00px;top:790.76px;font-size:10.8px;line-height:10.8px;color:#d4d4d4;transform:scaleX(0.8138);transform-origin:0 0;">No M</span>
<svg style="left:687px;top:793.9px;" width="8" height="5" viewBox="0 0 8 5"><path d="M0.8 0.8 L4 4 L7.2 0.8" stroke="#d4d4d4" stroke-width="1.5" fill="none"/></svg>
<svg style="left:735px;top:790.6px;" width="11" height="11" viewBox="0 0 11 11"><path d="M5.5 5.5 m0 -1 a1 1 0 1 1 -1 1 a2.3 2.3 0 1 1 2.3 2.3 a3.6 3.6 0 1 1 3.6 -3.6" stroke="#8a8a8a" stroke-width="1.3" fill="none" transform="translate(-0.5 0.5)"/></svg>
<div style="left:749px;top:789.9px;width:77px;height:12.5px;background:#121212;border-radius:3px;"></div>
<span style="left:753.00px;top:790.76px;font-size:10.8px;line-height:10.8px;color:#d4d4d4;transform:scaleX(0.8500);transform-origin:0 0;">None</span>
<svg style="left:813px;top:793.9px;" width="8" height="5" viewBox="0 0 8 5"><path d="M0.8 0.8 L4 4 L7.2 0.8" stroke="#d4d4d4" stroke-width="1.5" fill="none"/></svg>
<div style="left:879px;top:788.9px;width:321px;height:13.4px;background:#5f5f5f;"></div>
<div style="left:219px;top:803.2px;width:981px;height:14.27px;background:#3c3c3c;"></div>
<div style="left:219px;top:816.6px;width:981px;height:0.9px;background:#131313;"></div>
<div style="left:224px;top:804.7px;width:10.5px;height:11px;background:#111;"></div>
<svg style="left:224px;top:806.8px;" width="11" height="7" viewBox="0 0 11 7"><path d="M0.5 3.5 Q5.5 -2 10.5 3.5 Q5.5 9 0.5 3.5 Z" fill="#d0d0d0"/><circle cx="5.5" cy="3.5" r="1.8" fill="#111"/><circle cx="5.5" cy="3.5" r="0.8" fill="#d0d0d0"/></svg>
<div style="left:249.5px;top:804.7px;width:10px;height:11px;background:#111;"></div>
<div style="left:262px;top:804.7px;width:10px;height:11px;background:#111;"></div>
<svg style="left:282px;top:807.8px;" width="7" height="5" viewBox="0 0 7 5"><path d="M0.7 0.7 L3.5 4 L6.3 0.7" stroke="#b8b8b8" stroke-width="1.4" fill="none"/></svg>
<div style="left:292px;top:805.3px;width:10px;height:10px;background:#b5a283;"></div>
<span style="left:310.00px;top:805.20px;font-size:10.8px;line-height:10.8px;color:#c0c0c0;transform:scaleX(0.8500);transform-origin:0 0;">16</span>
<svg style="left:334px;top:804.8px;" width="13" height="11" viewBox="0 0 13 11"><rect x="0" y="0" width="13" height="11" fill="#d8d8d8"/><rect x="2" y="2" width="9" height="7" fill="#a8a8a8"/><circle cx="5" cy="5" r="1.8" fill="#2f8be0"/><circle cx="8" cy="6" r="1.8" fill="#e03030"/></svg>
<div style="left:348px;top:803.5px;width:102px;height:13px;background:#b8b8b8;"></div>
<span style="left:351.00px;top:805.54px;font-size:10.4px;line-height:10.4px;color:#262626;transform:scaleX(0.8931);transform-origin:0 0;">max n katie ref</span>
<div style="left:455px;top:804.7px;width:10.5px;height:11px;background:#141414;"></div>
<div style="left:467.5px;top:804.7px;width:10.5px;height:11px;background:#141414;"></div>
<div style="left:480px;top:804.7px;width:10.5px;height:11px;background:#141414;"></div>
<svg style="left:455px;top:805.3px;" width="11" height="10" viewBox="0 0 11 10"><path d="M1.5 5 Q1.5 0 5.5 0 Q9.5 0 9.5 5 Z" fill="#d0d0d0"/><path d="M0 6.5 H11 M5.5 3 V10 M3 9 H8" stroke="#d0d0d0" stroke-width="1.2"/><path d="M3.5 5 V7 M7.5 5 V7" stroke="#d0d0d0"/></svg>
<svg style="left:481px;top:805.3px;" width="9" height="10" viewBox="0 0 9 10"><path d="M0.7 9.3 L8.3 0.7" stroke="#d0d0d0" stroke-width="1.3"/></svg>
<span style="left:492.00px;top:805.03px;font-size:11px;line-height:11px;color:#c0c0c0;font-style:italic;">fx</span>
<div style="left:518px;top:804.7px;width:10px;height:11px;background:#141414;"></div>
<div style="left:530.5px;top:804.7px;width:10px;height:11px;background:#141414;"></div>
<div style="left:542px;top:803.2px;width:1px;height:14px;background:#8a8a8a;"></div>
<div style="left:553.5px;top:803.2px;width:1px;height:14px;background:#8a8a8a;"></div>
<svg style="left:543px;top:805.3px;" width="10" height="10" viewBox="0 0 10 10"><path d="M5 0.7 L9.3 3 V7.5 L5 9.5 L0.7 7.5 V3 Z M0.7 3 L5 5.3 L9.3 3 M5 5.3 V9.5" stroke="#d0d0d0" stroke-width="1" fill="none"/></svg>
<div style="left:569px;top:804.1px;width:49px;height:12.5px;background:#121212;border-radius:3px;"></div>
<span style="left:573.00px;top:804.96px;font-size:10.8px;line-height:10.8px;color:#d4d4d4;transform:scaleX(0.8333);transform-origin:0 0;">Norm</span>
<svg style="left:605px;top:808.1px;" width="8" height="5" viewBox="0 0 8 5"><path d="M0.8 0.8 L4 4 L7.2 0.8" stroke="#d4d4d4" stroke-width="1.5" fill="none"/></svg>
<div style="left:622px;top:804.7px;width:10px;height:11px;background:#141414;"></div>
<svg style="left:637px;top:804.8px;" width="12" height="11" viewBox="0 0 12 11"><path d="M6 5.5 m0 -1 a1 1 0 1 1 -1 1 a2.3 2.3 0 1 1 2.3 2.3 a3.6 3.6 0 1 1 3.6 -3.6" stroke="#9a9a9a" stroke-width="1.2" fill="none"/><circle cx="10.5" cy="8.5" r="1" fill="#9a9a9a"/></svg>
<div style="left:651px;top:804.1px;width:49px;height:12.5px;background:#121212;border-radius:3px;"></div>
<span style="left:655.00px;top:804.96px;font-size:10.8px;line-height:10.8px;color:#d4d4d4;transform:scaleX(0.8138);transform-origin:0 0;">No M</span>
<svg style="left:687px;top:808.1px;" width="8" height="5" viewBox="0 0 8 5"><path d="M0.8 0.8 L4 4 L7.2 0.8" stroke="#d4d4d4" stroke-width="1.5" fill="none"/></svg>
<svg style="left:735px;top:804.8px;" width="11" height="11" viewBox="0 0 11 11"><path d="M5.5 5.5 m0 -1 a1 1 0 1 1 -1 1 a2.3 2.3 0 1 1 2.3 2.3 a3.6 3.6 0 1 1 3.6 -3.6" stroke="#8a8a8a" stroke-width="1.3" fill="none" transform="translate(-0.5 0.5)"/></svg>
<div style="left:749px;top:804.1px;width:77px;height:12.5px;background:#121212;border-radius:3px;"></div>
<span style="left:753.00px;top:804.96px;font-size:10.8px;line-height:10.8px;color:#d4d4d4;transform:scaleX(0.8500);transform-origin:0 0;">None</span>
<svg style="left:813px;top:808.1px;" width="8" height="5" viewBox="0 0 8 5"><path d="M0.8 0.8 L4 4 L7.2 0.8" stroke="#d4d4d4" stroke-width="1.5" fill="none"/></svg>
<div style="left:879px;top:803.2px;width:321px;height:13.4px;background:#5f5f5f;"></div>
<div style="left:879px;top:617.6px;width:321px;height:206px;background:#252525;"></div>
<div style="left:879px;top:631.1px;width:321px;height:0.9px;background:#121212;"></div>
<div style="left:879px;top:617.7px;width:1.5px;height:13.4px;background:#1c1c1c;"></div>
<div style="left:879px;top:645.4px;width:321px;height:0.9px;background:#121212;"></div>
<div style="left:879px;top:632.0px;width:1.5px;height:13.4px;background:#1c1c1c;"></div>
<div style="left:879px;top:659.6px;width:321px;height:0.9px;background:#121212;"></div>
<div style="left:879px;top:646.2px;width:1.5px;height:13.4px;background:#4a4a4a;"></div>
<div style="left:879px;top:673.9px;width:321px;height:0.9px;background:#121212;"></div>
<div style="left:879px;top:660.5px;width:1.5px;height:13.4px;background:#1c1c1c;"></div>
<div style="left:879px;top:688.2px;width:321px;height:0.9px;background:#121212;"></div>
<div style="left:879px;top:674.8px;width:1.5px;height:13.4px;background:#1c1c1c;"></div>
<div style="left:879px;top:702.5px;width:321px;height:0.9px;background:#121212;"></div>
<div style="left:879px;top:689.1px;width:1.5px;height:13.4px;background:#4a4a4a;"></div>
<div style="left:879px;top:716.7px;width:321px;height:0.9px;background:#121212;"></div>
<div style="left:879px;top:703.3px;width:1.5px;height:13.4px;background:#4a4a4a;"></div>
<div style="left:879px;top:731.0px;width:321px;height:0.9px;background:#121212;"></div>
<div style="left:879px;top:717.6px;width:1.5px;height:13.4px;background:#4a4a4a;"></div>
<div style="left:879px;top:745.3px;width:321px;height:0.9px;background:#121212;"></div>
<div style="left:879px;top:731.9px;width:1.5px;height:13.4px;background:#1c1c1c;"></div>
<div style="left:879px;top:759.5px;width:321px;height:0.9px;background:#121212;"></div>
<div style="left:879px;top:746.1px;width:1.5px;height:13.4px;background:#1c1c1c;"></div>
<div style="left:879px;top:773.8px;width:321px;height:0.9px;background:#121212;"></div>
<div style="left:879px;top:760.4px;width:1.5px;height:13.4px;background:#1c1c1c;"></div>
<div style="left:879px;top:788.1px;width:321px;height:0.9px;background:#121212;"></div>
<div style="left:879px;top:774.7px;width:1.5px;height:13.4px;background:#1c1c1c;"></div>
<div style="left:879px;top:802.3px;width:321px;height:0.9px;background:#121212;"></div>
<div style="left:879px;top:788.9px;width:1.5px;height:13.4px;background:#4a4a4a;"></div>
<div style="left:879px;top:816.6px;width:321px;height:0.9px;background:#121212;"></div>
<div style="left:879px;top:803.2px;width:1.5px;height:13.4px;background:#4a4a4a;"></div>
<div style="left:880px;top:646.5px;width:320px;height:12.8px;background:#a3a3c6;background-image:linear-gradient(0deg,rgba(60,60,130,.35),rgba(255,255,255,.05) 40%,rgba(60,60,130,.1))"></div>
<div style="left:880px;top:689.4px;width:320px;height:12.8px;background:#a3a3c6;background-image:linear-gradient(0deg,rgba(60,60,130,.35),rgba(255,255,255,.05) 40%,rgba(60,60,130,.1))"></div>
<div style="left:880px;top:703.6px;width:320px;height:12.8px;background:#a3a3c6;background-image:linear-gradient(0deg,rgba(60,60,130,.35),rgba(255,255,255,.05) 40%,rgba(60,60,130,.1))"></div>
<div style="left:880px;top:717.9px;width:320px;height:12.8px;background:#a3a3c6;background-image:linear-gradient(0deg,rgba(60,60,130,.35),rgba(255,255,255,.05) 40%,rgba(60,60,130,.1))"></div>
<div style="left:880px;top:789.2px;width:25px;height:12.8px;background:#777;"></div>
<div style="left:905px;top:789.2px;width:295px;height:12.8px;background:#b1a084;"></div>
<div style="left:905px;top:789.2px;width:1px;height:12.8px;background:#e8d8b8;"></div>
<div style="left:880px;top:803.5px;width:25px;height:11px;background:#b1a084;"></div>
<div style="left:905px;top:803.5px;width:295px;height:11px;background:#6b6863;"></div>
<svg style="left:1184px;top:663.1px;" width="8" height="9" viewBox="0 0 8 9"><path d="M0.5 0.5 H7.5 L4.8 4.5 L7.5 8.5 H0.5 L3.2 4.5 Z" fill="#d8d8d8"/></svg>
<svg style="left:1184px;top:677.4px;" width="8" height="9" viewBox="0 0 8 9"><path d="M4 0.5 L7.5 4.5 L4 8.5 L0.5 4.5 Z" fill="#d8d8d8"/></svg>
<svg style="left:901px;top:734.5px;" width="8" height="9" viewBox="0 0 8 9"><path d="M0.5 0.5 H7.5 L4.8 4.5 L7.5 8.5 H0.5 L3.2 4.5 Z" fill="#d8d8d8"/></svg>
<svg style="left:901px;top:748.8px;" width="8" height="9" viewBox="0 0 8 9"><path d="M0.5 0.5 H7.5 L4.8 4.5 L7.5 8.5 H0.5 L3.2 4.5 Z" fill="#d8d8d8"/></svg>
<svg style="left:1086px;top:734.5px;" width="8" height="9" viewBox="0 0 8 9"><path d="M0.5 0.5 H7.5 L4.8 4.5 L7.5 8.5 H0.5 L3.2 4.5 Z" fill="#d8d8d8"/></svg>
<svg style="left:1086px;top:748.8px;" width="8" height="9" viewBox="0 0 8 9"><path d="M0.5 0.5 H7.5 L4.8 4.5 L7.5 8.5 H0.5 L3.2 4.5 Z" fill="#d8d8d8"/></svg>
<svg style="left:1159px;top:734.5px;" width="8" height="9" viewBox="0 0 8 9"><path d="M0.5 0.5 H7.5 L4.8 4.5 L7.5 8.5 H0.5 L3.2 4.5 Z" fill="#d8d8d8"/></svg>
<svg style="left:1159px;top:748.8px;" width="8" height="9" viewBox="0 0 8 9"><path d="M0.5 0.5 H7.5 L4.8 4.5 L7.5 8.5 H0.5 L3.2 4.5 Z" fill="#d8d8d8"/></svg>
<svg style="left:975px;top:763.0px;" width="8" height="9" viewBox="0 0 8 9"><path d="M0.5 0.5 H7.5 L4.8 4.5 L7.5 8.5 H0.5 L3.2 4.5 Z" fill="#d8d8d8"/></svg>
<svg style="left:1086px;top:763.0px;" width="8" height="9" viewBox="0 0 8 9"><path d="M0.5 0.5 H7.5 L4.8 4.5 L7.5 8.5 H0.5 L3.2 4.5 Z" fill="#d8d8d8"/></svg>
<svg style="left:1159px;top:763.0px;" width="8" height="9" viewBox="0 0 8 9"><path d="M0.5 0.5 H7.5 L4.8 4.5 L7.5 8.5 H0.5 L3.2 4.5 Z" fill="#d8d8d8"/></svg>
<svg style="left:921px;top:777.3px;" width="8" height="9" viewBox="0 0 8 9"><path d="M0.5 0.5 H7.5 L4.8 4.5 L7.5 8.5 H0.5 L3.2 4.5 Z" fill="#d8d8d8"/></svg>
<svg style="left:1106px;top:777.3px;" width="8" height="9" viewBox="0 0 8 9"><path d="M0.5 0.5 H7.5 L4.8 4.5 L7.5 8.5 H0.5 L3.2 4.5 Z" fill="#d8d8d8"/></svg>
<svg style="left:1196px;top:777.3px;" width="8" height="9" viewBox="0 0 8 9"><path d="M0.5 0.5 H7.5 L4.8 4.5 L7.5 8.5 H0.5 L3.2 4.5 Z" fill="#d8d8d8"/></svg>
<div style="left:219px;top:812px;width:981px;height:12px;background:#1b1b1b;"></div>
<div style="left:224px;top:813px;width:14px;height:11px;background:#383838;border-radius:2px;"></div>
<svg style="left:225px;top:814px;" width="12" height="10" viewBox="0 0 12 10"><rect x="1" y="1" width="6" height="6" stroke="#b8b8b8" fill="none"/><rect x="4" y="3" width="6" height="6" stroke="#b8b8b8" fill="none"/></svg>
<div style="left:241px;top:813px;width:14px;height:11px;background:#383838;border-radius:2px;"></div>
<svg style="left:242px;top:814px;" width="12" height="10" viewBox="0 0 12 10"><circle cx="5" cy="4.5" r="3.5" stroke="#b8b8b8" fill="none"/><rect x="5" y="4.5" width="5" height="5" stroke="#b8b8b8" fill="#555"/></svg>
<span style="left:258.00px;top:813.36px;font-size:10.8px;line-height:10.8px;color:#b8b8b8;">{}</span>
<svg style="left:274px;top:813px;" width="12" height="11" viewBox="0 0 12 11"><circle cx="4" cy="3" r="2.5" fill="#b8b8b8"/><path d="M0 11 Q0 6 4 6 Q8 6 8 11 Z" fill="#b8b8b8"/><path d="M9 4 H12 M10.5 2.5 V6" stroke="#b8b8b8"/></svg>
<span style="left:307.00px;top:813.86px;font-size:10.8px;line-height:10.8px;color:#c0c0c0;transform:scaleX(0.8684);transform-origin:0 0;">Frame Render Time:</span>
<span style="left:394.00px;top:813.86px;font-size:10.8px;line-height:10.8px;color:#e8b040;transform:scaleX(0.8637);transform-origin:0 0;">198ms</span>
<div style="left:879px;top:812px;width:8px;height:12px;background:#1b1b1b;"></div>
<svg style="left:883px;top:815px;" width="10" height="6" viewBox="0 0 10 6"><path d="M0 6 L5 1 L10 6 Z" fill="#b8b8b8"/></svg>
<div style="left:900px;top:818px;width:30px;height:1px;background:#777;"></div>
<svg style="left:932px;top:813px;" width="10" height="10" viewBox="0 0 10 10"><circle cx="5" cy="5" r="3.8" stroke="#c8c8c8" stroke-width="1.5" fill="#1b1b1b"/></svg>
<svg style="left:952px;top:814px;" width="14" height="8" viewBox="0 0 14 8"><path d="M0 8 L4 2 L7 5 L10 0 L14 8 Z" fill="#b8b8b8"/></svg>
<div style="left:1049px;top:812px;width:130px;height:12px;background:#505050;"></div>
</body></html>
